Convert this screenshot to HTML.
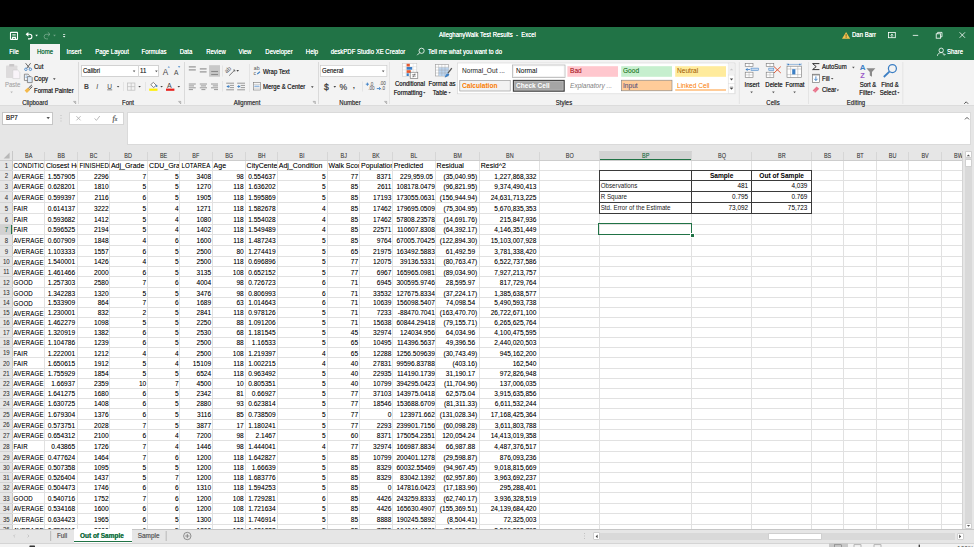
<!DOCTYPE html>
<html><head><meta charset="utf-8"><style>
html,body{margin:0;padding:0;width:974px;height:547px;overflow:hidden;background:#fff;}
body{position:relative;font-family:"Liberation Sans",sans-serif;}
.t{position:absolute;white-space:nowrap;overflow:hidden;box-sizing:border-box;text-shadow:0 0 0.25px rgba(0,0,0,0.3);}
.u{position:absolute;white-space:nowrap;text-shadow:0 0 0.2px;}
</style></head><body>
<div style="position:absolute;left:0;top:150.5px;width:963.0px;height:9.800000000000011px;background:#e6e6e6"></div>
<div style="position:absolute;left:0;top:160.3px;width:12.3px;height:368.90000000000003px;background:#e6e6e6"></div>
<div style="position:absolute;left:12.3px;top:160.3px;width:950.7px;height:368.90000000000003px;background:#fff"></div>
<div style="position:absolute;left:599.3px;top:150.5px;width:92.30000000000007px;height:9.800000000000011px;background:#d2d2d2;border-bottom:1px solid #217346;box-sizing:border-box"></div>
<div style="position:absolute;left:0;top:224.3px;width:12.3px;height:10.099999999999994px;background:#d2d2d2;border-right:1px solid #217346;box-sizing:border-box"></div>
<div style="position:absolute;left:11.80px;top:150.5px;width:1px;height:378.70000000000005px;background:#c8c8c8"></div>
<div style="position:absolute;left:44.10px;top:151.5px;width:1px;height:8.800000000000011px;background:#d6d6d6"></div>
<div style="position:absolute;left:44.10px;top:160.3px;width:1px;height:368.90000000000003px;background:#e1e1e1"></div>
<div style="position:absolute;left:77.10px;top:151.5px;width:1px;height:8.800000000000011px;background:#d6d6d6"></div>
<div style="position:absolute;left:77.10px;top:160.3px;width:1px;height:368.90000000000003px;background:#e1e1e1"></div>
<div style="position:absolute;left:109.10px;top:151.5px;width:1px;height:8.800000000000011px;background:#d6d6d6"></div>
<div style="position:absolute;left:109.10px;top:160.3px;width:1px;height:368.90000000000003px;background:#e1e1e1"></div>
<div style="position:absolute;left:147.30px;top:151.5px;width:1px;height:8.800000000000011px;background:#d6d6d6"></div>
<div style="position:absolute;left:147.30px;top:160.3px;width:1px;height:368.90000000000003px;background:#e1e1e1"></div>
<div style="position:absolute;left:179.30px;top:151.5px;width:1px;height:8.800000000000011px;background:#d6d6d6"></div>
<div style="position:absolute;left:179.30px;top:160.3px;width:1px;height:368.90000000000003px;background:#e1e1e1"></div>
<div style="position:absolute;left:211.80px;top:151.5px;width:1px;height:8.800000000000011px;background:#d6d6d6"></div>
<div style="position:absolute;left:211.80px;top:160.3px;width:1px;height:368.90000000000003px;background:#e1e1e1"></div>
<div style="position:absolute;left:244.80px;top:151.5px;width:1px;height:8.800000000000011px;background:#d6d6d6"></div>
<div style="position:absolute;left:244.80px;top:160.3px;width:1px;height:368.90000000000003px;background:#e1e1e1"></div>
<div style="position:absolute;left:277.00px;top:151.5px;width:1px;height:8.800000000000011px;background:#d6d6d6"></div>
<div style="position:absolute;left:277.00px;top:160.3px;width:1px;height:368.90000000000003px;background:#e1e1e1"></div>
<div style="position:absolute;left:326.80px;top:151.5px;width:1px;height:8.800000000000011px;background:#d6d6d6"></div>
<div style="position:absolute;left:326.80px;top:160.3px;width:1px;height:368.90000000000003px;background:#e1e1e1"></div>
<div style="position:absolute;left:359.20px;top:151.5px;width:1px;height:8.800000000000011px;background:#d6d6d6"></div>
<div style="position:absolute;left:359.20px;top:160.3px;width:1px;height:368.90000000000003px;background:#e1e1e1"></div>
<div style="position:absolute;left:391.90px;top:151.5px;width:1px;height:8.800000000000011px;background:#d6d6d6"></div>
<div style="position:absolute;left:391.90px;top:160.3px;width:1px;height:368.90000000000003px;background:#e1e1e1"></div>
<div style="position:absolute;left:434.80px;top:151.5px;width:1px;height:8.800000000000011px;background:#d6d6d6"></div>
<div style="position:absolute;left:434.80px;top:160.3px;width:1px;height:368.90000000000003px;background:#e1e1e1"></div>
<div style="position:absolute;left:479.00px;top:151.5px;width:1px;height:8.800000000000011px;background:#d6d6d6"></div>
<div style="position:absolute;left:479.00px;top:160.3px;width:1px;height:368.90000000000003px;background:#e1e1e1"></div>
<div style="position:absolute;left:538.90px;top:151.5px;width:1px;height:8.800000000000011px;background:#d6d6d6"></div>
<div style="position:absolute;left:538.90px;top:160.3px;width:1px;height:368.90000000000003px;background:#e1e1e1"></div>
<div style="position:absolute;left:598.80px;top:151.5px;width:1px;height:8.800000000000011px;background:#d6d6d6"></div>
<div style="position:absolute;left:598.80px;top:160.3px;width:1px;height:368.90000000000003px;background:#e1e1e1"></div>
<div style="position:absolute;left:691.10px;top:151.5px;width:1px;height:8.800000000000011px;background:#d6d6d6"></div>
<div style="position:absolute;left:691.10px;top:160.3px;width:1px;height:368.90000000000003px;background:#e1e1e1"></div>
<div style="position:absolute;left:751.20px;top:151.5px;width:1px;height:8.800000000000011px;background:#d6d6d6"></div>
<div style="position:absolute;left:751.20px;top:160.3px;width:1px;height:368.90000000000003px;background:#e1e1e1"></div>
<div style="position:absolute;left:811.10px;top:151.5px;width:1px;height:8.800000000000011px;background:#d6d6d6"></div>
<div style="position:absolute;left:811.10px;top:160.3px;width:1px;height:368.90000000000003px;background:#e1e1e1"></div>
<div style="position:absolute;left:843.10px;top:151.5px;width:1px;height:8.800000000000011px;background:#d6d6d6"></div>
<div style="position:absolute;left:843.10px;top:160.3px;width:1px;height:368.90000000000003px;background:#e1e1e1"></div>
<div style="position:absolute;left:876.10px;top:151.5px;width:1px;height:8.800000000000011px;background:#d6d6d6"></div>
<div style="position:absolute;left:876.10px;top:160.3px;width:1px;height:368.90000000000003px;background:#e1e1e1"></div>
<div style="position:absolute;left:908.20px;top:151.5px;width:1px;height:8.800000000000011px;background:#d6d6d6"></div>
<div style="position:absolute;left:908.20px;top:160.3px;width:1px;height:368.90000000000003px;background:#e1e1e1"></div>
<div style="position:absolute;left:941.10px;top:151.5px;width:1px;height:8.800000000000011px;background:#d6d6d6"></div>
<div style="position:absolute;left:941.10px;top:160.3px;width:1px;height:368.90000000000003px;background:#e1e1e1"></div>
<div style="position:absolute;left:0;top:159.80px;width:963.0px;height:1px;background:#cdcdcd"></div>
<div style="position:absolute;left:12.3px;top:169.90px;width:950.7px;height:1px;background:#e1e1e1"></div>
<div style="position:absolute;left:0;top:169.90px;width:12.3px;height:1px;background:#d4d4d4"></div>
<div style="position:absolute;left:12.3px;top:180.30px;width:950.7px;height:1px;background:#e1e1e1"></div>
<div style="position:absolute;left:0;top:180.30px;width:12.3px;height:1px;background:#d4d4d4"></div>
<div style="position:absolute;left:12.3px;top:190.90px;width:950.7px;height:1px;background:#e1e1e1"></div>
<div style="position:absolute;left:0;top:190.90px;width:12.3px;height:1px;background:#d4d4d4"></div>
<div style="position:absolute;left:12.3px;top:201.90px;width:950.7px;height:1px;background:#e1e1e1"></div>
<div style="position:absolute;left:0;top:201.90px;width:12.3px;height:1px;background:#d4d4d4"></div>
<div style="position:absolute;left:12.3px;top:212.90px;width:950.7px;height:1px;background:#e1e1e1"></div>
<div style="position:absolute;left:0;top:212.90px;width:12.3px;height:1px;background:#d4d4d4"></div>
<div style="position:absolute;left:12.3px;top:223.80px;width:950.7px;height:1px;background:#e1e1e1"></div>
<div style="position:absolute;left:0;top:223.80px;width:12.3px;height:1px;background:#d4d4d4"></div>
<div style="position:absolute;left:12.3px;top:233.90px;width:950.7px;height:1px;background:#e1e1e1"></div>
<div style="position:absolute;left:0;top:233.90px;width:12.3px;height:1px;background:#d4d4d4"></div>
<div style="position:absolute;left:12.3px;top:244.80px;width:950.7px;height:1px;background:#e1e1e1"></div>
<div style="position:absolute;left:0;top:244.80px;width:12.3px;height:1px;background:#d4d4d4"></div>
<div style="position:absolute;left:12.3px;top:255.80px;width:950.7px;height:1px;background:#e1e1e1"></div>
<div style="position:absolute;left:0;top:255.80px;width:12.3px;height:1px;background:#d4d4d4"></div>
<div style="position:absolute;left:12.3px;top:266.10px;width:950.7px;height:1px;background:#e1e1e1"></div>
<div style="position:absolute;left:0;top:266.10px;width:12.3px;height:1px;background:#d4d4d4"></div>
<div style="position:absolute;left:12.3px;top:276.30px;width:950.7px;height:1px;background:#e1e1e1"></div>
<div style="position:absolute;left:0;top:276.30px;width:12.3px;height:1px;background:#d4d4d4"></div>
<div style="position:absolute;left:12.3px;top:287.00px;width:950.7px;height:1px;background:#e1e1e1"></div>
<div style="position:absolute;left:0;top:287.00px;width:12.3px;height:1px;background:#d4d4d4"></div>
<div style="position:absolute;left:12.3px;top:297.20px;width:950.7px;height:1px;background:#e1e1e1"></div>
<div style="position:absolute;left:0;top:297.20px;width:12.3px;height:1px;background:#d4d4d4"></div>
<div style="position:absolute;left:12.3px;top:307.10px;width:950.7px;height:1px;background:#e1e1e1"></div>
<div style="position:absolute;left:0;top:307.10px;width:12.3px;height:1px;background:#d4d4d4"></div>
<div style="position:absolute;left:12.3px;top:317.10px;width:950.7px;height:1px;background:#e1e1e1"></div>
<div style="position:absolute;left:0;top:317.10px;width:12.3px;height:1px;background:#d4d4d4"></div>
<div style="position:absolute;left:12.3px;top:326.90px;width:950.7px;height:1px;background:#e1e1e1"></div>
<div style="position:absolute;left:0;top:326.90px;width:12.3px;height:1px;background:#d4d4d4"></div>
<div style="position:absolute;left:12.3px;top:336.80px;width:950.7px;height:1px;background:#e1e1e1"></div>
<div style="position:absolute;left:0;top:336.80px;width:12.3px;height:1px;background:#d4d4d4"></div>
<div style="position:absolute;left:12.3px;top:347.00px;width:950.7px;height:1px;background:#e1e1e1"></div>
<div style="position:absolute;left:0;top:347.00px;width:12.3px;height:1px;background:#d4d4d4"></div>
<div style="position:absolute;left:12.3px;top:357.40px;width:950.7px;height:1px;background:#e1e1e1"></div>
<div style="position:absolute;left:0;top:357.40px;width:12.3px;height:1px;background:#d4d4d4"></div>
<div style="position:absolute;left:12.3px;top:367.80px;width:950.7px;height:1px;background:#e1e1e1"></div>
<div style="position:absolute;left:0;top:367.80px;width:12.3px;height:1px;background:#d4d4d4"></div>
<div style="position:absolute;left:12.3px;top:377.90px;width:950.7px;height:1px;background:#e1e1e1"></div>
<div style="position:absolute;left:0;top:377.90px;width:12.3px;height:1px;background:#d4d4d4"></div>
<div style="position:absolute;left:12.3px;top:387.90px;width:950.7px;height:1px;background:#e1e1e1"></div>
<div style="position:absolute;left:0;top:387.90px;width:12.3px;height:1px;background:#d4d4d4"></div>
<div style="position:absolute;left:12.3px;top:398.00px;width:950.7px;height:1px;background:#e1e1e1"></div>
<div style="position:absolute;left:0;top:398.00px;width:12.3px;height:1px;background:#d4d4d4"></div>
<div style="position:absolute;left:12.3px;top:407.90px;width:950.7px;height:1px;background:#e1e1e1"></div>
<div style="position:absolute;left:0;top:407.90px;width:12.3px;height:1px;background:#d4d4d4"></div>
<div style="position:absolute;left:12.3px;top:418.70px;width:950.7px;height:1px;background:#e1e1e1"></div>
<div style="position:absolute;left:0;top:418.70px;width:12.3px;height:1px;background:#d4d4d4"></div>
<div style="position:absolute;left:12.3px;top:429.30px;width:950.7px;height:1px;background:#e1e1e1"></div>
<div style="position:absolute;left:0;top:429.30px;width:12.3px;height:1px;background:#d4d4d4"></div>
<div style="position:absolute;left:12.3px;top:440.00px;width:950.7px;height:1px;background:#e1e1e1"></div>
<div style="position:absolute;left:0;top:440.00px;width:12.3px;height:1px;background:#d4d4d4"></div>
<div style="position:absolute;left:12.3px;top:450.70px;width:950.7px;height:1px;background:#e1e1e1"></div>
<div style="position:absolute;left:0;top:450.70px;width:12.3px;height:1px;background:#d4d4d4"></div>
<div style="position:absolute;left:12.3px;top:461.90px;width:950.7px;height:1px;background:#e1e1e1"></div>
<div style="position:absolute;left:0;top:461.90px;width:12.3px;height:1px;background:#d4d4d4"></div>
<div style="position:absolute;left:12.3px;top:472.00px;width:950.7px;height:1px;background:#e1e1e1"></div>
<div style="position:absolute;left:0;top:472.00px;width:12.3px;height:1px;background:#d4d4d4"></div>
<div style="position:absolute;left:12.3px;top:482.00px;width:950.7px;height:1px;background:#e1e1e1"></div>
<div style="position:absolute;left:0;top:482.00px;width:12.3px;height:1px;background:#d4d4d4"></div>
<div style="position:absolute;left:12.3px;top:491.90px;width:950.7px;height:1px;background:#e1e1e1"></div>
<div style="position:absolute;left:0;top:491.90px;width:12.3px;height:1px;background:#d4d4d4"></div>
<div style="position:absolute;left:12.3px;top:502.60px;width:950.7px;height:1px;background:#e1e1e1"></div>
<div style="position:absolute;left:0;top:502.60px;width:12.3px;height:1px;background:#d4d4d4"></div>
<div style="position:absolute;left:12.3px;top:512.70px;width:950.7px;height:1px;background:#e1e1e1"></div>
<div style="position:absolute;left:0;top:512.70px;width:12.3px;height:1px;background:#d4d4d4"></div>
<div style="position:absolute;left:12.3px;top:523.80px;width:950.7px;height:1px;background:#e1e1e1"></div>
<div style="position:absolute;left:0;top:523.80px;width:12.3px;height:1px;background:#d4d4d4"></div>
<div class="t" style="left:9.67px;top:151.58px;width:37.56px;height:8.0px;line-height:8.0px;font-size:6.4px;text-align:center;color:#444;transform:scaleX(0.86);transform-origin:50% 50%;">BA</div>
<div class="t" style="left:41.91px;top:151.58px;width:38.37px;height:8.0px;line-height:8.0px;font-size:6.4px;text-align:center;color:#444;transform:scaleX(0.86);transform-origin:50% 50%;">BB</div>
<div class="t" style="left:75.00px;top:151.58px;width:37.21px;height:8.0px;line-height:8.0px;font-size:6.4px;text-align:center;color:#444;transform:scaleX(0.86);transform-origin:50% 50%;">BC</div>
<div class="t" style="left:106.49px;top:151.58px;width:44.42px;height:8.0px;line-height:8.0px;font-size:6.4px;text-align:center;color:#444;transform:scaleX(0.86);transform-origin:50% 50%;">BD</div>
<div class="t" style="left:145.20px;top:151.58px;width:37.21px;height:8.0px;line-height:8.0px;font-size:6.4px;text-align:center;color:#444;transform:scaleX(0.86);transform-origin:50% 50%;">BE</div>
<div class="t" style="left:177.15px;top:151.58px;width:37.79px;height:8.0px;line-height:8.0px;font-size:6.4px;text-align:center;color:#444;transform:scaleX(0.86);transform-origin:50% 50%;">BF</div>
<div class="t" style="left:209.61px;top:151.58px;width:38.37px;height:8.0px;line-height:8.0px;font-size:6.4px;text-align:center;color:#444;transform:scaleX(0.86);transform-origin:50% 50%;">BG</div>
<div class="t" style="left:242.68px;top:151.58px;width:37.44px;height:8.0px;line-height:8.0px;font-size:6.4px;text-align:center;color:#444;transform:scaleX(0.86);transform-origin:50% 50%;">BH</div>
<div class="t" style="left:273.45px;top:151.58px;width:57.91px;height:8.0px;line-height:8.0px;font-size:6.4px;text-align:center;color:#444;transform:scaleX(0.86);transform-origin:50% 50%;">BI</div>
<div class="t" style="left:324.66px;top:151.58px;width:37.67px;height:8.0px;line-height:8.0px;font-size:6.4px;text-align:center;color:#444;transform:scaleX(0.86);transform-origin:50% 50%;">BJ</div>
<div class="t" style="left:357.04px;top:151.58px;width:38.02px;height:8.0px;line-height:8.0px;font-size:6.4px;text-align:center;color:#444;transform:scaleX(0.86);transform-origin:50% 50%;">BK</div>
<div class="t" style="left:388.91px;top:151.58px;width:49.88px;height:8.0px;line-height:8.0px;font-size:6.4px;text-align:center;color:#444;transform:scaleX(0.86);transform-origin:50% 50%;">BL</div>
<div class="t" style="left:431.70px;top:151.58px;width:51.40px;height:8.0px;line-height:8.0px;font-size:6.4px;text-align:center;color:#444;transform:scaleX(0.86);transform-origin:50% 50%;">BM</div>
<div class="t" style="left:474.62px;top:151.58px;width:69.65px;height:8.0px;line-height:8.0px;font-size:6.4px;text-align:center;color:#444;transform:scaleX(0.86);transform-origin:50% 50%;">BN</div>
<div class="t" style="left:534.52px;top:151.58px;width:69.65px;height:8.0px;line-height:8.0px;font-size:6.4px;text-align:center;color:#444;transform:scaleX(0.86);transform-origin:50% 50%;">BO</div>
<div class="t" style="left:591.79px;top:151.58px;width:107.33px;height:8.0px;line-height:8.0px;font-size:6.4px;text-align:center;color:#217346;transform:scaleX(0.86);transform-origin:50% 50%;">BP</div>
<div class="t" style="left:686.71px;top:151.58px;width:69.88px;height:8.0px;line-height:8.0px;font-size:6.4px;text-align:center;color:#444;transform:scaleX(0.86);transform-origin:50% 50%;">BQ</div>
<div class="t" style="left:746.82px;top:151.58px;width:69.65px;height:8.0px;line-height:8.0px;font-size:6.4px;text-align:center;color:#444;transform:scaleX(0.86);transform-origin:50% 50%;">BR</div>
<div class="t" style="left:809.00px;top:151.58px;width:37.21px;height:8.0px;line-height:8.0px;font-size:6.4px;text-align:center;color:#444;transform:scaleX(0.86);transform-origin:50% 50%;">BS</div>
<div class="t" style="left:840.91px;top:151.58px;width:38.37px;height:8.0px;line-height:8.0px;font-size:6.4px;text-align:center;color:#444;transform:scaleX(0.86);transform-origin:50% 50%;">BT</div>
<div class="t" style="left:873.99px;top:151.58px;width:37.33px;height:8.0px;line-height:8.0px;font-size:6.4px;text-align:center;color:#444;transform:scaleX(0.86);transform-origin:50% 50%;">BU</div>
<div class="t" style="left:906.02px;top:151.58px;width:38.26px;height:8.0px;line-height:8.0px;font-size:6.4px;text-align:center;color:#444;transform:scaleX(0.86);transform-origin:50% 50%;">BV</div>
<div class="t" style="left:938.88px;top:151.58px;width:38.84px;height:8.0px;line-height:8.0px;font-size:6.4px;text-align:center;color:#444;transform:scaleX(0.86);transform-origin:50% 50%;">BW</div>
<div class="t" style="left:-1.03px;top:161.89px;width:14.65px;height:8.0px;line-height:8.0px;font-size:7.0px;text-align:center;color:#444;transform:scaleX(0.86);transform-origin:50% 50%;">1</div>
<div class="t" style="left:-1.03px;top:172.29px;width:14.65px;height:8.0px;line-height:8.0px;font-size:7.0px;text-align:center;color:#444;transform:scaleX(0.86);transform-origin:50% 50%;">2</div>
<div class="t" style="left:-1.03px;top:182.89px;width:14.65px;height:8.0px;line-height:8.0px;font-size:7.0px;text-align:center;color:#444;transform:scaleX(0.86);transform-origin:50% 50%;">3</div>
<div class="t" style="left:-1.03px;top:193.89px;width:14.65px;height:8.0px;line-height:8.0px;font-size:7.0px;text-align:center;color:#444;transform:scaleX(0.86);transform-origin:50% 50%;">4</div>
<div class="t" style="left:-1.03px;top:204.89px;width:14.65px;height:8.0px;line-height:8.0px;font-size:7.0px;text-align:center;color:#444;transform:scaleX(0.86);transform-origin:50% 50%;">5</div>
<div class="t" style="left:-1.03px;top:215.79px;width:14.65px;height:8.0px;line-height:8.0px;font-size:7.0px;text-align:center;color:#444;transform:scaleX(0.86);transform-origin:50% 50%;">6</div>
<div class="t" style="left:-1.03px;top:225.89px;width:14.65px;height:8.0px;line-height:8.0px;font-size:7.0px;text-align:center;color:#217346;transform:scaleX(0.86);transform-origin:50% 50%;">7</div>
<div class="t" style="left:-1.03px;top:236.79px;width:14.65px;height:8.0px;line-height:8.0px;font-size:7.0px;text-align:center;color:#444;transform:scaleX(0.86);transform-origin:50% 50%;">8</div>
<div class="t" style="left:-1.03px;top:247.79px;width:14.65px;height:8.0px;line-height:8.0px;font-size:7.0px;text-align:center;color:#444;transform:scaleX(0.86);transform-origin:50% 50%;">9</div>
<div class="t" style="left:-1.03px;top:258.09px;width:14.65px;height:8.0px;line-height:8.0px;font-size:7.0px;text-align:center;color:#444;transform:scaleX(0.86);transform-origin:50% 50%;">10</div>
<div class="t" style="left:-1.03px;top:268.29px;width:14.65px;height:8.0px;line-height:8.0px;font-size:7.0px;text-align:center;color:#444;transform:scaleX(0.86);transform-origin:50% 50%;">11</div>
<div class="t" style="left:-1.03px;top:278.99px;width:14.65px;height:8.0px;line-height:8.0px;font-size:7.0px;text-align:center;color:#444;transform:scaleX(0.86);transform-origin:50% 50%;">12</div>
<div class="t" style="left:-1.03px;top:289.19px;width:14.65px;height:8.0px;line-height:8.0px;font-size:7.0px;text-align:center;color:#444;transform:scaleX(0.86);transform-origin:50% 50%;">13</div>
<div class="t" style="left:-1.03px;top:299.09px;width:14.65px;height:8.0px;line-height:8.0px;font-size:7.0px;text-align:center;color:#444;transform:scaleX(0.86);transform-origin:50% 50%;">14</div>
<div class="t" style="left:-1.03px;top:309.09px;width:14.65px;height:8.0px;line-height:8.0px;font-size:7.0px;text-align:center;color:#444;transform:scaleX(0.86);transform-origin:50% 50%;">15</div>
<div class="t" style="left:-1.03px;top:318.89px;width:14.65px;height:8.0px;line-height:8.0px;font-size:7.0px;text-align:center;color:#444;transform:scaleX(0.86);transform-origin:50% 50%;">16</div>
<div class="t" style="left:-1.03px;top:328.79px;width:14.65px;height:8.0px;line-height:8.0px;font-size:7.0px;text-align:center;color:#444;transform:scaleX(0.86);transform-origin:50% 50%;">17</div>
<div class="t" style="left:-1.03px;top:338.99px;width:14.65px;height:8.0px;line-height:8.0px;font-size:7.0px;text-align:center;color:#444;transform:scaleX(0.86);transform-origin:50% 50%;">18</div>
<div class="t" style="left:-1.03px;top:349.39px;width:14.65px;height:8.0px;line-height:8.0px;font-size:7.0px;text-align:center;color:#444;transform:scaleX(0.86);transform-origin:50% 50%;">19</div>
<div class="t" style="left:-1.03px;top:359.79px;width:14.65px;height:8.0px;line-height:8.0px;font-size:7.0px;text-align:center;color:#444;transform:scaleX(0.86);transform-origin:50% 50%;">20</div>
<div class="t" style="left:-1.03px;top:369.89px;width:14.65px;height:8.0px;line-height:8.0px;font-size:7.0px;text-align:center;color:#444;transform:scaleX(0.86);transform-origin:50% 50%;">21</div>
<div class="t" style="left:-1.03px;top:379.89px;width:14.65px;height:8.0px;line-height:8.0px;font-size:7.0px;text-align:center;color:#444;transform:scaleX(0.86);transform-origin:50% 50%;">22</div>
<div class="t" style="left:-1.03px;top:389.99px;width:14.65px;height:8.0px;line-height:8.0px;font-size:7.0px;text-align:center;color:#444;transform:scaleX(0.86);transform-origin:50% 50%;">23</div>
<div class="t" style="left:-1.03px;top:399.89px;width:14.65px;height:8.0px;line-height:8.0px;font-size:7.0px;text-align:center;color:#444;transform:scaleX(0.86);transform-origin:50% 50%;">24</div>
<div class="t" style="left:-1.03px;top:410.69px;width:14.65px;height:8.0px;line-height:8.0px;font-size:7.0px;text-align:center;color:#444;transform:scaleX(0.86);transform-origin:50% 50%;">25</div>
<div class="t" style="left:-1.03px;top:421.29px;width:14.65px;height:8.0px;line-height:8.0px;font-size:7.0px;text-align:center;color:#444;transform:scaleX(0.86);transform-origin:50% 50%;">26</div>
<div class="t" style="left:-1.03px;top:431.99px;width:14.65px;height:8.0px;line-height:8.0px;font-size:7.0px;text-align:center;color:#444;transform:scaleX(0.86);transform-origin:50% 50%;">27</div>
<div class="t" style="left:-1.03px;top:442.69px;width:14.65px;height:8.0px;line-height:8.0px;font-size:7.0px;text-align:center;color:#444;transform:scaleX(0.86);transform-origin:50% 50%;">28</div>
<div class="t" style="left:-1.03px;top:453.89px;width:14.65px;height:8.0px;line-height:8.0px;font-size:7.0px;text-align:center;color:#444;transform:scaleX(0.86);transform-origin:50% 50%;">29</div>
<div class="t" style="left:-1.03px;top:463.99px;width:14.65px;height:8.0px;line-height:8.0px;font-size:7.0px;text-align:center;color:#444;transform:scaleX(0.86);transform-origin:50% 50%;">30</div>
<div class="t" style="left:-1.03px;top:473.99px;width:14.65px;height:8.0px;line-height:8.0px;font-size:7.0px;text-align:center;color:#444;transform:scaleX(0.86);transform-origin:50% 50%;">31</div>
<div class="t" style="left:-1.03px;top:483.89px;width:14.65px;height:8.0px;line-height:8.0px;font-size:7.0px;text-align:center;color:#444;transform:scaleX(0.86);transform-origin:50% 50%;">32</div>
<div class="t" style="left:-1.03px;top:494.59px;width:14.65px;height:8.0px;line-height:8.0px;font-size:7.0px;text-align:center;color:#444;transform:scaleX(0.86);transform-origin:50% 50%;">33</div>
<div class="t" style="left:-1.03px;top:504.69px;width:14.65px;height:8.0px;line-height:8.0px;font-size:7.0px;text-align:center;color:#444;transform:scaleX(0.86);transform-origin:50% 50%;">34</div>
<div class="t" style="left:-1.03px;top:515.79px;width:14.65px;height:8.0px;line-height:8.0px;font-size:7.0px;text-align:center;color:#444;transform:scaleX(0.86);transform-origin:50% 50%;">35</div>
<div class="t" style="left:-1.03px;top:526.19px;width:14.65px;height:8.0px;line-height:8.0px;font-size:7.0px;text-align:center;color:#444;transform:scaleX(0.86);transform-origin:50% 50%;">36</div>
<div class="t" style="left:12.30px;top:162.35px;width:35.33px;height:8.0px;line-height:8.0px;font-size:6.8px;text-align:left;color:#000;padding-left:1.56px;transform:scaleX(0.9);transform-origin:0 50%;letter-spacing:0.15px;">CONDITION</div>
<div class="t" style="left:44.60px;top:162.29px;width:32.50px;height:8.0px;line-height:8.0px;font-size:7.0px;text-align:left;color:#000;padding-left:1.30px;">Closest Hospital</div>
<div class="t" style="left:77.60px;top:162.35px;width:35.00px;height:8.0px;line-height:8.0px;font-size:6.8px;text-align:left;color:#000;padding-left:1.56px;transform:scaleX(0.9);transform-origin:0 50%;letter-spacing:0.15px;">FINISHEDLIVEAREA</div>
<div class="t" style="left:109.60px;top:162.29px;width:37.70px;height:8.0px;line-height:8.0px;font-size:7.0px;text-align:left;color:#000;padding-left:1.30px;">Adj_Grade</div>
<div class="t" style="left:147.80px;top:162.29px;width:31.50px;height:8.0px;line-height:8.0px;font-size:7.0px;text-align:left;color:#000;padding-left:1.30px;">CDU_Grade</div>
<div class="t" style="left:179.80px;top:162.35px;width:35.56px;height:8.0px;line-height:8.0px;font-size:6.8px;text-align:left;color:#000;padding-left:1.56px;transform:scaleX(0.9);transform-origin:0 50%;letter-spacing:0.15px;">LOTAREA</div>
<div class="t" style="left:212.30px;top:162.29px;width:32.50px;height:8.0px;line-height:8.0px;font-size:7.0px;text-align:left;color:#000;padding-left:1.30px;">Age</div>
<div class="t" style="left:245.30px;top:162.29px;width:31.70px;height:8.0px;line-height:8.0px;font-size:7.0px;text-align:left;color:#000;padding-left:1.30px;">CityCenter</div>
<div class="t" style="left:277.50px;top:162.29px;width:49.30px;height:8.0px;line-height:8.0px;font-size:7.0px;text-align:left;color:#000;padding-left:1.30px;">Adj_Condition</div>
<div class="t" style="left:327.30px;top:162.29px;width:31.90px;height:8.0px;line-height:8.0px;font-size:7.0px;text-align:left;color:#000;padding-left:1.30px;">Walk Score</div>
<div class="t" style="left:359.70px;top:162.29px;width:32.20px;height:8.0px;line-height:8.0px;font-size:7.0px;text-align:left;color:#000;padding-left:1.30px;">Population</div>
<div class="t" style="left:392.40px;top:162.29px;width:42.40px;height:8.0px;line-height:8.0px;font-size:7.0px;text-align:left;color:#000;padding-left:1.30px;">Predicted</div>
<div class="t" style="left:435.30px;top:162.29px;width:43.70px;height:8.0px;line-height:8.0px;font-size:7.0px;text-align:left;color:#000;padding-left:1.30px;">Residual</div>
<div class="t" style="left:479.50px;top:162.29px;width:59.40px;height:8.0px;line-height:8.0px;font-size:7.0px;text-align:left;color:#000;padding-left:1.30px;">Resid^2</div>
<div class="t" style="left:12.30px;top:172.75px;width:35.89px;height:8.0px;line-height:8.0px;font-size:6.8px;text-align:left;color:#000;padding-left:1.78px;transform:scaleX(0.9);transform-origin:0 50%;letter-spacing:0.15px;">AVERAGE</div>
<div class="t" style="left:42.49px;top:172.69px;width:35.11px;height:8.0px;line-height:8.0px;font-size:7.0px;text-align:right;color:#000;padding-right:2.13px;transform:scaleX(0.94);transform-origin:100% 50%;">1.557905</div>
<div class="t" style="left:75.56px;top:172.69px;width:34.04px;height:8.0px;line-height:8.0px;font-size:7.0px;text-align:right;color:#000;padding-right:1.49px;transform:scaleX(0.94);transform-origin:100% 50%;">2296</div>
<div class="t" style="left:107.16px;top:172.69px;width:40.64px;height:8.0px;line-height:8.0px;font-size:7.0px;text-align:right;color:#000;padding-right:1.49px;transform:scaleX(0.94);transform-origin:100% 50%;">7</div>
<div class="t" style="left:145.76px;top:172.69px;width:34.04px;height:8.0px;line-height:8.0px;font-size:7.0px;text-align:right;color:#000;padding-right:1.49px;transform:scaleX(0.94);transform-origin:100% 50%;">5</div>
<div class="t" style="left:177.73px;top:172.69px;width:34.57px;height:8.0px;line-height:8.0px;font-size:7.0px;text-align:right;color:#000;padding-right:1.49px;transform:scaleX(0.94);transform-origin:100% 50%;">3408</div>
<div class="t" style="left:210.19px;top:172.69px;width:35.11px;height:8.0px;line-height:8.0px;font-size:7.0px;text-align:right;color:#000;padding-right:1.49px;transform:scaleX(0.94);transform-origin:100% 50%;">98</div>
<div class="t" style="left:243.24px;top:172.69px;width:34.26px;height:8.0px;line-height:8.0px;font-size:7.0px;text-align:right;color:#000;padding-right:1.70px;transform:scaleX(0.94);transform-origin:100% 50%;">0.554637</div>
<div class="t" style="left:274.32px;top:172.69px;width:52.98px;height:8.0px;line-height:8.0px;font-size:7.0px;text-align:right;color:#000;padding-right:1.49px;transform:scaleX(0.94);transform-origin:100% 50%;">5</div>
<div class="t" style="left:325.23px;top:172.69px;width:34.47px;height:8.0px;line-height:8.0px;font-size:7.0px;text-align:right;color:#000;padding-right:1.49px;transform:scaleX(0.94);transform-origin:100% 50%;">77</div>
<div class="t" style="left:357.61px;top:172.69px;width:34.79px;height:8.0px;line-height:8.0px;font-size:7.0px;text-align:right;color:#000;padding-right:1.49px;transform:scaleX(0.94);transform-origin:100% 50%;">8371</div>
<div class="t" style="left:389.66px;top:172.69px;width:45.64px;height:8.0px;line-height:8.0px;font-size:7.0px;text-align:right;color:#000;padding-right:2.77px;transform:scaleX(0.94);transform-origin:100% 50%;">229,959.05</div>
<div class="t" style="left:432.48px;top:172.69px;width:47.02px;height:8.0px;line-height:8.0px;font-size:7.0px;text-align:right;color:#000;padding-right:2.02px;transform:scaleX(0.94);transform-origin:100% 50%;">(35,040.95)</div>
<div class="t" style="left:475.68px;top:172.69px;width:63.72px;height:8.0px;line-height:8.0px;font-size:7.0px;text-align:right;color:#000;padding-right:3.51px;transform:scaleX(0.94);transform-origin:100% 50%;">1,227,868,332</div>
<div class="t" style="left:12.30px;top:183.35px;width:35.89px;height:8.0px;line-height:8.0px;font-size:6.8px;text-align:left;color:#000;padding-left:1.78px;transform:scaleX(0.9);transform-origin:0 50%;letter-spacing:0.15px;">AVERAGE</div>
<div class="t" style="left:42.49px;top:183.29px;width:35.11px;height:8.0px;line-height:8.0px;font-size:7.0px;text-align:right;color:#000;padding-right:2.13px;transform:scaleX(0.94);transform-origin:100% 50%;">0.628201</div>
<div class="t" style="left:75.56px;top:183.29px;width:34.04px;height:8.0px;line-height:8.0px;font-size:7.0px;text-align:right;color:#000;padding-right:1.49px;transform:scaleX(0.94);transform-origin:100% 50%;">1810</div>
<div class="t" style="left:107.16px;top:183.29px;width:40.64px;height:8.0px;line-height:8.0px;font-size:7.0px;text-align:right;color:#000;padding-right:1.49px;transform:scaleX(0.94);transform-origin:100% 50%;">5</div>
<div class="t" style="left:145.76px;top:183.29px;width:34.04px;height:8.0px;line-height:8.0px;font-size:7.0px;text-align:right;color:#000;padding-right:1.49px;transform:scaleX(0.94);transform-origin:100% 50%;">5</div>
<div class="t" style="left:177.73px;top:183.29px;width:34.57px;height:8.0px;line-height:8.0px;font-size:7.0px;text-align:right;color:#000;padding-right:1.49px;transform:scaleX(0.94);transform-origin:100% 50%;">1270</div>
<div class="t" style="left:210.19px;top:183.29px;width:35.11px;height:8.0px;line-height:8.0px;font-size:7.0px;text-align:right;color:#000;padding-right:1.49px;transform:scaleX(0.94);transform-origin:100% 50%;">118</div>
<div class="t" style="left:243.24px;top:183.29px;width:34.26px;height:8.0px;line-height:8.0px;font-size:7.0px;text-align:right;color:#000;padding-right:1.70px;transform:scaleX(0.94);transform-origin:100% 50%;">1.636202</div>
<div class="t" style="left:274.32px;top:183.29px;width:52.98px;height:8.0px;line-height:8.0px;font-size:7.0px;text-align:right;color:#000;padding-right:1.49px;transform:scaleX(0.94);transform-origin:100% 50%;">5</div>
<div class="t" style="left:325.23px;top:183.29px;width:34.47px;height:8.0px;line-height:8.0px;font-size:7.0px;text-align:right;color:#000;padding-right:1.49px;transform:scaleX(0.94);transform-origin:100% 50%;">85</div>
<div class="t" style="left:357.61px;top:183.29px;width:34.79px;height:8.0px;line-height:8.0px;font-size:7.0px;text-align:right;color:#000;padding-right:1.49px;transform:scaleX(0.94);transform-origin:100% 50%;">2611</div>
<div class="t" style="left:389.66px;top:183.29px;width:45.64px;height:8.0px;line-height:8.0px;font-size:7.0px;text-align:right;color:#000;padding-right:0.85px;transform:scaleX(0.94);transform-origin:100% 50%;">108178.0479</div>
<div class="t" style="left:432.48px;top:183.29px;width:47.02px;height:8.0px;line-height:8.0px;font-size:7.0px;text-align:right;color:#000;padding-right:2.02px;transform:scaleX(0.94);transform-origin:100% 50%;">(96,821.95)</div>
<div class="t" style="left:475.68px;top:183.29px;width:63.72px;height:8.0px;line-height:8.0px;font-size:7.0px;text-align:right;color:#000;padding-right:3.51px;transform:scaleX(0.94);transform-origin:100% 50%;">9,374,490,413</div>
<div class="t" style="left:12.30px;top:194.35px;width:35.89px;height:8.0px;line-height:8.0px;font-size:6.8px;text-align:left;color:#000;padding-left:1.78px;transform:scaleX(0.9);transform-origin:0 50%;letter-spacing:0.15px;">AVERAGE</div>
<div class="t" style="left:42.49px;top:194.29px;width:35.11px;height:8.0px;line-height:8.0px;font-size:7.0px;text-align:right;color:#000;padding-right:2.13px;transform:scaleX(0.94);transform-origin:100% 50%;">0.599397</div>
<div class="t" style="left:75.56px;top:194.29px;width:34.04px;height:8.0px;line-height:8.0px;font-size:7.0px;text-align:right;color:#000;padding-right:1.49px;transform:scaleX(0.94);transform-origin:100% 50%;">2116</div>
<div class="t" style="left:107.16px;top:194.29px;width:40.64px;height:8.0px;line-height:8.0px;font-size:7.0px;text-align:right;color:#000;padding-right:1.49px;transform:scaleX(0.94);transform-origin:100% 50%;">6</div>
<div class="t" style="left:145.76px;top:194.29px;width:34.04px;height:8.0px;line-height:8.0px;font-size:7.0px;text-align:right;color:#000;padding-right:1.49px;transform:scaleX(0.94);transform-origin:100% 50%;">5</div>
<div class="t" style="left:177.73px;top:194.29px;width:34.57px;height:8.0px;line-height:8.0px;font-size:7.0px;text-align:right;color:#000;padding-right:1.49px;transform:scaleX(0.94);transform-origin:100% 50%;">1905</div>
<div class="t" style="left:210.19px;top:194.29px;width:35.11px;height:8.0px;line-height:8.0px;font-size:7.0px;text-align:right;color:#000;padding-right:1.49px;transform:scaleX(0.94);transform-origin:100% 50%;">118</div>
<div class="t" style="left:243.24px;top:194.29px;width:34.26px;height:8.0px;line-height:8.0px;font-size:7.0px;text-align:right;color:#000;padding-right:1.70px;transform:scaleX(0.94);transform-origin:100% 50%;">1.595869</div>
<div class="t" style="left:274.32px;top:194.29px;width:52.98px;height:8.0px;line-height:8.0px;font-size:7.0px;text-align:right;color:#000;padding-right:1.49px;transform:scaleX(0.94);transform-origin:100% 50%;">5</div>
<div class="t" style="left:325.23px;top:194.29px;width:34.47px;height:8.0px;line-height:8.0px;font-size:7.0px;text-align:right;color:#000;padding-right:1.49px;transform:scaleX(0.94);transform-origin:100% 50%;">85</div>
<div class="t" style="left:357.61px;top:194.29px;width:34.79px;height:8.0px;line-height:8.0px;font-size:7.0px;text-align:right;color:#000;padding-right:1.49px;transform:scaleX(0.94);transform-origin:100% 50%;">17193</div>
<div class="t" style="left:389.66px;top:194.29px;width:45.64px;height:8.0px;line-height:8.0px;font-size:7.0px;text-align:right;color:#000;padding-right:0.85px;transform:scaleX(0.94);transform-origin:100% 50%;">173055.0631</div>
<div class="t" style="left:432.48px;top:194.29px;width:47.02px;height:8.0px;line-height:8.0px;font-size:7.0px;text-align:right;color:#000;padding-right:2.02px;transform:scaleX(0.94);transform-origin:100% 50%;">(156,944.94)</div>
<div class="t" style="left:475.68px;top:194.29px;width:63.72px;height:8.0px;line-height:8.0px;font-size:7.0px;text-align:right;color:#000;padding-right:3.51px;transform:scaleX(0.94);transform-origin:100% 50%;">24,631,713,225</div>
<div class="t" style="left:12.30px;top:205.35px;width:35.89px;height:8.0px;line-height:8.0px;font-size:6.8px;text-align:left;color:#000;padding-left:1.78px;transform:scaleX(0.9);transform-origin:0 50%;letter-spacing:0.15px;">FAIR</div>
<div class="t" style="left:42.49px;top:205.29px;width:35.11px;height:8.0px;line-height:8.0px;font-size:7.0px;text-align:right;color:#000;padding-right:2.13px;transform:scaleX(0.94);transform-origin:100% 50%;">0.614137</div>
<div class="t" style="left:75.56px;top:205.29px;width:34.04px;height:8.0px;line-height:8.0px;font-size:7.0px;text-align:right;color:#000;padding-right:1.49px;transform:scaleX(0.94);transform-origin:100% 50%;">3222</div>
<div class="t" style="left:107.16px;top:205.29px;width:40.64px;height:8.0px;line-height:8.0px;font-size:7.0px;text-align:right;color:#000;padding-right:1.49px;transform:scaleX(0.94);transform-origin:100% 50%;">5</div>
<div class="t" style="left:145.76px;top:205.29px;width:34.04px;height:8.0px;line-height:8.0px;font-size:7.0px;text-align:right;color:#000;padding-right:1.49px;transform:scaleX(0.94);transform-origin:100% 50%;">4</div>
<div class="t" style="left:177.73px;top:205.29px;width:34.57px;height:8.0px;line-height:8.0px;font-size:7.0px;text-align:right;color:#000;padding-right:1.49px;transform:scaleX(0.94);transform-origin:100% 50%;">1271</div>
<div class="t" style="left:210.19px;top:205.29px;width:35.11px;height:8.0px;line-height:8.0px;font-size:7.0px;text-align:right;color:#000;padding-right:1.49px;transform:scaleX(0.94);transform-origin:100% 50%;">118</div>
<div class="t" style="left:243.24px;top:205.29px;width:34.26px;height:8.0px;line-height:8.0px;font-size:7.0px;text-align:right;color:#000;padding-right:1.70px;transform:scaleX(0.94);transform-origin:100% 50%;">1.582678</div>
<div class="t" style="left:274.32px;top:205.29px;width:52.98px;height:8.0px;line-height:8.0px;font-size:7.0px;text-align:right;color:#000;padding-right:1.49px;transform:scaleX(0.94);transform-origin:100% 50%;">4</div>
<div class="t" style="left:325.23px;top:205.29px;width:34.47px;height:8.0px;line-height:8.0px;font-size:7.0px;text-align:right;color:#000;padding-right:1.49px;transform:scaleX(0.94);transform-origin:100% 50%;">85</div>
<div class="t" style="left:357.61px;top:205.29px;width:34.79px;height:8.0px;line-height:8.0px;font-size:7.0px;text-align:right;color:#000;padding-right:1.49px;transform:scaleX(0.94);transform-origin:100% 50%;">17462</div>
<div class="t" style="left:389.66px;top:205.29px;width:45.64px;height:8.0px;line-height:8.0px;font-size:7.0px;text-align:right;color:#000;padding-right:0.85px;transform:scaleX(0.94);transform-origin:100% 50%;">179695.0509</div>
<div class="t" style="left:432.48px;top:205.29px;width:47.02px;height:8.0px;line-height:8.0px;font-size:7.0px;text-align:right;color:#000;padding-right:2.02px;transform:scaleX(0.94);transform-origin:100% 50%;">(75,304.95)</div>
<div class="t" style="left:475.68px;top:205.29px;width:63.72px;height:8.0px;line-height:8.0px;font-size:7.0px;text-align:right;color:#000;padding-right:3.51px;transform:scaleX(0.94);transform-origin:100% 50%;">5,670,835,353</div>
<div class="t" style="left:12.30px;top:216.25px;width:35.89px;height:8.0px;line-height:8.0px;font-size:6.8px;text-align:left;color:#000;padding-left:1.78px;transform:scaleX(0.9);transform-origin:0 50%;letter-spacing:0.15px;">FAIR</div>
<div class="t" style="left:42.49px;top:216.19px;width:35.11px;height:8.0px;line-height:8.0px;font-size:7.0px;text-align:right;color:#000;padding-right:2.13px;transform:scaleX(0.94);transform-origin:100% 50%;">0.593682</div>
<div class="t" style="left:75.56px;top:216.19px;width:34.04px;height:8.0px;line-height:8.0px;font-size:7.0px;text-align:right;color:#000;padding-right:1.49px;transform:scaleX(0.94);transform-origin:100% 50%;">1412</div>
<div class="t" style="left:107.16px;top:216.19px;width:40.64px;height:8.0px;line-height:8.0px;font-size:7.0px;text-align:right;color:#000;padding-right:1.49px;transform:scaleX(0.94);transform-origin:100% 50%;">5</div>
<div class="t" style="left:145.76px;top:216.19px;width:34.04px;height:8.0px;line-height:8.0px;font-size:7.0px;text-align:right;color:#000;padding-right:1.49px;transform:scaleX(0.94);transform-origin:100% 50%;">4</div>
<div class="t" style="left:177.73px;top:216.19px;width:34.57px;height:8.0px;line-height:8.0px;font-size:7.0px;text-align:right;color:#000;padding-right:1.49px;transform:scaleX(0.94);transform-origin:100% 50%;">1080</div>
<div class="t" style="left:210.19px;top:216.19px;width:35.11px;height:8.0px;line-height:8.0px;font-size:7.0px;text-align:right;color:#000;padding-right:1.49px;transform:scaleX(0.94);transform-origin:100% 50%;">118</div>
<div class="t" style="left:243.24px;top:216.19px;width:34.26px;height:8.0px;line-height:8.0px;font-size:7.0px;text-align:right;color:#000;padding-right:1.70px;transform:scaleX(0.94);transform-origin:100% 50%;">1.554028</div>
<div class="t" style="left:274.32px;top:216.19px;width:52.98px;height:8.0px;line-height:8.0px;font-size:7.0px;text-align:right;color:#000;padding-right:1.49px;transform:scaleX(0.94);transform-origin:100% 50%;">4</div>
<div class="t" style="left:325.23px;top:216.19px;width:34.47px;height:8.0px;line-height:8.0px;font-size:7.0px;text-align:right;color:#000;padding-right:1.49px;transform:scaleX(0.94);transform-origin:100% 50%;">85</div>
<div class="t" style="left:357.61px;top:216.19px;width:34.79px;height:8.0px;line-height:8.0px;font-size:7.0px;text-align:right;color:#000;padding-right:1.49px;transform:scaleX(0.94);transform-origin:100% 50%;">17462</div>
<div class="t" style="left:389.66px;top:216.19px;width:45.64px;height:8.0px;line-height:8.0px;font-size:7.0px;text-align:right;color:#000;padding-right:0.85px;transform:scaleX(0.94);transform-origin:100% 50%;">57808.23578</div>
<div class="t" style="left:432.48px;top:216.19px;width:47.02px;height:8.0px;line-height:8.0px;font-size:7.0px;text-align:right;color:#000;padding-right:2.02px;transform:scaleX(0.94);transform-origin:100% 50%;">(14,691.76)</div>
<div class="t" style="left:475.68px;top:216.19px;width:63.72px;height:8.0px;line-height:8.0px;font-size:7.0px;text-align:right;color:#000;padding-right:3.51px;transform:scaleX(0.94);transform-origin:100% 50%;">215,847,936</div>
<div class="t" style="left:12.30px;top:226.35px;width:35.89px;height:8.0px;line-height:8.0px;font-size:6.8px;text-align:left;color:#000;padding-left:1.78px;transform:scaleX(0.9);transform-origin:0 50%;letter-spacing:0.15px;">FAIR</div>
<div class="t" style="left:42.49px;top:226.29px;width:35.11px;height:8.0px;line-height:8.0px;font-size:7.0px;text-align:right;color:#000;padding-right:2.13px;transform:scaleX(0.94);transform-origin:100% 50%;">0.596525</div>
<div class="t" style="left:75.56px;top:226.29px;width:34.04px;height:8.0px;line-height:8.0px;font-size:7.0px;text-align:right;color:#000;padding-right:1.49px;transform:scaleX(0.94);transform-origin:100% 50%;">2194</div>
<div class="t" style="left:107.16px;top:226.29px;width:40.64px;height:8.0px;line-height:8.0px;font-size:7.0px;text-align:right;color:#000;padding-right:1.49px;transform:scaleX(0.94);transform-origin:100% 50%;">5</div>
<div class="t" style="left:145.76px;top:226.29px;width:34.04px;height:8.0px;line-height:8.0px;font-size:7.0px;text-align:right;color:#000;padding-right:1.49px;transform:scaleX(0.94);transform-origin:100% 50%;">4</div>
<div class="t" style="left:177.73px;top:226.29px;width:34.57px;height:8.0px;line-height:8.0px;font-size:7.0px;text-align:right;color:#000;padding-right:1.49px;transform:scaleX(0.94);transform-origin:100% 50%;">1402</div>
<div class="t" style="left:210.19px;top:226.29px;width:35.11px;height:8.0px;line-height:8.0px;font-size:7.0px;text-align:right;color:#000;padding-right:1.49px;transform:scaleX(0.94);transform-origin:100% 50%;">118</div>
<div class="t" style="left:243.24px;top:226.29px;width:34.26px;height:8.0px;line-height:8.0px;font-size:7.0px;text-align:right;color:#000;padding-right:1.70px;transform:scaleX(0.94);transform-origin:100% 50%;">1.549489</div>
<div class="t" style="left:274.32px;top:226.29px;width:52.98px;height:8.0px;line-height:8.0px;font-size:7.0px;text-align:right;color:#000;padding-right:1.49px;transform:scaleX(0.94);transform-origin:100% 50%;">4</div>
<div class="t" style="left:325.23px;top:226.29px;width:34.47px;height:8.0px;line-height:8.0px;font-size:7.0px;text-align:right;color:#000;padding-right:1.49px;transform:scaleX(0.94);transform-origin:100% 50%;">85</div>
<div class="t" style="left:357.61px;top:226.29px;width:34.79px;height:8.0px;line-height:8.0px;font-size:7.0px;text-align:right;color:#000;padding-right:1.49px;transform:scaleX(0.94);transform-origin:100% 50%;">22571</div>
<div class="t" style="left:389.66px;top:226.29px;width:45.64px;height:8.0px;line-height:8.0px;font-size:7.0px;text-align:right;color:#000;padding-right:0.85px;transform:scaleX(0.94);transform-origin:100% 50%;">110607.8308</div>
<div class="t" style="left:432.48px;top:226.29px;width:47.02px;height:8.0px;line-height:8.0px;font-size:7.0px;text-align:right;color:#000;padding-right:2.02px;transform:scaleX(0.94);transform-origin:100% 50%;">(64,392.17)</div>
<div class="t" style="left:475.68px;top:226.29px;width:63.72px;height:8.0px;line-height:8.0px;font-size:7.0px;text-align:right;color:#000;padding-right:3.51px;transform:scaleX(0.94);transform-origin:100% 50%;">4,146,351,449</div>
<div class="t" style="left:12.30px;top:237.25px;width:35.89px;height:8.0px;line-height:8.0px;font-size:6.8px;text-align:left;color:#000;padding-left:1.78px;transform:scaleX(0.9);transform-origin:0 50%;letter-spacing:0.15px;">AVERAGE</div>
<div class="t" style="left:42.49px;top:237.19px;width:35.11px;height:8.0px;line-height:8.0px;font-size:7.0px;text-align:right;color:#000;padding-right:2.13px;transform:scaleX(0.94);transform-origin:100% 50%;">0.607909</div>
<div class="t" style="left:75.56px;top:237.19px;width:34.04px;height:8.0px;line-height:8.0px;font-size:7.0px;text-align:right;color:#000;padding-right:1.49px;transform:scaleX(0.94);transform-origin:100% 50%;">1848</div>
<div class="t" style="left:107.16px;top:237.19px;width:40.64px;height:8.0px;line-height:8.0px;font-size:7.0px;text-align:right;color:#000;padding-right:1.49px;transform:scaleX(0.94);transform-origin:100% 50%;">4</div>
<div class="t" style="left:145.76px;top:237.19px;width:34.04px;height:8.0px;line-height:8.0px;font-size:7.0px;text-align:right;color:#000;padding-right:1.49px;transform:scaleX(0.94);transform-origin:100% 50%;">6</div>
<div class="t" style="left:177.73px;top:237.19px;width:34.57px;height:8.0px;line-height:8.0px;font-size:7.0px;text-align:right;color:#000;padding-right:1.49px;transform:scaleX(0.94);transform-origin:100% 50%;">1600</div>
<div class="t" style="left:210.19px;top:237.19px;width:35.11px;height:8.0px;line-height:8.0px;font-size:7.0px;text-align:right;color:#000;padding-right:1.49px;transform:scaleX(0.94);transform-origin:100% 50%;">118</div>
<div class="t" style="left:243.24px;top:237.19px;width:34.26px;height:8.0px;line-height:8.0px;font-size:7.0px;text-align:right;color:#000;padding-right:1.70px;transform:scaleX(0.94);transform-origin:100% 50%;">1.487243</div>
<div class="t" style="left:274.32px;top:237.19px;width:52.98px;height:8.0px;line-height:8.0px;font-size:7.0px;text-align:right;color:#000;padding-right:1.49px;transform:scaleX(0.94);transform-origin:100% 50%;">5</div>
<div class="t" style="left:325.23px;top:237.19px;width:34.47px;height:8.0px;line-height:8.0px;font-size:7.0px;text-align:right;color:#000;padding-right:1.49px;transform:scaleX(0.94);transform-origin:100% 50%;">85</div>
<div class="t" style="left:357.61px;top:237.19px;width:34.79px;height:8.0px;line-height:8.0px;font-size:7.0px;text-align:right;color:#000;padding-right:1.49px;transform:scaleX(0.94);transform-origin:100% 50%;">9764</div>
<div class="t" style="left:389.66px;top:237.19px;width:45.64px;height:8.0px;line-height:8.0px;font-size:7.0px;text-align:right;color:#000;padding-right:0.85px;transform:scaleX(0.94);transform-origin:100% 50%;">67005.70425</div>
<div class="t" style="left:432.48px;top:237.19px;width:47.02px;height:8.0px;line-height:8.0px;font-size:7.0px;text-align:right;color:#000;padding-right:2.02px;transform:scaleX(0.94);transform-origin:100% 50%;">(122,894.30)</div>
<div class="t" style="left:475.68px;top:237.19px;width:63.72px;height:8.0px;line-height:8.0px;font-size:7.0px;text-align:right;color:#000;padding-right:3.51px;transform:scaleX(0.94);transform-origin:100% 50%;">15,103,007,928</div>
<div class="t" style="left:12.30px;top:248.25px;width:35.89px;height:8.0px;line-height:8.0px;font-size:6.8px;text-align:left;color:#000;padding-left:1.78px;transform:scaleX(0.9);transform-origin:0 50%;letter-spacing:0.15px;">AVERAGE</div>
<div class="t" style="left:42.49px;top:248.19px;width:35.11px;height:8.0px;line-height:8.0px;font-size:7.0px;text-align:right;color:#000;padding-right:2.13px;transform:scaleX(0.94);transform-origin:100% 50%;">1.103333</div>
<div class="t" style="left:75.56px;top:248.19px;width:34.04px;height:8.0px;line-height:8.0px;font-size:7.0px;text-align:right;color:#000;padding-right:1.49px;transform:scaleX(0.94);transform-origin:100% 50%;">1557</div>
<div class="t" style="left:107.16px;top:248.19px;width:40.64px;height:8.0px;line-height:8.0px;font-size:7.0px;text-align:right;color:#000;padding-right:1.49px;transform:scaleX(0.94);transform-origin:100% 50%;">6</div>
<div class="t" style="left:145.76px;top:248.19px;width:34.04px;height:8.0px;line-height:8.0px;font-size:7.0px;text-align:right;color:#000;padding-right:1.49px;transform:scaleX(0.94);transform-origin:100% 50%;">5</div>
<div class="t" style="left:177.73px;top:248.19px;width:34.57px;height:8.0px;line-height:8.0px;font-size:7.0px;text-align:right;color:#000;padding-right:1.49px;transform:scaleX(0.94);transform-origin:100% 50%;">2500</div>
<div class="t" style="left:210.19px;top:248.19px;width:35.11px;height:8.0px;line-height:8.0px;font-size:7.0px;text-align:right;color:#000;padding-right:1.49px;transform:scaleX(0.94);transform-origin:100% 50%;">80</div>
<div class="t" style="left:243.24px;top:248.19px;width:34.26px;height:8.0px;line-height:8.0px;font-size:7.0px;text-align:right;color:#000;padding-right:1.70px;transform:scaleX(0.94);transform-origin:100% 50%;">1.274419</div>
<div class="t" style="left:274.32px;top:248.19px;width:52.98px;height:8.0px;line-height:8.0px;font-size:7.0px;text-align:right;color:#000;padding-right:1.49px;transform:scaleX(0.94);transform-origin:100% 50%;">5</div>
<div class="t" style="left:325.23px;top:248.19px;width:34.47px;height:8.0px;line-height:8.0px;font-size:7.0px;text-align:right;color:#000;padding-right:1.49px;transform:scaleX(0.94);transform-origin:100% 50%;">65</div>
<div class="t" style="left:357.61px;top:248.19px;width:34.79px;height:8.0px;line-height:8.0px;font-size:7.0px;text-align:right;color:#000;padding-right:1.49px;transform:scaleX(0.94);transform-origin:100% 50%;">21975</div>
<div class="t" style="left:389.66px;top:248.19px;width:45.64px;height:8.0px;line-height:8.0px;font-size:7.0px;text-align:right;color:#000;padding-right:0.85px;transform:scaleX(0.94);transform-origin:100% 50%;">163492.5883</div>
<div class="t" style="left:432.48px;top:248.19px;width:47.02px;height:8.0px;line-height:8.0px;font-size:7.0px;text-align:right;color:#000;padding-right:4.15px;transform:scaleX(0.94);transform-origin:100% 50%;">61,492.59</div>
<div class="t" style="left:475.68px;top:248.19px;width:63.72px;height:8.0px;line-height:8.0px;font-size:7.0px;text-align:right;color:#000;padding-right:3.51px;transform:scaleX(0.94);transform-origin:100% 50%;">3,781,338,420</div>
<div class="t" style="left:12.30px;top:258.55px;width:35.89px;height:8.0px;line-height:8.0px;font-size:6.8px;text-align:left;color:#000;padding-left:1.78px;transform:scaleX(0.9);transform-origin:0 50%;letter-spacing:0.15px;">AVERAGE</div>
<div class="t" style="left:42.49px;top:258.49px;width:35.11px;height:8.0px;line-height:8.0px;font-size:7.0px;text-align:right;color:#000;padding-right:2.13px;transform:scaleX(0.94);transform-origin:100% 50%;">1.540001</div>
<div class="t" style="left:75.56px;top:258.49px;width:34.04px;height:8.0px;line-height:8.0px;font-size:7.0px;text-align:right;color:#000;padding-right:1.49px;transform:scaleX(0.94);transform-origin:100% 50%;">1426</div>
<div class="t" style="left:107.16px;top:258.49px;width:40.64px;height:8.0px;line-height:8.0px;font-size:7.0px;text-align:right;color:#000;padding-right:1.49px;transform:scaleX(0.94);transform-origin:100% 50%;">4</div>
<div class="t" style="left:145.76px;top:258.49px;width:34.04px;height:8.0px;line-height:8.0px;font-size:7.0px;text-align:right;color:#000;padding-right:1.49px;transform:scaleX(0.94);transform-origin:100% 50%;">5</div>
<div class="t" style="left:177.73px;top:258.49px;width:34.57px;height:8.0px;line-height:8.0px;font-size:7.0px;text-align:right;color:#000;padding-right:1.49px;transform:scaleX(0.94);transform-origin:100% 50%;">2500</div>
<div class="t" style="left:210.19px;top:258.49px;width:35.11px;height:8.0px;line-height:8.0px;font-size:7.0px;text-align:right;color:#000;padding-right:1.49px;transform:scaleX(0.94);transform-origin:100% 50%;">118</div>
<div class="t" style="left:243.24px;top:258.49px;width:34.26px;height:8.0px;line-height:8.0px;font-size:7.0px;text-align:right;color:#000;padding-right:1.70px;transform:scaleX(0.94);transform-origin:100% 50%;">0.696896</div>
<div class="t" style="left:274.32px;top:258.49px;width:52.98px;height:8.0px;line-height:8.0px;font-size:7.0px;text-align:right;color:#000;padding-right:1.49px;transform:scaleX(0.94);transform-origin:100% 50%;">5</div>
<div class="t" style="left:325.23px;top:258.49px;width:34.47px;height:8.0px;line-height:8.0px;font-size:7.0px;text-align:right;color:#000;padding-right:1.49px;transform:scaleX(0.94);transform-origin:100% 50%;">77</div>
<div class="t" style="left:357.61px;top:258.49px;width:34.79px;height:8.0px;line-height:8.0px;font-size:7.0px;text-align:right;color:#000;padding-right:1.49px;transform:scaleX(0.94);transform-origin:100% 50%;">12075</div>
<div class="t" style="left:389.66px;top:258.49px;width:45.64px;height:8.0px;line-height:8.0px;font-size:7.0px;text-align:right;color:#000;padding-right:0.85px;transform:scaleX(0.94);transform-origin:100% 50%;">39136.5331</div>
<div class="t" style="left:432.48px;top:258.49px;width:47.02px;height:8.0px;line-height:8.0px;font-size:7.0px;text-align:right;color:#000;padding-right:2.02px;transform:scaleX(0.94);transform-origin:100% 50%;">(80,763.47)</div>
<div class="t" style="left:475.68px;top:258.49px;width:63.72px;height:8.0px;line-height:8.0px;font-size:7.0px;text-align:right;color:#000;padding-right:3.51px;transform:scaleX(0.94);transform-origin:100% 50%;">6,522,737,586</div>
<div class="t" style="left:12.30px;top:268.75px;width:35.89px;height:8.0px;line-height:8.0px;font-size:6.8px;text-align:left;color:#000;padding-left:1.78px;transform:scaleX(0.9);transform-origin:0 50%;letter-spacing:0.15px;">AVERAGE</div>
<div class="t" style="left:42.49px;top:268.69px;width:35.11px;height:8.0px;line-height:8.0px;font-size:7.0px;text-align:right;color:#000;padding-right:2.13px;transform:scaleX(0.94);transform-origin:100% 50%;">1.461466</div>
<div class="t" style="left:75.56px;top:268.69px;width:34.04px;height:8.0px;line-height:8.0px;font-size:7.0px;text-align:right;color:#000;padding-right:1.49px;transform:scaleX(0.94);transform-origin:100% 50%;">2000</div>
<div class="t" style="left:107.16px;top:268.69px;width:40.64px;height:8.0px;line-height:8.0px;font-size:7.0px;text-align:right;color:#000;padding-right:1.49px;transform:scaleX(0.94);transform-origin:100% 50%;">6</div>
<div class="t" style="left:145.76px;top:268.69px;width:34.04px;height:8.0px;line-height:8.0px;font-size:7.0px;text-align:right;color:#000;padding-right:1.49px;transform:scaleX(0.94);transform-origin:100% 50%;">5</div>
<div class="t" style="left:177.73px;top:268.69px;width:34.57px;height:8.0px;line-height:8.0px;font-size:7.0px;text-align:right;color:#000;padding-right:1.49px;transform:scaleX(0.94);transform-origin:100% 50%;">3135</div>
<div class="t" style="left:210.19px;top:268.69px;width:35.11px;height:8.0px;line-height:8.0px;font-size:7.0px;text-align:right;color:#000;padding-right:1.49px;transform:scaleX(0.94);transform-origin:100% 50%;">108</div>
<div class="t" style="left:243.24px;top:268.69px;width:34.26px;height:8.0px;line-height:8.0px;font-size:7.0px;text-align:right;color:#000;padding-right:1.70px;transform:scaleX(0.94);transform-origin:100% 50%;">0.652152</div>
<div class="t" style="left:274.32px;top:268.69px;width:52.98px;height:8.0px;line-height:8.0px;font-size:7.0px;text-align:right;color:#000;padding-right:1.49px;transform:scaleX(0.94);transform-origin:100% 50%;">5</div>
<div class="t" style="left:325.23px;top:268.69px;width:34.47px;height:8.0px;line-height:8.0px;font-size:7.0px;text-align:right;color:#000;padding-right:1.49px;transform:scaleX(0.94);transform-origin:100% 50%;">77</div>
<div class="t" style="left:357.61px;top:268.69px;width:34.79px;height:8.0px;line-height:8.0px;font-size:7.0px;text-align:right;color:#000;padding-right:1.49px;transform:scaleX(0.94);transform-origin:100% 50%;">6967</div>
<div class="t" style="left:389.66px;top:268.69px;width:45.64px;height:8.0px;line-height:8.0px;font-size:7.0px;text-align:right;color:#000;padding-right:0.85px;transform:scaleX(0.94);transform-origin:100% 50%;">165965.0981</div>
<div class="t" style="left:432.48px;top:268.69px;width:47.02px;height:8.0px;line-height:8.0px;font-size:7.0px;text-align:right;color:#000;padding-right:2.02px;transform:scaleX(0.94);transform-origin:100% 50%;">(89,034.90)</div>
<div class="t" style="left:475.68px;top:268.69px;width:63.72px;height:8.0px;line-height:8.0px;font-size:7.0px;text-align:right;color:#000;padding-right:3.51px;transform:scaleX(0.94);transform-origin:100% 50%;">7,927,213,757</div>
<div class="t" style="left:12.30px;top:279.45px;width:35.89px;height:8.0px;line-height:8.0px;font-size:6.8px;text-align:left;color:#000;padding-left:1.78px;transform:scaleX(0.9);transform-origin:0 50%;letter-spacing:0.15px;">GOOD</div>
<div class="t" style="left:42.49px;top:279.39px;width:35.11px;height:8.0px;line-height:8.0px;font-size:7.0px;text-align:right;color:#000;padding-right:2.13px;transform:scaleX(0.94);transform-origin:100% 50%;">1.257303</div>
<div class="t" style="left:75.56px;top:279.39px;width:34.04px;height:8.0px;line-height:8.0px;font-size:7.0px;text-align:right;color:#000;padding-right:1.49px;transform:scaleX(0.94);transform-origin:100% 50%;">2580</div>
<div class="t" style="left:107.16px;top:279.39px;width:40.64px;height:8.0px;line-height:8.0px;font-size:7.0px;text-align:right;color:#000;padding-right:1.49px;transform:scaleX(0.94);transform-origin:100% 50%;">7</div>
<div class="t" style="left:145.76px;top:279.39px;width:34.04px;height:8.0px;line-height:8.0px;font-size:7.0px;text-align:right;color:#000;padding-right:1.49px;transform:scaleX(0.94);transform-origin:100% 50%;">6</div>
<div class="t" style="left:177.73px;top:279.39px;width:34.57px;height:8.0px;line-height:8.0px;font-size:7.0px;text-align:right;color:#000;padding-right:1.49px;transform:scaleX(0.94);transform-origin:100% 50%;">4004</div>
<div class="t" style="left:210.19px;top:279.39px;width:35.11px;height:8.0px;line-height:8.0px;font-size:7.0px;text-align:right;color:#000;padding-right:1.49px;transform:scaleX(0.94);transform-origin:100% 50%;">98</div>
<div class="t" style="left:243.24px;top:279.39px;width:34.26px;height:8.0px;line-height:8.0px;font-size:7.0px;text-align:right;color:#000;padding-right:1.70px;transform:scaleX(0.94);transform-origin:100% 50%;">0.726723</div>
<div class="t" style="left:274.32px;top:279.39px;width:52.98px;height:8.0px;line-height:8.0px;font-size:7.0px;text-align:right;color:#000;padding-right:1.49px;transform:scaleX(0.94);transform-origin:100% 50%;">6</div>
<div class="t" style="left:325.23px;top:279.39px;width:34.47px;height:8.0px;line-height:8.0px;font-size:7.0px;text-align:right;color:#000;padding-right:1.49px;transform:scaleX(0.94);transform-origin:100% 50%;">71</div>
<div class="t" style="left:357.61px;top:279.39px;width:34.79px;height:8.0px;line-height:8.0px;font-size:7.0px;text-align:right;color:#000;padding-right:1.49px;transform:scaleX(0.94);transform-origin:100% 50%;">6945</div>
<div class="t" style="left:389.66px;top:279.39px;width:45.64px;height:8.0px;line-height:8.0px;font-size:7.0px;text-align:right;color:#000;padding-right:0.85px;transform:scaleX(0.94);transform-origin:100% 50%;">300595.9746</div>
<div class="t" style="left:432.48px;top:279.39px;width:47.02px;height:8.0px;line-height:8.0px;font-size:7.0px;text-align:right;color:#000;padding-right:4.15px;transform:scaleX(0.94);transform-origin:100% 50%;">28,595.97</div>
<div class="t" style="left:475.68px;top:279.39px;width:63.72px;height:8.0px;line-height:8.0px;font-size:7.0px;text-align:right;color:#000;padding-right:3.51px;transform:scaleX(0.94);transform-origin:100% 50%;">817,729,764</div>
<div class="t" style="left:12.30px;top:289.65px;width:35.89px;height:8.0px;line-height:8.0px;font-size:6.8px;text-align:left;color:#000;padding-left:1.78px;transform:scaleX(0.9);transform-origin:0 50%;letter-spacing:0.15px;">GOOD</div>
<div class="t" style="left:42.49px;top:289.59px;width:35.11px;height:8.0px;line-height:8.0px;font-size:7.0px;text-align:right;color:#000;padding-right:2.13px;transform:scaleX(0.94);transform-origin:100% 50%;">1.342283</div>
<div class="t" style="left:75.56px;top:289.59px;width:34.04px;height:8.0px;line-height:8.0px;font-size:7.0px;text-align:right;color:#000;padding-right:1.49px;transform:scaleX(0.94);transform-origin:100% 50%;">1320</div>
<div class="t" style="left:107.16px;top:289.59px;width:40.64px;height:8.0px;line-height:8.0px;font-size:7.0px;text-align:right;color:#000;padding-right:1.49px;transform:scaleX(0.94);transform-origin:100% 50%;">5</div>
<div class="t" style="left:145.76px;top:289.59px;width:34.04px;height:8.0px;line-height:8.0px;font-size:7.0px;text-align:right;color:#000;padding-right:1.49px;transform:scaleX(0.94);transform-origin:100% 50%;">5</div>
<div class="t" style="left:177.73px;top:289.59px;width:34.57px;height:8.0px;line-height:8.0px;font-size:7.0px;text-align:right;color:#000;padding-right:1.49px;transform:scaleX(0.94);transform-origin:100% 50%;">3476</div>
<div class="t" style="left:210.19px;top:289.59px;width:35.11px;height:8.0px;line-height:8.0px;font-size:7.0px;text-align:right;color:#000;padding-right:1.49px;transform:scaleX(0.94);transform-origin:100% 50%;">98</div>
<div class="t" style="left:243.24px;top:289.59px;width:34.26px;height:8.0px;line-height:8.0px;font-size:7.0px;text-align:right;color:#000;padding-right:1.70px;transform:scaleX(0.94);transform-origin:100% 50%;">0.806993</div>
<div class="t" style="left:274.32px;top:289.59px;width:52.98px;height:8.0px;line-height:8.0px;font-size:7.0px;text-align:right;color:#000;padding-right:1.49px;transform:scaleX(0.94);transform-origin:100% 50%;">6</div>
<div class="t" style="left:325.23px;top:289.59px;width:34.47px;height:8.0px;line-height:8.0px;font-size:7.0px;text-align:right;color:#000;padding-right:1.49px;transform:scaleX(0.94);transform-origin:100% 50%;">71</div>
<div class="t" style="left:357.61px;top:289.59px;width:34.79px;height:8.0px;line-height:8.0px;font-size:7.0px;text-align:right;color:#000;padding-right:1.49px;transform:scaleX(0.94);transform-origin:100% 50%;">33532</div>
<div class="t" style="left:389.66px;top:289.59px;width:45.64px;height:8.0px;line-height:8.0px;font-size:7.0px;text-align:right;color:#000;padding-right:0.85px;transform:scaleX(0.94);transform-origin:100% 50%;">127675.8334</div>
<div class="t" style="left:432.48px;top:289.59px;width:47.02px;height:8.0px;line-height:8.0px;font-size:7.0px;text-align:right;color:#000;padding-right:2.02px;transform:scaleX(0.94);transform-origin:100% 50%;">(37,224.17)</div>
<div class="t" style="left:475.68px;top:289.59px;width:63.72px;height:8.0px;line-height:8.0px;font-size:7.0px;text-align:right;color:#000;padding-right:3.51px;transform:scaleX(0.94);transform-origin:100% 50%;">1,385,638,577</div>
<div class="t" style="left:12.30px;top:299.55px;width:35.89px;height:8.0px;line-height:8.0px;font-size:6.8px;text-align:left;color:#000;padding-left:1.78px;transform:scaleX(0.9);transform-origin:0 50%;letter-spacing:0.15px;">GOOD</div>
<div class="t" style="left:42.49px;top:299.49px;width:35.11px;height:8.0px;line-height:8.0px;font-size:7.0px;text-align:right;color:#000;padding-right:2.13px;transform:scaleX(0.94);transform-origin:100% 50%;">1.533909</div>
<div class="t" style="left:75.56px;top:299.49px;width:34.04px;height:8.0px;line-height:8.0px;font-size:7.0px;text-align:right;color:#000;padding-right:1.49px;transform:scaleX(0.94);transform-origin:100% 50%;">864</div>
<div class="t" style="left:107.16px;top:299.49px;width:40.64px;height:8.0px;line-height:8.0px;font-size:7.0px;text-align:right;color:#000;padding-right:1.49px;transform:scaleX(0.94);transform-origin:100% 50%;">7</div>
<div class="t" style="left:145.76px;top:299.49px;width:34.04px;height:8.0px;line-height:8.0px;font-size:7.0px;text-align:right;color:#000;padding-right:1.49px;transform:scaleX(0.94);transform-origin:100% 50%;">6</div>
<div class="t" style="left:177.73px;top:299.49px;width:34.57px;height:8.0px;line-height:8.0px;font-size:7.0px;text-align:right;color:#000;padding-right:1.49px;transform:scaleX(0.94);transform-origin:100% 50%;">1689</div>
<div class="t" style="left:210.19px;top:299.49px;width:35.11px;height:8.0px;line-height:8.0px;font-size:7.0px;text-align:right;color:#000;padding-right:1.49px;transform:scaleX(0.94);transform-origin:100% 50%;">63</div>
<div class="t" style="left:243.24px;top:299.49px;width:34.26px;height:8.0px;line-height:8.0px;font-size:7.0px;text-align:right;color:#000;padding-right:1.70px;transform:scaleX(0.94);transform-origin:100% 50%;">1.014643</div>
<div class="t" style="left:274.32px;top:299.49px;width:52.98px;height:8.0px;line-height:8.0px;font-size:7.0px;text-align:right;color:#000;padding-right:1.49px;transform:scaleX(0.94);transform-origin:100% 50%;">6</div>
<div class="t" style="left:325.23px;top:299.49px;width:34.47px;height:8.0px;line-height:8.0px;font-size:7.0px;text-align:right;color:#000;padding-right:1.49px;transform:scaleX(0.94);transform-origin:100% 50%;">71</div>
<div class="t" style="left:357.61px;top:299.49px;width:34.79px;height:8.0px;line-height:8.0px;font-size:7.0px;text-align:right;color:#000;padding-right:1.49px;transform:scaleX(0.94);transform-origin:100% 50%;">10639</div>
<div class="t" style="left:389.66px;top:299.49px;width:45.64px;height:8.0px;line-height:8.0px;font-size:7.0px;text-align:right;color:#000;padding-right:0.85px;transform:scaleX(0.94);transform-origin:100% 50%;">156098.5407</div>
<div class="t" style="left:432.48px;top:299.49px;width:47.02px;height:8.0px;line-height:8.0px;font-size:7.0px;text-align:right;color:#000;padding-right:4.15px;transform:scaleX(0.94);transform-origin:100% 50%;">74,098.54</div>
<div class="t" style="left:475.68px;top:299.49px;width:63.72px;height:8.0px;line-height:8.0px;font-size:7.0px;text-align:right;color:#000;padding-right:3.51px;transform:scaleX(0.94);transform-origin:100% 50%;">5,490,593,738</div>
<div class="t" style="left:12.30px;top:309.55px;width:35.89px;height:8.0px;line-height:8.0px;font-size:6.8px;text-align:left;color:#000;padding-left:1.78px;transform:scaleX(0.9);transform-origin:0 50%;letter-spacing:0.15px;">AVERAGE</div>
<div class="t" style="left:42.49px;top:309.49px;width:35.11px;height:8.0px;line-height:8.0px;font-size:7.0px;text-align:right;color:#000;padding-right:2.13px;transform:scaleX(0.94);transform-origin:100% 50%;">1.230001</div>
<div class="t" style="left:75.56px;top:309.49px;width:34.04px;height:8.0px;line-height:8.0px;font-size:7.0px;text-align:right;color:#000;padding-right:1.49px;transform:scaleX(0.94);transform-origin:100% 50%;">832</div>
<div class="t" style="left:107.16px;top:309.49px;width:40.64px;height:8.0px;line-height:8.0px;font-size:7.0px;text-align:right;color:#000;padding-right:1.49px;transform:scaleX(0.94);transform-origin:100% 50%;">2</div>
<div class="t" style="left:145.76px;top:309.49px;width:34.04px;height:8.0px;line-height:8.0px;font-size:7.0px;text-align:right;color:#000;padding-right:1.49px;transform:scaleX(0.94);transform-origin:100% 50%;">5</div>
<div class="t" style="left:177.73px;top:309.49px;width:34.57px;height:8.0px;line-height:8.0px;font-size:7.0px;text-align:right;color:#000;padding-right:1.49px;transform:scaleX(0.94);transform-origin:100% 50%;">2841</div>
<div class="t" style="left:210.19px;top:309.49px;width:35.11px;height:8.0px;line-height:8.0px;font-size:7.0px;text-align:right;color:#000;padding-right:1.49px;transform:scaleX(0.94);transform-origin:100% 50%;">118</div>
<div class="t" style="left:243.24px;top:309.49px;width:34.26px;height:8.0px;line-height:8.0px;font-size:7.0px;text-align:right;color:#000;padding-right:1.70px;transform:scaleX(0.94);transform-origin:100% 50%;">0.978126</div>
<div class="t" style="left:274.32px;top:309.49px;width:52.98px;height:8.0px;line-height:8.0px;font-size:7.0px;text-align:right;color:#000;padding-right:1.49px;transform:scaleX(0.94);transform-origin:100% 50%;">5</div>
<div class="t" style="left:325.23px;top:309.49px;width:34.47px;height:8.0px;line-height:8.0px;font-size:7.0px;text-align:right;color:#000;padding-right:1.49px;transform:scaleX(0.94);transform-origin:100% 50%;">71</div>
<div class="t" style="left:357.61px;top:309.49px;width:34.79px;height:8.0px;line-height:8.0px;font-size:7.0px;text-align:right;color:#000;padding-right:1.49px;transform:scaleX(0.94);transform-origin:100% 50%;">7233</div>
<div class="t" style="left:389.66px;top:309.49px;width:45.64px;height:8.0px;line-height:8.0px;font-size:7.0px;text-align:right;color:#000;padding-right:0.85px;transform:scaleX(0.94);transform-origin:100% 50%;">-88470.7041</div>
<div class="t" style="left:432.48px;top:309.49px;width:47.02px;height:8.0px;line-height:8.0px;font-size:7.0px;text-align:right;color:#000;padding-right:2.02px;transform:scaleX(0.94);transform-origin:100% 50%;">(163,470.70)</div>
<div class="t" style="left:475.68px;top:309.49px;width:63.72px;height:8.0px;line-height:8.0px;font-size:7.0px;text-align:right;color:#000;padding-right:3.51px;transform:scaleX(0.94);transform-origin:100% 50%;">26,722,671,100</div>
<div class="t" style="left:12.30px;top:319.35px;width:35.89px;height:8.0px;line-height:8.0px;font-size:6.8px;text-align:left;color:#000;padding-left:1.78px;transform:scaleX(0.9);transform-origin:0 50%;letter-spacing:0.15px;">AVERAGE</div>
<div class="t" style="left:42.49px;top:319.29px;width:35.11px;height:8.0px;line-height:8.0px;font-size:7.0px;text-align:right;color:#000;padding-right:2.13px;transform:scaleX(0.94);transform-origin:100% 50%;">1.462279</div>
<div class="t" style="left:75.56px;top:319.29px;width:34.04px;height:8.0px;line-height:8.0px;font-size:7.0px;text-align:right;color:#000;padding-right:1.49px;transform:scaleX(0.94);transform-origin:100% 50%;">1098</div>
<div class="t" style="left:107.16px;top:319.29px;width:40.64px;height:8.0px;line-height:8.0px;font-size:7.0px;text-align:right;color:#000;padding-right:1.49px;transform:scaleX(0.94);transform-origin:100% 50%;">5</div>
<div class="t" style="left:145.76px;top:319.29px;width:34.04px;height:8.0px;line-height:8.0px;font-size:7.0px;text-align:right;color:#000;padding-right:1.49px;transform:scaleX(0.94);transform-origin:100% 50%;">5</div>
<div class="t" style="left:177.73px;top:319.29px;width:34.57px;height:8.0px;line-height:8.0px;font-size:7.0px;text-align:right;color:#000;padding-right:1.49px;transform:scaleX(0.94);transform-origin:100% 50%;">2250</div>
<div class="t" style="left:210.19px;top:319.29px;width:35.11px;height:8.0px;line-height:8.0px;font-size:7.0px;text-align:right;color:#000;padding-right:1.49px;transform:scaleX(0.94);transform-origin:100% 50%;">88</div>
<div class="t" style="left:243.24px;top:319.29px;width:34.26px;height:8.0px;line-height:8.0px;font-size:7.0px;text-align:right;color:#000;padding-right:1.70px;transform:scaleX(0.94);transform-origin:100% 50%;">1.091206</div>
<div class="t" style="left:274.32px;top:319.29px;width:52.98px;height:8.0px;line-height:8.0px;font-size:7.0px;text-align:right;color:#000;padding-right:1.49px;transform:scaleX(0.94);transform-origin:100% 50%;">5</div>
<div class="t" style="left:325.23px;top:319.29px;width:34.47px;height:8.0px;line-height:8.0px;font-size:7.0px;text-align:right;color:#000;padding-right:1.49px;transform:scaleX(0.94);transform-origin:100% 50%;">71</div>
<div class="t" style="left:357.61px;top:319.29px;width:34.79px;height:8.0px;line-height:8.0px;font-size:7.0px;text-align:right;color:#000;padding-right:1.49px;transform:scaleX(0.94);transform-origin:100% 50%;">15638</div>
<div class="t" style="left:389.66px;top:319.29px;width:45.64px;height:8.0px;line-height:8.0px;font-size:7.0px;text-align:right;color:#000;padding-right:0.85px;transform:scaleX(0.94);transform-origin:100% 50%;">60844.29418</div>
<div class="t" style="left:432.48px;top:319.29px;width:47.02px;height:8.0px;line-height:8.0px;font-size:7.0px;text-align:right;color:#000;padding-right:2.02px;transform:scaleX(0.94);transform-origin:100% 50%;">(79,155.71)</div>
<div class="t" style="left:475.68px;top:319.29px;width:63.72px;height:8.0px;line-height:8.0px;font-size:7.0px;text-align:right;color:#000;padding-right:3.51px;transform:scaleX(0.94);transform-origin:100% 50%;">6,265,625,764</div>
<div class="t" style="left:12.30px;top:329.25px;width:35.89px;height:8.0px;line-height:8.0px;font-size:6.8px;text-align:left;color:#000;padding-left:1.78px;transform:scaleX(0.9);transform-origin:0 50%;letter-spacing:0.15px;">AVERAGE</div>
<div class="t" style="left:42.49px;top:329.19px;width:35.11px;height:8.0px;line-height:8.0px;font-size:7.0px;text-align:right;color:#000;padding-right:2.13px;transform:scaleX(0.94);transform-origin:100% 50%;">1.320919</div>
<div class="t" style="left:75.56px;top:329.19px;width:34.04px;height:8.0px;line-height:8.0px;font-size:7.0px;text-align:right;color:#000;padding-right:1.49px;transform:scaleX(0.94);transform-origin:100% 50%;">1382</div>
<div class="t" style="left:107.16px;top:329.19px;width:40.64px;height:8.0px;line-height:8.0px;font-size:7.0px;text-align:right;color:#000;padding-right:1.49px;transform:scaleX(0.94);transform-origin:100% 50%;">6</div>
<div class="t" style="left:145.76px;top:329.19px;width:34.04px;height:8.0px;line-height:8.0px;font-size:7.0px;text-align:right;color:#000;padding-right:1.49px;transform:scaleX(0.94);transform-origin:100% 50%;">5</div>
<div class="t" style="left:177.73px;top:329.19px;width:34.57px;height:8.0px;line-height:8.0px;font-size:7.0px;text-align:right;color:#000;padding-right:1.49px;transform:scaleX(0.94);transform-origin:100% 50%;">2530</div>
<div class="t" style="left:210.19px;top:329.19px;width:35.11px;height:8.0px;line-height:8.0px;font-size:7.0px;text-align:right;color:#000;padding-right:1.49px;transform:scaleX(0.94);transform-origin:100% 50%;">68</div>
<div class="t" style="left:243.24px;top:329.19px;width:34.26px;height:8.0px;line-height:8.0px;font-size:7.0px;text-align:right;color:#000;padding-right:1.70px;transform:scaleX(0.94);transform-origin:100% 50%;">1.181545</div>
<div class="t" style="left:274.32px;top:329.19px;width:52.98px;height:8.0px;line-height:8.0px;font-size:7.0px;text-align:right;color:#000;padding-right:1.49px;transform:scaleX(0.94);transform-origin:100% 50%;">5</div>
<div class="t" style="left:325.23px;top:329.19px;width:34.47px;height:8.0px;line-height:8.0px;font-size:7.0px;text-align:right;color:#000;padding-right:1.49px;transform:scaleX(0.94);transform-origin:100% 50%;">45</div>
<div class="t" style="left:357.61px;top:329.19px;width:34.79px;height:8.0px;line-height:8.0px;font-size:7.0px;text-align:right;color:#000;padding-right:1.49px;transform:scaleX(0.94);transform-origin:100% 50%;">32974</div>
<div class="t" style="left:389.66px;top:329.19px;width:45.64px;height:8.0px;line-height:8.0px;font-size:7.0px;text-align:right;color:#000;padding-right:0.85px;transform:scaleX(0.94);transform-origin:100% 50%;">124034.956</div>
<div class="t" style="left:432.48px;top:329.19px;width:47.02px;height:8.0px;line-height:8.0px;font-size:7.0px;text-align:right;color:#000;padding-right:4.15px;transform:scaleX(0.94);transform-origin:100% 50%;">64,034.96</div>
<div class="t" style="left:475.68px;top:329.19px;width:63.72px;height:8.0px;line-height:8.0px;font-size:7.0px;text-align:right;color:#000;padding-right:3.51px;transform:scaleX(0.94);transform-origin:100% 50%;">4,100,475,595</div>
<div class="t" style="left:12.30px;top:339.45px;width:35.89px;height:8.0px;line-height:8.0px;font-size:6.8px;text-align:left;color:#000;padding-left:1.78px;transform:scaleX(0.9);transform-origin:0 50%;letter-spacing:0.15px;">AVERAGE</div>
<div class="t" style="left:42.49px;top:339.39px;width:35.11px;height:8.0px;line-height:8.0px;font-size:7.0px;text-align:right;color:#000;padding-right:2.13px;transform:scaleX(0.94);transform-origin:100% 50%;">1.104786</div>
<div class="t" style="left:75.56px;top:339.39px;width:34.04px;height:8.0px;line-height:8.0px;font-size:7.0px;text-align:right;color:#000;padding-right:1.49px;transform:scaleX(0.94);transform-origin:100% 50%;">1239</div>
<div class="t" style="left:107.16px;top:339.39px;width:40.64px;height:8.0px;line-height:8.0px;font-size:7.0px;text-align:right;color:#000;padding-right:1.49px;transform:scaleX(0.94);transform-origin:100% 50%;">6</div>
<div class="t" style="left:145.76px;top:339.39px;width:34.04px;height:8.0px;line-height:8.0px;font-size:7.0px;text-align:right;color:#000;padding-right:1.49px;transform:scaleX(0.94);transform-origin:100% 50%;">5</div>
<div class="t" style="left:177.73px;top:339.39px;width:34.57px;height:8.0px;line-height:8.0px;font-size:7.0px;text-align:right;color:#000;padding-right:1.49px;transform:scaleX(0.94);transform-origin:100% 50%;">2500</div>
<div class="t" style="left:210.19px;top:339.39px;width:35.11px;height:8.0px;line-height:8.0px;font-size:7.0px;text-align:right;color:#000;padding-right:1.49px;transform:scaleX(0.94);transform-origin:100% 50%;">88</div>
<div class="t" style="left:243.24px;top:339.39px;width:34.26px;height:8.0px;line-height:8.0px;font-size:7.0px;text-align:right;color:#000;padding-right:1.70px;transform:scaleX(0.94);transform-origin:100% 50%;">1.16533</div>
<div class="t" style="left:274.32px;top:339.39px;width:52.98px;height:8.0px;line-height:8.0px;font-size:7.0px;text-align:right;color:#000;padding-right:1.49px;transform:scaleX(0.94);transform-origin:100% 50%;">5</div>
<div class="t" style="left:325.23px;top:339.39px;width:34.47px;height:8.0px;line-height:8.0px;font-size:7.0px;text-align:right;color:#000;padding-right:1.49px;transform:scaleX(0.94);transform-origin:100% 50%;">65</div>
<div class="t" style="left:357.61px;top:339.39px;width:34.79px;height:8.0px;line-height:8.0px;font-size:7.0px;text-align:right;color:#000;padding-right:1.49px;transform:scaleX(0.94);transform-origin:100% 50%;">10495</div>
<div class="t" style="left:389.66px;top:339.39px;width:45.64px;height:8.0px;line-height:8.0px;font-size:7.0px;text-align:right;color:#000;padding-right:0.85px;transform:scaleX(0.94);transform-origin:100% 50%;">114396.5637</div>
<div class="t" style="left:432.48px;top:339.39px;width:47.02px;height:8.0px;line-height:8.0px;font-size:7.0px;text-align:right;color:#000;padding-right:4.15px;transform:scaleX(0.94);transform-origin:100% 50%;">49,396.56</div>
<div class="t" style="left:475.68px;top:339.39px;width:63.72px;height:8.0px;line-height:8.0px;font-size:7.0px;text-align:right;color:#000;padding-right:3.51px;transform:scaleX(0.94);transform-origin:100% 50%;">2,440,020,503</div>
<div class="t" style="left:12.30px;top:349.85px;width:35.89px;height:8.0px;line-height:8.0px;font-size:6.8px;text-align:left;color:#000;padding-left:1.78px;transform:scaleX(0.9);transform-origin:0 50%;letter-spacing:0.15px;">FAIR</div>
<div class="t" style="left:42.49px;top:349.79px;width:35.11px;height:8.0px;line-height:8.0px;font-size:7.0px;text-align:right;color:#000;padding-right:2.13px;transform:scaleX(0.94);transform-origin:100% 50%;">1.222001</div>
<div class="t" style="left:75.56px;top:349.79px;width:34.04px;height:8.0px;line-height:8.0px;font-size:7.0px;text-align:right;color:#000;padding-right:1.49px;transform:scaleX(0.94);transform-origin:100% 50%;">1212</div>
<div class="t" style="left:107.16px;top:349.79px;width:40.64px;height:8.0px;line-height:8.0px;font-size:7.0px;text-align:right;color:#000;padding-right:1.49px;transform:scaleX(0.94);transform-origin:100% 50%;">4</div>
<div class="t" style="left:145.76px;top:349.79px;width:34.04px;height:8.0px;line-height:8.0px;font-size:7.0px;text-align:right;color:#000;padding-right:1.49px;transform:scaleX(0.94);transform-origin:100% 50%;">4</div>
<div class="t" style="left:177.73px;top:349.79px;width:34.57px;height:8.0px;line-height:8.0px;font-size:7.0px;text-align:right;color:#000;padding-right:1.49px;transform:scaleX(0.94);transform-origin:100% 50%;">2500</div>
<div class="t" style="left:210.19px;top:349.79px;width:35.11px;height:8.0px;line-height:8.0px;font-size:7.0px;text-align:right;color:#000;padding-right:1.49px;transform:scaleX(0.94);transform-origin:100% 50%;">108</div>
<div class="t" style="left:243.24px;top:349.79px;width:34.26px;height:8.0px;line-height:8.0px;font-size:7.0px;text-align:right;color:#000;padding-right:1.70px;transform:scaleX(0.94);transform-origin:100% 50%;">1.219397</div>
<div class="t" style="left:274.32px;top:349.79px;width:52.98px;height:8.0px;line-height:8.0px;font-size:7.0px;text-align:right;color:#000;padding-right:1.49px;transform:scaleX(0.94);transform-origin:100% 50%;">4</div>
<div class="t" style="left:325.23px;top:349.79px;width:34.47px;height:8.0px;line-height:8.0px;font-size:7.0px;text-align:right;color:#000;padding-right:1.49px;transform:scaleX(0.94);transform-origin:100% 50%;">65</div>
<div class="t" style="left:357.61px;top:349.79px;width:34.79px;height:8.0px;line-height:8.0px;font-size:7.0px;text-align:right;color:#000;padding-right:1.49px;transform:scaleX(0.94);transform-origin:100% 50%;">12288</div>
<div class="t" style="left:389.66px;top:349.79px;width:45.64px;height:8.0px;line-height:8.0px;font-size:7.0px;text-align:right;color:#000;padding-right:0.85px;transform:scaleX(0.94);transform-origin:100% 50%;">1256.509639</div>
<div class="t" style="left:432.48px;top:349.79px;width:47.02px;height:8.0px;line-height:8.0px;font-size:7.0px;text-align:right;color:#000;padding-right:2.02px;transform:scaleX(0.94);transform-origin:100% 50%;">(30,743.49)</div>
<div class="t" style="left:475.68px;top:349.79px;width:63.72px;height:8.0px;line-height:8.0px;font-size:7.0px;text-align:right;color:#000;padding-right:3.51px;transform:scaleX(0.94);transform-origin:100% 50%;">945,162,200</div>
<div class="t" style="left:12.30px;top:360.25px;width:35.89px;height:8.0px;line-height:8.0px;font-size:6.8px;text-align:left;color:#000;padding-left:1.78px;transform:scaleX(0.9);transform-origin:0 50%;letter-spacing:0.15px;">FAIR</div>
<div class="t" style="left:42.49px;top:360.19px;width:35.11px;height:8.0px;line-height:8.0px;font-size:7.0px;text-align:right;color:#000;padding-right:2.13px;transform:scaleX(0.94);transform-origin:100% 50%;">1.650615</div>
<div class="t" style="left:75.56px;top:360.19px;width:34.04px;height:8.0px;line-height:8.0px;font-size:7.0px;text-align:right;color:#000;padding-right:1.49px;transform:scaleX(0.94);transform-origin:100% 50%;">1912</div>
<div class="t" style="left:107.16px;top:360.19px;width:40.64px;height:8.0px;line-height:8.0px;font-size:7.0px;text-align:right;color:#000;padding-right:1.49px;transform:scaleX(0.94);transform-origin:100% 50%;">5</div>
<div class="t" style="left:145.76px;top:360.19px;width:34.04px;height:8.0px;line-height:8.0px;font-size:7.0px;text-align:right;color:#000;padding-right:1.49px;transform:scaleX(0.94);transform-origin:100% 50%;">4</div>
<div class="t" style="left:177.73px;top:360.19px;width:34.57px;height:8.0px;line-height:8.0px;font-size:7.0px;text-align:right;color:#000;padding-right:1.49px;transform:scaleX(0.94);transform-origin:100% 50%;">15109</div>
<div class="t" style="left:210.19px;top:360.19px;width:35.11px;height:8.0px;line-height:8.0px;font-size:7.0px;text-align:right;color:#000;padding-right:1.49px;transform:scaleX(0.94);transform-origin:100% 50%;">118</div>
<div class="t" style="left:243.24px;top:360.19px;width:34.26px;height:8.0px;line-height:8.0px;font-size:7.0px;text-align:right;color:#000;padding-right:1.70px;transform:scaleX(0.94);transform-origin:100% 50%;">1.002215</div>
<div class="t" style="left:274.32px;top:360.19px;width:52.98px;height:8.0px;line-height:8.0px;font-size:7.0px;text-align:right;color:#000;padding-right:1.49px;transform:scaleX(0.94);transform-origin:100% 50%;">4</div>
<div class="t" style="left:325.23px;top:360.19px;width:34.47px;height:8.0px;line-height:8.0px;font-size:7.0px;text-align:right;color:#000;padding-right:1.49px;transform:scaleX(0.94);transform-origin:100% 50%;">40</div>
<div class="t" style="left:357.61px;top:360.19px;width:34.79px;height:8.0px;line-height:8.0px;font-size:7.0px;text-align:right;color:#000;padding-right:1.49px;transform:scaleX(0.94);transform-origin:100% 50%;">27831</div>
<div class="t" style="left:389.66px;top:360.19px;width:45.64px;height:8.0px;line-height:8.0px;font-size:7.0px;text-align:right;color:#000;padding-right:0.85px;transform:scaleX(0.94);transform-origin:100% 50%;">99596.83788</div>
<div class="t" style="left:432.48px;top:360.19px;width:47.02px;height:8.0px;line-height:8.0px;font-size:7.0px;text-align:right;color:#000;padding-right:2.02px;transform:scaleX(0.94);transform-origin:100% 50%;">(403.16)</div>
<div class="t" style="left:475.68px;top:360.19px;width:63.72px;height:8.0px;line-height:8.0px;font-size:7.0px;text-align:right;color:#000;padding-right:3.51px;transform:scaleX(0.94);transform-origin:100% 50%;">162,540</div>
<div class="t" style="left:12.30px;top:370.35px;width:35.89px;height:8.0px;line-height:8.0px;font-size:6.8px;text-align:left;color:#000;padding-left:1.78px;transform:scaleX(0.9);transform-origin:0 50%;letter-spacing:0.15px;">AVERAGE</div>
<div class="t" style="left:42.49px;top:370.29px;width:35.11px;height:8.0px;line-height:8.0px;font-size:7.0px;text-align:right;color:#000;padding-right:2.13px;transform:scaleX(0.94);transform-origin:100% 50%;">1.755929</div>
<div class="t" style="left:75.56px;top:370.29px;width:34.04px;height:8.0px;line-height:8.0px;font-size:7.0px;text-align:right;color:#000;padding-right:1.49px;transform:scaleX(0.94);transform-origin:100% 50%;">1854</div>
<div class="t" style="left:107.16px;top:370.29px;width:40.64px;height:8.0px;line-height:8.0px;font-size:7.0px;text-align:right;color:#000;padding-right:1.49px;transform:scaleX(0.94);transform-origin:100% 50%;">5</div>
<div class="t" style="left:145.76px;top:370.29px;width:34.04px;height:8.0px;line-height:8.0px;font-size:7.0px;text-align:right;color:#000;padding-right:1.49px;transform:scaleX(0.94);transform-origin:100% 50%;">5</div>
<div class="t" style="left:177.73px;top:370.29px;width:34.57px;height:8.0px;line-height:8.0px;font-size:7.0px;text-align:right;color:#000;padding-right:1.49px;transform:scaleX(0.94);transform-origin:100% 50%;">6524</div>
<div class="t" style="left:210.19px;top:370.29px;width:35.11px;height:8.0px;line-height:8.0px;font-size:7.0px;text-align:right;color:#000;padding-right:1.49px;transform:scaleX(0.94);transform-origin:100% 50%;">118</div>
<div class="t" style="left:243.24px;top:370.29px;width:34.26px;height:8.0px;line-height:8.0px;font-size:7.0px;text-align:right;color:#000;padding-right:1.70px;transform:scaleX(0.94);transform-origin:100% 50%;">0.963492</div>
<div class="t" style="left:274.32px;top:370.29px;width:52.98px;height:8.0px;line-height:8.0px;font-size:7.0px;text-align:right;color:#000;padding-right:1.49px;transform:scaleX(0.94);transform-origin:100% 50%;">5</div>
<div class="t" style="left:325.23px;top:370.29px;width:34.47px;height:8.0px;line-height:8.0px;font-size:7.0px;text-align:right;color:#000;padding-right:1.49px;transform:scaleX(0.94);transform-origin:100% 50%;">40</div>
<div class="t" style="left:357.61px;top:370.29px;width:34.79px;height:8.0px;line-height:8.0px;font-size:7.0px;text-align:right;color:#000;padding-right:1.49px;transform:scaleX(0.94);transform-origin:100% 50%;">22935</div>
<div class="t" style="left:389.66px;top:370.29px;width:45.64px;height:8.0px;line-height:8.0px;font-size:7.0px;text-align:right;color:#000;padding-right:0.85px;transform:scaleX(0.94);transform-origin:100% 50%;">114190.1739</div>
<div class="t" style="left:432.48px;top:370.29px;width:47.02px;height:8.0px;line-height:8.0px;font-size:7.0px;text-align:right;color:#000;padding-right:4.15px;transform:scaleX(0.94);transform-origin:100% 50%;">31,190.17</div>
<div class="t" style="left:475.68px;top:370.29px;width:63.72px;height:8.0px;line-height:8.0px;font-size:7.0px;text-align:right;color:#000;padding-right:3.51px;transform:scaleX(0.94);transform-origin:100% 50%;">972,826,948</div>
<div class="t" style="left:12.30px;top:380.35px;width:35.89px;height:8.0px;line-height:8.0px;font-size:6.8px;text-align:left;color:#000;padding-left:1.78px;transform:scaleX(0.9);transform-origin:0 50%;letter-spacing:0.15px;">AVERAGE</div>
<div class="t" style="left:42.49px;top:380.29px;width:35.11px;height:8.0px;line-height:8.0px;font-size:7.0px;text-align:right;color:#000;padding-right:2.13px;transform:scaleX(0.94);transform-origin:100% 50%;">1.66937</div>
<div class="t" style="left:75.56px;top:380.29px;width:34.04px;height:8.0px;line-height:8.0px;font-size:7.0px;text-align:right;color:#000;padding-right:1.49px;transform:scaleX(0.94);transform-origin:100% 50%;">2359</div>
<div class="t" style="left:107.16px;top:380.29px;width:40.64px;height:8.0px;line-height:8.0px;font-size:7.0px;text-align:right;color:#000;padding-right:1.49px;transform:scaleX(0.94);transform-origin:100% 50%;">10</div>
<div class="t" style="left:145.76px;top:380.29px;width:34.04px;height:8.0px;line-height:8.0px;font-size:7.0px;text-align:right;color:#000;padding-right:1.49px;transform:scaleX(0.94);transform-origin:100% 50%;">7</div>
<div class="t" style="left:177.73px;top:380.29px;width:34.57px;height:8.0px;line-height:8.0px;font-size:7.0px;text-align:right;color:#000;padding-right:1.49px;transform:scaleX(0.94);transform-origin:100% 50%;">4500</div>
<div class="t" style="left:210.19px;top:380.29px;width:35.11px;height:8.0px;line-height:8.0px;font-size:7.0px;text-align:right;color:#000;padding-right:1.49px;transform:scaleX(0.94);transform-origin:100% 50%;">10</div>
<div class="t" style="left:243.24px;top:380.29px;width:34.26px;height:8.0px;line-height:8.0px;font-size:7.0px;text-align:right;color:#000;padding-right:1.70px;transform:scaleX(0.94);transform-origin:100% 50%;">0.805351</div>
<div class="t" style="left:274.32px;top:380.29px;width:52.98px;height:8.0px;line-height:8.0px;font-size:7.0px;text-align:right;color:#000;padding-right:1.49px;transform:scaleX(0.94);transform-origin:100% 50%;">5</div>
<div class="t" style="left:325.23px;top:380.29px;width:34.47px;height:8.0px;line-height:8.0px;font-size:7.0px;text-align:right;color:#000;padding-right:1.49px;transform:scaleX(0.94);transform-origin:100% 50%;">40</div>
<div class="t" style="left:357.61px;top:380.29px;width:34.79px;height:8.0px;line-height:8.0px;font-size:7.0px;text-align:right;color:#000;padding-right:1.49px;transform:scaleX(0.94);transform-origin:100% 50%;">10799</div>
<div class="t" style="left:389.66px;top:380.29px;width:45.64px;height:8.0px;line-height:8.0px;font-size:7.0px;text-align:right;color:#000;padding-right:0.85px;transform:scaleX(0.94);transform-origin:100% 50%;">394295.0423</div>
<div class="t" style="left:432.48px;top:380.29px;width:47.02px;height:8.0px;line-height:8.0px;font-size:7.0px;text-align:right;color:#000;padding-right:2.02px;transform:scaleX(0.94);transform-origin:100% 50%;">(11,704.96)</div>
<div class="t" style="left:475.68px;top:380.29px;width:63.72px;height:8.0px;line-height:8.0px;font-size:7.0px;text-align:right;color:#000;padding-right:3.51px;transform:scaleX(0.94);transform-origin:100% 50%;">137,006,035</div>
<div class="t" style="left:12.30px;top:390.45px;width:35.89px;height:8.0px;line-height:8.0px;font-size:6.8px;text-align:left;color:#000;padding-left:1.78px;transform:scaleX(0.9);transform-origin:0 50%;letter-spacing:0.15px;">AVERAGE</div>
<div class="t" style="left:42.49px;top:390.39px;width:35.11px;height:8.0px;line-height:8.0px;font-size:7.0px;text-align:right;color:#000;padding-right:2.13px;transform:scaleX(0.94);transform-origin:100% 50%;">1.641275</div>
<div class="t" style="left:75.56px;top:390.39px;width:34.04px;height:8.0px;line-height:8.0px;font-size:7.0px;text-align:right;color:#000;padding-right:1.49px;transform:scaleX(0.94);transform-origin:100% 50%;">1680</div>
<div class="t" style="left:107.16px;top:390.39px;width:40.64px;height:8.0px;line-height:8.0px;font-size:7.0px;text-align:right;color:#000;padding-right:1.49px;transform:scaleX(0.94);transform-origin:100% 50%;">6</div>
<div class="t" style="left:145.76px;top:390.39px;width:34.04px;height:8.0px;line-height:8.0px;font-size:7.0px;text-align:right;color:#000;padding-right:1.49px;transform:scaleX(0.94);transform-origin:100% 50%;">5</div>
<div class="t" style="left:177.73px;top:390.39px;width:34.57px;height:8.0px;line-height:8.0px;font-size:7.0px;text-align:right;color:#000;padding-right:1.49px;transform:scaleX(0.94);transform-origin:100% 50%;">2342</div>
<div class="t" style="left:210.19px;top:390.39px;width:35.11px;height:8.0px;line-height:8.0px;font-size:7.0px;text-align:right;color:#000;padding-right:1.49px;transform:scaleX(0.94);transform-origin:100% 50%;">81</div>
<div class="t" style="left:243.24px;top:390.39px;width:34.26px;height:8.0px;line-height:8.0px;font-size:7.0px;text-align:right;color:#000;padding-right:1.70px;transform:scaleX(0.94);transform-origin:100% 50%;">0.66927</div>
<div class="t" style="left:274.32px;top:390.39px;width:52.98px;height:8.0px;line-height:8.0px;font-size:7.0px;text-align:right;color:#000;padding-right:1.49px;transform:scaleX(0.94);transform-origin:100% 50%;">5</div>
<div class="t" style="left:325.23px;top:390.39px;width:34.47px;height:8.0px;line-height:8.0px;font-size:7.0px;text-align:right;color:#000;padding-right:1.49px;transform:scaleX(0.94);transform-origin:100% 50%;">77</div>
<div class="t" style="left:357.61px;top:390.39px;width:34.79px;height:8.0px;line-height:8.0px;font-size:7.0px;text-align:right;color:#000;padding-right:1.49px;transform:scaleX(0.94);transform-origin:100% 50%;">37103</div>
<div class="t" style="left:389.66px;top:390.39px;width:45.64px;height:8.0px;line-height:8.0px;font-size:7.0px;text-align:right;color:#000;padding-right:0.85px;transform:scaleX(0.94);transform-origin:100% 50%;">143975.0418</div>
<div class="t" style="left:432.48px;top:390.39px;width:47.02px;height:8.0px;line-height:8.0px;font-size:7.0px;text-align:right;color:#000;padding-right:4.15px;transform:scaleX(0.94);transform-origin:100% 50%;">62,575.04</div>
<div class="t" style="left:475.68px;top:390.39px;width:63.72px;height:8.0px;line-height:8.0px;font-size:7.0px;text-align:right;color:#000;padding-right:3.51px;transform:scaleX(0.94);transform-origin:100% 50%;">3,915,635,856</div>
<div class="t" style="left:12.30px;top:400.35px;width:35.89px;height:8.0px;line-height:8.0px;font-size:6.8px;text-align:left;color:#000;padding-left:1.78px;transform:scaleX(0.9);transform-origin:0 50%;letter-spacing:0.15px;">AVERAGE</div>
<div class="t" style="left:42.49px;top:400.29px;width:35.11px;height:8.0px;line-height:8.0px;font-size:7.0px;text-align:right;color:#000;padding-right:2.13px;transform:scaleX(0.94);transform-origin:100% 50%;">1.630725</div>
<div class="t" style="left:75.56px;top:400.29px;width:34.04px;height:8.0px;line-height:8.0px;font-size:7.0px;text-align:right;color:#000;padding-right:1.49px;transform:scaleX(0.94);transform-origin:100% 50%;">1408</div>
<div class="t" style="left:107.16px;top:400.29px;width:40.64px;height:8.0px;line-height:8.0px;font-size:7.0px;text-align:right;color:#000;padding-right:1.49px;transform:scaleX(0.94);transform-origin:100% 50%;">6</div>
<div class="t" style="left:145.76px;top:400.29px;width:34.04px;height:8.0px;line-height:8.0px;font-size:7.0px;text-align:right;color:#000;padding-right:1.49px;transform:scaleX(0.94);transform-origin:100% 50%;">5</div>
<div class="t" style="left:177.73px;top:400.29px;width:34.57px;height:8.0px;line-height:8.0px;font-size:7.0px;text-align:right;color:#000;padding-right:1.49px;transform:scaleX(0.94);transform-origin:100% 50%;">2880</div>
<div class="t" style="left:210.19px;top:400.29px;width:35.11px;height:8.0px;line-height:8.0px;font-size:7.0px;text-align:right;color:#000;padding-right:1.49px;transform:scaleX(0.94);transform-origin:100% 50%;">93</div>
<div class="t" style="left:243.24px;top:400.29px;width:34.26px;height:8.0px;line-height:8.0px;font-size:7.0px;text-align:right;color:#000;padding-right:1.70px;transform:scaleX(0.94);transform-origin:100% 50%;">0.623814</div>
<div class="t" style="left:274.32px;top:400.29px;width:52.98px;height:8.0px;line-height:8.0px;font-size:7.0px;text-align:right;color:#000;padding-right:1.49px;transform:scaleX(0.94);transform-origin:100% 50%;">5</div>
<div class="t" style="left:325.23px;top:400.29px;width:34.47px;height:8.0px;line-height:8.0px;font-size:7.0px;text-align:right;color:#000;padding-right:1.49px;transform:scaleX(0.94);transform-origin:100% 50%;">77</div>
<div class="t" style="left:357.61px;top:400.29px;width:34.79px;height:8.0px;line-height:8.0px;font-size:7.0px;text-align:right;color:#000;padding-right:1.49px;transform:scaleX(0.94);transform-origin:100% 50%;">18546</div>
<div class="t" style="left:389.66px;top:400.29px;width:45.64px;height:8.0px;line-height:8.0px;font-size:7.0px;text-align:right;color:#000;padding-right:0.85px;transform:scaleX(0.94);transform-origin:100% 50%;">153688.6709</div>
<div class="t" style="left:432.48px;top:400.29px;width:47.02px;height:8.0px;line-height:8.0px;font-size:7.0px;text-align:right;color:#000;padding-right:2.02px;transform:scaleX(0.94);transform-origin:100% 50%;">(81,311.33)</div>
<div class="t" style="left:475.68px;top:400.29px;width:63.72px;height:8.0px;line-height:8.0px;font-size:7.0px;text-align:right;color:#000;padding-right:3.51px;transform:scaleX(0.94);transform-origin:100% 50%;">6,611,532,244</div>
<div class="t" style="left:12.30px;top:411.15px;width:35.89px;height:8.0px;line-height:8.0px;font-size:6.8px;text-align:left;color:#000;padding-left:1.78px;transform:scaleX(0.9);transform-origin:0 50%;letter-spacing:0.15px;">AVERAGE</div>
<div class="t" style="left:42.49px;top:411.09px;width:35.11px;height:8.0px;line-height:8.0px;font-size:7.0px;text-align:right;color:#000;padding-right:2.13px;transform:scaleX(0.94);transform-origin:100% 50%;">1.679304</div>
<div class="t" style="left:75.56px;top:411.09px;width:34.04px;height:8.0px;line-height:8.0px;font-size:7.0px;text-align:right;color:#000;padding-right:1.49px;transform:scaleX(0.94);transform-origin:100% 50%;">1376</div>
<div class="t" style="left:107.16px;top:411.09px;width:40.64px;height:8.0px;line-height:8.0px;font-size:7.0px;text-align:right;color:#000;padding-right:1.49px;transform:scaleX(0.94);transform-origin:100% 50%;">6</div>
<div class="t" style="left:145.76px;top:411.09px;width:34.04px;height:8.0px;line-height:8.0px;font-size:7.0px;text-align:right;color:#000;padding-right:1.49px;transform:scaleX(0.94);transform-origin:100% 50%;">5</div>
<div class="t" style="left:177.73px;top:411.09px;width:34.57px;height:8.0px;line-height:8.0px;font-size:7.0px;text-align:right;color:#000;padding-right:1.49px;transform:scaleX(0.94);transform-origin:100% 50%;">3116</div>
<div class="t" style="left:210.19px;top:411.09px;width:35.11px;height:8.0px;line-height:8.0px;font-size:7.0px;text-align:right;color:#000;padding-right:1.49px;transform:scaleX(0.94);transform-origin:100% 50%;">85</div>
<div class="t" style="left:243.24px;top:411.09px;width:34.26px;height:8.0px;line-height:8.0px;font-size:7.0px;text-align:right;color:#000;padding-right:1.70px;transform:scaleX(0.94);transform-origin:100% 50%;">0.738509</div>
<div class="t" style="left:274.32px;top:411.09px;width:52.98px;height:8.0px;line-height:8.0px;font-size:7.0px;text-align:right;color:#000;padding-right:1.49px;transform:scaleX(0.94);transform-origin:100% 50%;">5</div>
<div class="t" style="left:325.23px;top:411.09px;width:34.47px;height:8.0px;line-height:8.0px;font-size:7.0px;text-align:right;color:#000;padding-right:1.49px;transform:scaleX(0.94);transform-origin:100% 50%;">77</div>
<div class="t" style="left:357.61px;top:411.09px;width:34.79px;height:8.0px;line-height:8.0px;font-size:7.0px;text-align:right;color:#000;padding-right:1.49px;transform:scaleX(0.94);transform-origin:100% 50%;">0</div>
<div class="t" style="left:389.66px;top:411.09px;width:45.64px;height:8.0px;line-height:8.0px;font-size:7.0px;text-align:right;color:#000;padding-right:0.85px;transform:scaleX(0.94);transform-origin:100% 50%;">123971.662</div>
<div class="t" style="left:432.48px;top:411.09px;width:47.02px;height:8.0px;line-height:8.0px;font-size:7.0px;text-align:right;color:#000;padding-right:2.02px;transform:scaleX(0.94);transform-origin:100% 50%;">(131,028.34)</div>
<div class="t" style="left:475.68px;top:411.09px;width:63.72px;height:8.0px;line-height:8.0px;font-size:7.0px;text-align:right;color:#000;padding-right:3.51px;transform:scaleX(0.94);transform-origin:100% 50%;">17,168,425,364</div>
<div class="t" style="left:12.30px;top:421.75px;width:35.89px;height:8.0px;line-height:8.0px;font-size:6.8px;text-align:left;color:#000;padding-left:1.78px;transform:scaleX(0.9);transform-origin:0 50%;letter-spacing:0.15px;">AVERAGE</div>
<div class="t" style="left:42.49px;top:421.69px;width:35.11px;height:8.0px;line-height:8.0px;font-size:7.0px;text-align:right;color:#000;padding-right:2.13px;transform:scaleX(0.94);transform-origin:100% 50%;">0.573751</div>
<div class="t" style="left:75.56px;top:421.69px;width:34.04px;height:8.0px;line-height:8.0px;font-size:7.0px;text-align:right;color:#000;padding-right:1.49px;transform:scaleX(0.94);transform-origin:100% 50%;">2028</div>
<div class="t" style="left:107.16px;top:421.69px;width:40.64px;height:8.0px;line-height:8.0px;font-size:7.0px;text-align:right;color:#000;padding-right:1.49px;transform:scaleX(0.94);transform-origin:100% 50%;">7</div>
<div class="t" style="left:145.76px;top:421.69px;width:34.04px;height:8.0px;line-height:8.0px;font-size:7.0px;text-align:right;color:#000;padding-right:1.49px;transform:scaleX(0.94);transform-origin:100% 50%;">5</div>
<div class="t" style="left:177.73px;top:421.69px;width:34.57px;height:8.0px;line-height:8.0px;font-size:7.0px;text-align:right;color:#000;padding-right:1.49px;transform:scaleX(0.94);transform-origin:100% 50%;">3877</div>
<div class="t" style="left:210.19px;top:421.69px;width:35.11px;height:8.0px;line-height:8.0px;font-size:7.0px;text-align:right;color:#000;padding-right:1.49px;transform:scaleX(0.94);transform-origin:100% 50%;">17</div>
<div class="t" style="left:243.24px;top:421.69px;width:34.26px;height:8.0px;line-height:8.0px;font-size:7.0px;text-align:right;color:#000;padding-right:1.70px;transform:scaleX(0.94);transform-origin:100% 50%;">1.180241</div>
<div class="t" style="left:274.32px;top:421.69px;width:52.98px;height:8.0px;line-height:8.0px;font-size:7.0px;text-align:right;color:#000;padding-right:1.49px;transform:scaleX(0.94);transform-origin:100% 50%;">5</div>
<div class="t" style="left:325.23px;top:421.69px;width:34.47px;height:8.0px;line-height:8.0px;font-size:7.0px;text-align:right;color:#000;padding-right:1.49px;transform:scaleX(0.94);transform-origin:100% 50%;">77</div>
<div class="t" style="left:357.61px;top:421.69px;width:34.79px;height:8.0px;line-height:8.0px;font-size:7.0px;text-align:right;color:#000;padding-right:1.49px;transform:scaleX(0.94);transform-origin:100% 50%;">2293</div>
<div class="t" style="left:389.66px;top:421.69px;width:45.64px;height:8.0px;line-height:8.0px;font-size:7.0px;text-align:right;color:#000;padding-right:0.85px;transform:scaleX(0.94);transform-origin:100% 50%;">239901.7156</div>
<div class="t" style="left:432.48px;top:421.69px;width:47.02px;height:8.0px;line-height:8.0px;font-size:7.0px;text-align:right;color:#000;padding-right:2.02px;transform:scaleX(0.94);transform-origin:100% 50%;">(60,098.28)</div>
<div class="t" style="left:475.68px;top:421.69px;width:63.72px;height:8.0px;line-height:8.0px;font-size:7.0px;text-align:right;color:#000;padding-right:3.51px;transform:scaleX(0.94);transform-origin:100% 50%;">3,611,803,788</div>
<div class="t" style="left:12.30px;top:432.45px;width:35.89px;height:8.0px;line-height:8.0px;font-size:6.8px;text-align:left;color:#000;padding-left:1.78px;transform:scaleX(0.9);transform-origin:0 50%;letter-spacing:0.15px;">AVERAGE</div>
<div class="t" style="left:42.49px;top:432.39px;width:35.11px;height:8.0px;line-height:8.0px;font-size:7.0px;text-align:right;color:#000;padding-right:2.13px;transform:scaleX(0.94);transform-origin:100% 50%;">0.654312</div>
<div class="t" style="left:75.56px;top:432.39px;width:34.04px;height:8.0px;line-height:8.0px;font-size:7.0px;text-align:right;color:#000;padding-right:1.49px;transform:scaleX(0.94);transform-origin:100% 50%;">2100</div>
<div class="t" style="left:107.16px;top:432.39px;width:40.64px;height:8.0px;line-height:8.0px;font-size:7.0px;text-align:right;color:#000;padding-right:1.49px;transform:scaleX(0.94);transform-origin:100% 50%;">6</div>
<div class="t" style="left:145.76px;top:432.39px;width:34.04px;height:8.0px;line-height:8.0px;font-size:7.0px;text-align:right;color:#000;padding-right:1.49px;transform:scaleX(0.94);transform-origin:100% 50%;">4</div>
<div class="t" style="left:177.73px;top:432.39px;width:34.57px;height:8.0px;line-height:8.0px;font-size:7.0px;text-align:right;color:#000;padding-right:1.49px;transform:scaleX(0.94);transform-origin:100% 50%;">7200</div>
<div class="t" style="left:210.19px;top:432.39px;width:35.11px;height:8.0px;line-height:8.0px;font-size:7.0px;text-align:right;color:#000;padding-right:1.49px;transform:scaleX(0.94);transform-origin:100% 50%;">98</div>
<div class="t" style="left:243.24px;top:432.39px;width:34.26px;height:8.0px;line-height:8.0px;font-size:7.0px;text-align:right;color:#000;padding-right:1.70px;transform:scaleX(0.94);transform-origin:100% 50%;">2.1467</div>
<div class="t" style="left:274.32px;top:432.39px;width:52.98px;height:8.0px;line-height:8.0px;font-size:7.0px;text-align:right;color:#000;padding-right:1.49px;transform:scaleX(0.94);transform-origin:100% 50%;">5</div>
<div class="t" style="left:325.23px;top:432.39px;width:34.47px;height:8.0px;line-height:8.0px;font-size:7.0px;text-align:right;color:#000;padding-right:1.49px;transform:scaleX(0.94);transform-origin:100% 50%;">60</div>
<div class="t" style="left:357.61px;top:432.39px;width:34.79px;height:8.0px;line-height:8.0px;font-size:7.0px;text-align:right;color:#000;padding-right:1.49px;transform:scaleX(0.94);transform-origin:100% 50%;">8371</div>
<div class="t" style="left:389.66px;top:432.39px;width:45.64px;height:8.0px;line-height:8.0px;font-size:7.0px;text-align:right;color:#000;padding-right:0.85px;transform:scaleX(0.94);transform-origin:100% 50%;">175054.2351</div>
<div class="t" style="left:432.48px;top:432.39px;width:47.02px;height:8.0px;line-height:8.0px;font-size:7.0px;text-align:right;color:#000;padding-right:4.15px;transform:scaleX(0.94);transform-origin:100% 50%;">120,054.24</div>
<div class="t" style="left:475.68px;top:432.39px;width:63.72px;height:8.0px;line-height:8.0px;font-size:7.0px;text-align:right;color:#000;padding-right:3.51px;transform:scaleX(0.94);transform-origin:100% 50%;">14,413,019,358</div>
<div class="t" style="left:12.30px;top:443.15px;width:35.89px;height:8.0px;line-height:8.0px;font-size:6.8px;text-align:left;color:#000;padding-left:1.78px;transform:scaleX(0.9);transform-origin:0 50%;letter-spacing:0.15px;">FAIR</div>
<div class="t" style="left:42.49px;top:443.09px;width:35.11px;height:8.0px;line-height:8.0px;font-size:7.0px;text-align:right;color:#000;padding-right:2.13px;transform:scaleX(0.94);transform-origin:100% 50%;">0.43865</div>
<div class="t" style="left:75.56px;top:443.09px;width:34.04px;height:8.0px;line-height:8.0px;font-size:7.0px;text-align:right;color:#000;padding-right:1.49px;transform:scaleX(0.94);transform-origin:100% 50%;">1726</div>
<div class="t" style="left:107.16px;top:443.09px;width:40.64px;height:8.0px;line-height:8.0px;font-size:7.0px;text-align:right;color:#000;padding-right:1.49px;transform:scaleX(0.94);transform-origin:100% 50%;">7</div>
<div class="t" style="left:145.76px;top:443.09px;width:34.04px;height:8.0px;line-height:8.0px;font-size:7.0px;text-align:right;color:#000;padding-right:1.49px;transform:scaleX(0.94);transform-origin:100% 50%;">4</div>
<div class="t" style="left:177.73px;top:443.09px;width:34.57px;height:8.0px;line-height:8.0px;font-size:7.0px;text-align:right;color:#000;padding-right:1.49px;transform:scaleX(0.94);transform-origin:100% 50%;">1446</div>
<div class="t" style="left:210.19px;top:443.09px;width:35.11px;height:8.0px;line-height:8.0px;font-size:7.0px;text-align:right;color:#000;padding-right:1.49px;transform:scaleX(0.94);transform-origin:100% 50%;">98</div>
<div class="t" style="left:243.24px;top:443.09px;width:34.26px;height:8.0px;line-height:8.0px;font-size:7.0px;text-align:right;color:#000;padding-right:1.70px;transform:scaleX(0.94);transform-origin:100% 50%;">1.444041</div>
<div class="t" style="left:274.32px;top:443.09px;width:52.98px;height:8.0px;line-height:8.0px;font-size:7.0px;text-align:right;color:#000;padding-right:1.49px;transform:scaleX(0.94);transform-origin:100% 50%;">4</div>
<div class="t" style="left:325.23px;top:443.09px;width:34.47px;height:8.0px;line-height:8.0px;font-size:7.0px;text-align:right;color:#000;padding-right:1.49px;transform:scaleX(0.94);transform-origin:100% 50%;">77</div>
<div class="t" style="left:357.61px;top:443.09px;width:34.79px;height:8.0px;line-height:8.0px;font-size:7.0px;text-align:right;color:#000;padding-right:1.49px;transform:scaleX(0.94);transform-origin:100% 50%;">32974</div>
<div class="t" style="left:389.66px;top:443.09px;width:45.64px;height:8.0px;line-height:8.0px;font-size:7.0px;text-align:right;color:#000;padding-right:0.85px;transform:scaleX(0.94);transform-origin:100% 50%;">166987.8834</div>
<div class="t" style="left:432.48px;top:443.09px;width:47.02px;height:8.0px;line-height:8.0px;font-size:7.0px;text-align:right;color:#000;padding-right:4.15px;transform:scaleX(0.94);transform-origin:100% 50%;">66,987.88</div>
<div class="t" style="left:475.68px;top:443.09px;width:63.72px;height:8.0px;line-height:8.0px;font-size:7.0px;text-align:right;color:#000;padding-right:3.51px;transform:scaleX(0.94);transform-origin:100% 50%;">4,487,376,517</div>
<div class="t" style="left:12.30px;top:454.35px;width:35.89px;height:8.0px;line-height:8.0px;font-size:6.8px;text-align:left;color:#000;padding-left:1.78px;transform:scaleX(0.9);transform-origin:0 50%;letter-spacing:0.15px;">AVERAGE</div>
<div class="t" style="left:42.49px;top:454.29px;width:35.11px;height:8.0px;line-height:8.0px;font-size:7.0px;text-align:right;color:#000;padding-right:2.13px;transform:scaleX(0.94);transform-origin:100% 50%;">0.477624</div>
<div class="t" style="left:75.56px;top:454.29px;width:34.04px;height:8.0px;line-height:8.0px;font-size:7.0px;text-align:right;color:#000;padding-right:1.49px;transform:scaleX(0.94);transform-origin:100% 50%;">1464</div>
<div class="t" style="left:107.16px;top:454.29px;width:40.64px;height:8.0px;line-height:8.0px;font-size:7.0px;text-align:right;color:#000;padding-right:1.49px;transform:scaleX(0.94);transform-origin:100% 50%;">7</div>
<div class="t" style="left:145.76px;top:454.29px;width:34.04px;height:8.0px;line-height:8.0px;font-size:7.0px;text-align:right;color:#000;padding-right:1.49px;transform:scaleX(0.94);transform-origin:100% 50%;">6</div>
<div class="t" style="left:177.73px;top:454.29px;width:34.57px;height:8.0px;line-height:8.0px;font-size:7.0px;text-align:right;color:#000;padding-right:1.49px;transform:scaleX(0.94);transform-origin:100% 50%;">1200</div>
<div class="t" style="left:210.19px;top:454.29px;width:35.11px;height:8.0px;line-height:8.0px;font-size:7.0px;text-align:right;color:#000;padding-right:1.49px;transform:scaleX(0.94);transform-origin:100% 50%;">118</div>
<div class="t" style="left:243.24px;top:454.29px;width:34.26px;height:8.0px;line-height:8.0px;font-size:7.0px;text-align:right;color:#000;padding-right:1.70px;transform:scaleX(0.94);transform-origin:100% 50%;">1.642827</div>
<div class="t" style="left:274.32px;top:454.29px;width:52.98px;height:8.0px;line-height:8.0px;font-size:7.0px;text-align:right;color:#000;padding-right:1.49px;transform:scaleX(0.94);transform-origin:100% 50%;">5</div>
<div class="t" style="left:325.23px;top:454.29px;width:34.47px;height:8.0px;line-height:8.0px;font-size:7.0px;text-align:right;color:#000;padding-right:1.49px;transform:scaleX(0.94);transform-origin:100% 50%;">85</div>
<div class="t" style="left:357.61px;top:454.29px;width:34.79px;height:8.0px;line-height:8.0px;font-size:7.0px;text-align:right;color:#000;padding-right:1.49px;transform:scaleX(0.94);transform-origin:100% 50%;">10799</div>
<div class="t" style="left:389.66px;top:454.29px;width:45.64px;height:8.0px;line-height:8.0px;font-size:7.0px;text-align:right;color:#000;padding-right:0.85px;transform:scaleX(0.94);transform-origin:100% 50%;">200401.1278</div>
<div class="t" style="left:432.48px;top:454.29px;width:47.02px;height:8.0px;line-height:8.0px;font-size:7.0px;text-align:right;color:#000;padding-right:2.02px;transform:scaleX(0.94);transform-origin:100% 50%;">(29,598.87)</div>
<div class="t" style="left:475.68px;top:454.29px;width:63.72px;height:8.0px;line-height:8.0px;font-size:7.0px;text-align:right;color:#000;padding-right:3.51px;transform:scaleX(0.94);transform-origin:100% 50%;">876,093,236</div>
<div class="t" style="left:12.30px;top:464.45px;width:35.89px;height:8.0px;line-height:8.0px;font-size:6.8px;text-align:left;color:#000;padding-left:1.78px;transform:scaleX(0.9);transform-origin:0 50%;letter-spacing:0.15px;">AVERAGE</div>
<div class="t" style="left:42.49px;top:464.39px;width:35.11px;height:8.0px;line-height:8.0px;font-size:7.0px;text-align:right;color:#000;padding-right:2.13px;transform:scaleX(0.94);transform-origin:100% 50%;">0.507358</div>
<div class="t" style="left:75.56px;top:464.39px;width:34.04px;height:8.0px;line-height:8.0px;font-size:7.0px;text-align:right;color:#000;padding-right:1.49px;transform:scaleX(0.94);transform-origin:100% 50%;">1095</div>
<div class="t" style="left:107.16px;top:464.39px;width:40.64px;height:8.0px;line-height:8.0px;font-size:7.0px;text-align:right;color:#000;padding-right:1.49px;transform:scaleX(0.94);transform-origin:100% 50%;">5</div>
<div class="t" style="left:145.76px;top:464.39px;width:34.04px;height:8.0px;line-height:8.0px;font-size:7.0px;text-align:right;color:#000;padding-right:1.49px;transform:scaleX(0.94);transform-origin:100% 50%;">5</div>
<div class="t" style="left:177.73px;top:464.39px;width:34.57px;height:8.0px;line-height:8.0px;font-size:7.0px;text-align:right;color:#000;padding-right:1.49px;transform:scaleX(0.94);transform-origin:100% 50%;">1200</div>
<div class="t" style="left:210.19px;top:464.39px;width:35.11px;height:8.0px;line-height:8.0px;font-size:7.0px;text-align:right;color:#000;padding-right:1.49px;transform:scaleX(0.94);transform-origin:100% 50%;">118</div>
<div class="t" style="left:243.24px;top:464.39px;width:34.26px;height:8.0px;line-height:8.0px;font-size:7.0px;text-align:right;color:#000;padding-right:1.70px;transform:scaleX(0.94);transform-origin:100% 50%;">1.66639</div>
<div class="t" style="left:274.32px;top:464.39px;width:52.98px;height:8.0px;line-height:8.0px;font-size:7.0px;text-align:right;color:#000;padding-right:1.49px;transform:scaleX(0.94);transform-origin:100% 50%;">5</div>
<div class="t" style="left:325.23px;top:464.39px;width:34.47px;height:8.0px;line-height:8.0px;font-size:7.0px;text-align:right;color:#000;padding-right:1.49px;transform:scaleX(0.94);transform-origin:100% 50%;">85</div>
<div class="t" style="left:357.61px;top:464.39px;width:34.79px;height:8.0px;line-height:8.0px;font-size:7.0px;text-align:right;color:#000;padding-right:1.49px;transform:scaleX(0.94);transform-origin:100% 50%;">8329</div>
<div class="t" style="left:389.66px;top:464.39px;width:45.64px;height:8.0px;line-height:8.0px;font-size:7.0px;text-align:right;color:#000;padding-right:0.85px;transform:scaleX(0.94);transform-origin:100% 50%;">60032.55469</div>
<div class="t" style="left:432.48px;top:464.39px;width:47.02px;height:8.0px;line-height:8.0px;font-size:7.0px;text-align:right;color:#000;padding-right:2.02px;transform:scaleX(0.94);transform-origin:100% 50%;">(94,967.45)</div>
<div class="t" style="left:475.68px;top:464.39px;width:63.72px;height:8.0px;line-height:8.0px;font-size:7.0px;text-align:right;color:#000;padding-right:3.51px;transform:scaleX(0.94);transform-origin:100% 50%;">9,018,815,669</div>
<div class="t" style="left:12.30px;top:474.45px;width:35.89px;height:8.0px;line-height:8.0px;font-size:6.8px;text-align:left;color:#000;padding-left:1.78px;transform:scaleX(0.9);transform-origin:0 50%;letter-spacing:0.15px;">AVERAGE</div>
<div class="t" style="left:42.49px;top:474.39px;width:35.11px;height:8.0px;line-height:8.0px;font-size:7.0px;text-align:right;color:#000;padding-right:2.13px;transform:scaleX(0.94);transform-origin:100% 50%;">0.526404</div>
<div class="t" style="left:75.56px;top:474.39px;width:34.04px;height:8.0px;line-height:8.0px;font-size:7.0px;text-align:right;color:#000;padding-right:1.49px;transform:scaleX(0.94);transform-origin:100% 50%;">1437</div>
<div class="t" style="left:107.16px;top:474.39px;width:40.64px;height:8.0px;line-height:8.0px;font-size:7.0px;text-align:right;color:#000;padding-right:1.49px;transform:scaleX(0.94);transform-origin:100% 50%;">5</div>
<div class="t" style="left:145.76px;top:474.39px;width:34.04px;height:8.0px;line-height:8.0px;font-size:7.0px;text-align:right;color:#000;padding-right:1.49px;transform:scaleX(0.94);transform-origin:100% 50%;">7</div>
<div class="t" style="left:177.73px;top:474.39px;width:34.57px;height:8.0px;line-height:8.0px;font-size:7.0px;text-align:right;color:#000;padding-right:1.49px;transform:scaleX(0.94);transform-origin:100% 50%;">1200</div>
<div class="t" style="left:210.19px;top:474.39px;width:35.11px;height:8.0px;line-height:8.0px;font-size:7.0px;text-align:right;color:#000;padding-right:1.49px;transform:scaleX(0.94);transform-origin:100% 50%;">118</div>
<div class="t" style="left:243.24px;top:474.39px;width:34.26px;height:8.0px;line-height:8.0px;font-size:7.0px;text-align:right;color:#000;padding-right:1.70px;transform:scaleX(0.94);transform-origin:100% 50%;">1.683776</div>
<div class="t" style="left:274.32px;top:474.39px;width:52.98px;height:8.0px;line-height:8.0px;font-size:7.0px;text-align:right;color:#000;padding-right:1.49px;transform:scaleX(0.94);transform-origin:100% 50%;">5</div>
<div class="t" style="left:325.23px;top:474.39px;width:34.47px;height:8.0px;line-height:8.0px;font-size:7.0px;text-align:right;color:#000;padding-right:1.49px;transform:scaleX(0.94);transform-origin:100% 50%;">85</div>
<div class="t" style="left:357.61px;top:474.39px;width:34.79px;height:8.0px;line-height:8.0px;font-size:7.0px;text-align:right;color:#000;padding-right:1.49px;transform:scaleX(0.94);transform-origin:100% 50%;">8329</div>
<div class="t" style="left:389.66px;top:474.39px;width:45.64px;height:8.0px;line-height:8.0px;font-size:7.0px;text-align:right;color:#000;padding-right:0.85px;transform:scaleX(0.94);transform-origin:100% 50%;">83042.1392</div>
<div class="t" style="left:432.48px;top:474.39px;width:47.02px;height:8.0px;line-height:8.0px;font-size:7.0px;text-align:right;color:#000;padding-right:2.02px;transform:scaleX(0.94);transform-origin:100% 50%;">(62,957.86)</div>
<div class="t" style="left:475.68px;top:474.39px;width:63.72px;height:8.0px;line-height:8.0px;font-size:7.0px;text-align:right;color:#000;padding-right:3.51px;transform:scaleX(0.94);transform-origin:100% 50%;">3,963,692,237</div>
<div class="t" style="left:12.30px;top:484.35px;width:35.89px;height:8.0px;line-height:8.0px;font-size:6.8px;text-align:left;color:#000;padding-left:1.78px;transform:scaleX(0.9);transform-origin:0 50%;letter-spacing:0.15px;">AVERAGE</div>
<div class="t" style="left:42.49px;top:484.29px;width:35.11px;height:8.0px;line-height:8.0px;font-size:7.0px;text-align:right;color:#000;padding-right:2.13px;transform:scaleX(0.94);transform-origin:100% 50%;">0.504473</div>
<div class="t" style="left:75.56px;top:484.29px;width:34.04px;height:8.0px;line-height:8.0px;font-size:7.0px;text-align:right;color:#000;padding-right:1.49px;transform:scaleX(0.94);transform-origin:100% 50%;">1746</div>
<div class="t" style="left:107.16px;top:484.29px;width:40.64px;height:8.0px;line-height:8.0px;font-size:7.0px;text-align:right;color:#000;padding-right:1.49px;transform:scaleX(0.94);transform-origin:100% 50%;">6</div>
<div class="t" style="left:145.76px;top:484.29px;width:34.04px;height:8.0px;line-height:8.0px;font-size:7.0px;text-align:right;color:#000;padding-right:1.49px;transform:scaleX(0.94);transform-origin:100% 50%;">6</div>
<div class="t" style="left:177.73px;top:484.29px;width:34.57px;height:8.0px;line-height:8.0px;font-size:7.0px;text-align:right;color:#000;padding-right:1.49px;transform:scaleX(0.94);transform-origin:100% 50%;">1310</div>
<div class="t" style="left:210.19px;top:484.29px;width:35.11px;height:8.0px;line-height:8.0px;font-size:7.0px;text-align:right;color:#000;padding-right:1.49px;transform:scaleX(0.94);transform-origin:100% 50%;">118</div>
<div class="t" style="left:243.24px;top:484.29px;width:34.26px;height:8.0px;line-height:8.0px;font-size:7.0px;text-align:right;color:#000;padding-right:1.70px;transform:scaleX(0.94);transform-origin:100% 50%;">1.594253</div>
<div class="t" style="left:274.32px;top:484.29px;width:52.98px;height:8.0px;line-height:8.0px;font-size:7.0px;text-align:right;color:#000;padding-right:1.49px;transform:scaleX(0.94);transform-origin:100% 50%;">5</div>
<div class="t" style="left:325.23px;top:484.29px;width:34.47px;height:8.0px;line-height:8.0px;font-size:7.0px;text-align:right;color:#000;padding-right:1.49px;transform:scaleX(0.94);transform-origin:100% 50%;">85</div>
<div class="t" style="left:357.61px;top:484.29px;width:34.79px;height:8.0px;line-height:8.0px;font-size:7.0px;text-align:right;color:#000;padding-right:1.49px;transform:scaleX(0.94);transform-origin:100% 50%;">0</div>
<div class="t" style="left:389.66px;top:484.29px;width:45.64px;height:8.0px;line-height:8.0px;font-size:7.0px;text-align:right;color:#000;padding-right:0.85px;transform:scaleX(0.94);transform-origin:100% 50%;">147816.0423</div>
<div class="t" style="left:432.48px;top:484.29px;width:47.02px;height:8.0px;line-height:8.0px;font-size:7.0px;text-align:right;color:#000;padding-right:2.02px;transform:scaleX(0.94);transform-origin:100% 50%;">(17,183.96)</div>
<div class="t" style="left:475.68px;top:484.29px;width:63.72px;height:8.0px;line-height:8.0px;font-size:7.0px;text-align:right;color:#000;padding-right:3.51px;transform:scaleX(0.94);transform-origin:100% 50%;">295,288,401</div>
<div class="t" style="left:12.30px;top:495.05px;width:35.89px;height:8.0px;line-height:8.0px;font-size:6.8px;text-align:left;color:#000;padding-left:1.78px;transform:scaleX(0.9);transform-origin:0 50%;letter-spacing:0.15px;">GOOD</div>
<div class="t" style="left:42.49px;top:494.99px;width:35.11px;height:8.0px;line-height:8.0px;font-size:7.0px;text-align:right;color:#000;padding-right:2.13px;transform:scaleX(0.94);transform-origin:100% 50%;">0.540716</div>
<div class="t" style="left:75.56px;top:494.99px;width:34.04px;height:8.0px;line-height:8.0px;font-size:7.0px;text-align:right;color:#000;padding-right:1.49px;transform:scaleX(0.94);transform-origin:100% 50%;">1752</div>
<div class="t" style="left:107.16px;top:494.99px;width:40.64px;height:8.0px;line-height:8.0px;font-size:7.0px;text-align:right;color:#000;padding-right:1.49px;transform:scaleX(0.94);transform-origin:100% 50%;">7</div>
<div class="t" style="left:145.76px;top:494.99px;width:34.04px;height:8.0px;line-height:8.0px;font-size:7.0px;text-align:right;color:#000;padding-right:1.49px;transform:scaleX(0.94);transform-origin:100% 50%;">6</div>
<div class="t" style="left:177.73px;top:494.99px;width:34.57px;height:8.0px;line-height:8.0px;font-size:7.0px;text-align:right;color:#000;padding-right:1.49px;transform:scaleX(0.94);transform-origin:100% 50%;">1200</div>
<div class="t" style="left:210.19px;top:494.99px;width:35.11px;height:8.0px;line-height:8.0px;font-size:7.0px;text-align:right;color:#000;padding-right:1.49px;transform:scaleX(0.94);transform-origin:100% 50%;">108</div>
<div class="t" style="left:243.24px;top:494.99px;width:34.26px;height:8.0px;line-height:8.0px;font-size:7.0px;text-align:right;color:#000;padding-right:1.70px;transform:scaleX(0.94);transform-origin:100% 50%;">1.729281</div>
<div class="t" style="left:274.32px;top:494.99px;width:52.98px;height:8.0px;line-height:8.0px;font-size:7.0px;text-align:right;color:#000;padding-right:1.49px;transform:scaleX(0.94);transform-origin:100% 50%;">6</div>
<div class="t" style="left:325.23px;top:494.99px;width:34.47px;height:8.0px;line-height:8.0px;font-size:7.0px;text-align:right;color:#000;padding-right:1.49px;transform:scaleX(0.94);transform-origin:100% 50%;">85</div>
<div class="t" style="left:357.61px;top:494.99px;width:34.79px;height:8.0px;line-height:8.0px;font-size:7.0px;text-align:right;color:#000;padding-right:1.49px;transform:scaleX(0.94);transform-origin:100% 50%;">4426</div>
<div class="t" style="left:389.66px;top:494.99px;width:45.64px;height:8.0px;line-height:8.0px;font-size:7.0px;text-align:right;color:#000;padding-right:0.85px;transform:scaleX(0.94);transform-origin:100% 50%;">243259.8333</div>
<div class="t" style="left:432.48px;top:494.99px;width:47.02px;height:8.0px;line-height:8.0px;font-size:7.0px;text-align:right;color:#000;padding-right:2.02px;transform:scaleX(0.94);transform-origin:100% 50%;">(62,740.17)</div>
<div class="t" style="left:475.68px;top:494.99px;width:63.72px;height:8.0px;line-height:8.0px;font-size:7.0px;text-align:right;color:#000;padding-right:3.51px;transform:scaleX(0.94);transform-origin:100% 50%;">3,936,328,519</div>
<div class="t" style="left:12.30px;top:505.15px;width:35.89px;height:8.0px;line-height:8.0px;font-size:6.8px;text-align:left;color:#000;padding-left:1.78px;transform:scaleX(0.9);transform-origin:0 50%;letter-spacing:0.15px;">AVERAGE</div>
<div class="t" style="left:42.49px;top:505.09px;width:35.11px;height:8.0px;line-height:8.0px;font-size:7.0px;text-align:right;color:#000;padding-right:2.13px;transform:scaleX(0.94);transform-origin:100% 50%;">0.534168</div>
<div class="t" style="left:75.56px;top:505.09px;width:34.04px;height:8.0px;line-height:8.0px;font-size:7.0px;text-align:right;color:#000;padding-right:1.49px;transform:scaleX(0.94);transform-origin:100% 50%;">1600</div>
<div class="t" style="left:107.16px;top:505.09px;width:40.64px;height:8.0px;line-height:8.0px;font-size:7.0px;text-align:right;color:#000;padding-right:1.49px;transform:scaleX(0.94);transform-origin:100% 50%;">6</div>
<div class="t" style="left:145.76px;top:505.09px;width:34.04px;height:8.0px;line-height:8.0px;font-size:7.0px;text-align:right;color:#000;padding-right:1.49px;transform:scaleX(0.94);transform-origin:100% 50%;">6</div>
<div class="t" style="left:177.73px;top:505.09px;width:34.57px;height:8.0px;line-height:8.0px;font-size:7.0px;text-align:right;color:#000;padding-right:1.49px;transform:scaleX(0.94);transform-origin:100% 50%;">1200</div>
<div class="t" style="left:210.19px;top:505.09px;width:35.11px;height:8.0px;line-height:8.0px;font-size:7.0px;text-align:right;color:#000;padding-right:1.49px;transform:scaleX(0.94);transform-origin:100% 50%;">108</div>
<div class="t" style="left:243.24px;top:505.09px;width:34.26px;height:8.0px;line-height:8.0px;font-size:7.0px;text-align:right;color:#000;padding-right:1.70px;transform:scaleX(0.94);transform-origin:100% 50%;">1.721634</div>
<div class="t" style="left:274.32px;top:505.09px;width:52.98px;height:8.0px;line-height:8.0px;font-size:7.0px;text-align:right;color:#000;padding-right:1.49px;transform:scaleX(0.94);transform-origin:100% 50%;">5</div>
<div class="t" style="left:325.23px;top:505.09px;width:34.47px;height:8.0px;line-height:8.0px;font-size:7.0px;text-align:right;color:#000;padding-right:1.49px;transform:scaleX(0.94);transform-origin:100% 50%;">85</div>
<div class="t" style="left:357.61px;top:505.09px;width:34.79px;height:8.0px;line-height:8.0px;font-size:7.0px;text-align:right;color:#000;padding-right:1.49px;transform:scaleX(0.94);transform-origin:100% 50%;">4426</div>
<div class="t" style="left:389.66px;top:505.09px;width:45.64px;height:8.0px;line-height:8.0px;font-size:7.0px;text-align:right;color:#000;padding-right:0.85px;transform:scaleX(0.94);transform-origin:100% 50%;">165630.4907</div>
<div class="t" style="left:432.48px;top:505.09px;width:47.02px;height:8.0px;line-height:8.0px;font-size:7.0px;text-align:right;color:#000;padding-right:2.02px;transform:scaleX(0.94);transform-origin:100% 50%;">(155,369.51)</div>
<div class="t" style="left:475.68px;top:505.09px;width:63.72px;height:8.0px;line-height:8.0px;font-size:7.0px;text-align:right;color:#000;padding-right:3.51px;transform:scaleX(0.94);transform-origin:100% 50%;">24,139,684,420</div>
<div class="t" style="left:12.30px;top:516.25px;width:35.89px;height:8.0px;line-height:8.0px;font-size:6.8px;text-align:left;color:#000;padding-left:1.78px;transform:scaleX(0.9);transform-origin:0 50%;letter-spacing:0.15px;">AVERAGE</div>
<div class="t" style="left:42.49px;top:516.19px;width:35.11px;height:8.0px;line-height:8.0px;font-size:7.0px;text-align:right;color:#000;padding-right:2.13px;transform:scaleX(0.94);transform-origin:100% 50%;">0.634423</div>
<div class="t" style="left:75.56px;top:516.19px;width:34.04px;height:8.0px;line-height:8.0px;font-size:7.0px;text-align:right;color:#000;padding-right:1.49px;transform:scaleX(0.94);transform-origin:100% 50%;">1965</div>
<div class="t" style="left:107.16px;top:516.19px;width:40.64px;height:8.0px;line-height:8.0px;font-size:7.0px;text-align:right;color:#000;padding-right:1.49px;transform:scaleX(0.94);transform-origin:100% 50%;">6</div>
<div class="t" style="left:145.76px;top:516.19px;width:34.04px;height:8.0px;line-height:8.0px;font-size:7.0px;text-align:right;color:#000;padding-right:1.49px;transform:scaleX(0.94);transform-origin:100% 50%;">5</div>
<div class="t" style="left:177.73px;top:516.19px;width:34.57px;height:8.0px;line-height:8.0px;font-size:7.0px;text-align:right;color:#000;padding-right:1.49px;transform:scaleX(0.94);transform-origin:100% 50%;">1300</div>
<div class="t" style="left:210.19px;top:516.19px;width:35.11px;height:8.0px;line-height:8.0px;font-size:7.0px;text-align:right;color:#000;padding-right:1.49px;transform:scaleX(0.94);transform-origin:100% 50%;">118</div>
<div class="t" style="left:243.24px;top:516.19px;width:34.26px;height:8.0px;line-height:8.0px;font-size:7.0px;text-align:right;color:#000;padding-right:1.70px;transform:scaleX(0.94);transform-origin:100% 50%;">1.746914</div>
<div class="t" style="left:274.32px;top:516.19px;width:52.98px;height:8.0px;line-height:8.0px;font-size:7.0px;text-align:right;color:#000;padding-right:1.49px;transform:scaleX(0.94);transform-origin:100% 50%;">5</div>
<div class="t" style="left:325.23px;top:516.19px;width:34.47px;height:8.0px;line-height:8.0px;font-size:7.0px;text-align:right;color:#000;padding-right:1.49px;transform:scaleX(0.94);transform-origin:100% 50%;">85</div>
<div class="t" style="left:357.61px;top:516.19px;width:34.79px;height:8.0px;line-height:8.0px;font-size:7.0px;text-align:right;color:#000;padding-right:1.49px;transform:scaleX(0.94);transform-origin:100% 50%;">8888</div>
<div class="t" style="left:389.66px;top:516.19px;width:45.64px;height:8.0px;line-height:8.0px;font-size:7.0px;text-align:right;color:#000;padding-right:0.85px;transform:scaleX(0.94);transform-origin:100% 50%;">190245.5892</div>
<div class="t" style="left:432.48px;top:516.19px;width:47.02px;height:8.0px;line-height:8.0px;font-size:7.0px;text-align:right;color:#000;padding-right:2.02px;transform:scaleX(0.94);transform-origin:100% 50%;">(8,504.41)</div>
<div class="t" style="left:475.68px;top:516.19px;width:63.72px;height:8.0px;line-height:8.0px;font-size:7.0px;text-align:right;color:#000;padding-right:3.51px;transform:scaleX(0.94);transform-origin:100% 50%;">72,325,003</div>
<div class="t" style="left:12.30px;top:526.65px;width:35.89px;height:8.0px;line-height:8.0px;font-size:6.8px;text-align:left;color:#000;padding-left:1.78px;transform:scaleX(0.9);transform-origin:0 50%;letter-spacing:0.15px;">AVERAGE</div>
<div class="t" style="left:42.49px;top:526.59px;width:35.11px;height:8.0px;line-height:8.0px;font-size:7.0px;text-align:right;color:#000;padding-right:2.13px;transform:scaleX(0.94);transform-origin:100% 50%;">0.753610</div>
<div class="t" style="left:75.56px;top:526.59px;width:34.04px;height:8.0px;line-height:8.0px;font-size:7.0px;text-align:right;color:#000;padding-right:1.49px;transform:scaleX(0.94);transform-origin:100% 50%;">2000</div>
<div class="t" style="left:107.16px;top:526.59px;width:40.64px;height:8.0px;line-height:8.0px;font-size:7.0px;text-align:right;color:#000;padding-right:1.49px;transform:scaleX(0.94);transform-origin:100% 50%;">6</div>
<div class="t" style="left:145.76px;top:526.59px;width:34.04px;height:8.0px;line-height:8.0px;font-size:7.0px;text-align:right;color:#000;padding-right:1.49px;transform:scaleX(0.94);transform-origin:100% 50%;">5</div>
<div class="t" style="left:177.73px;top:526.59px;width:34.57px;height:8.0px;line-height:8.0px;font-size:7.0px;text-align:right;color:#000;padding-right:1.49px;transform:scaleX(0.94);transform-origin:100% 50%;">1300</div>
<div class="t" style="left:210.19px;top:526.59px;width:35.11px;height:8.0px;line-height:8.0px;font-size:7.0px;text-align:right;color:#000;padding-right:1.49px;transform:scaleX(0.94);transform-origin:100% 50%;">120</div>
<div class="t" style="left:243.24px;top:526.59px;width:34.26px;height:8.0px;line-height:8.0px;font-size:7.0px;text-align:right;color:#000;padding-right:1.70px;transform:scaleX(0.94);transform-origin:100% 50%;">1.081828</div>
<div class="t" style="left:274.32px;top:526.59px;width:52.98px;height:8.0px;line-height:8.0px;font-size:7.0px;text-align:right;color:#000;padding-right:1.49px;transform:scaleX(0.94);transform-origin:100% 50%;">5</div>
<div class="t" style="left:325.23px;top:526.59px;width:34.47px;height:8.0px;line-height:8.0px;font-size:7.0px;text-align:right;color:#000;padding-right:1.49px;transform:scaleX(0.94);transform-origin:100% 50%;">85</div>
<div class="t" style="left:357.61px;top:526.59px;width:34.79px;height:8.0px;line-height:8.0px;font-size:7.0px;text-align:right;color:#000;padding-right:1.49px;transform:scaleX(0.94);transform-origin:100% 50%;">7755</div>
<div class="t" style="left:389.66px;top:526.59px;width:45.64px;height:8.0px;line-height:8.0px;font-size:7.0px;text-align:right;color:#000;padding-right:0.85px;transform:scaleX(0.94);transform-origin:100% 50%;">164041.1276</div>
<div class="t" style="left:432.48px;top:526.59px;width:47.02px;height:8.0px;line-height:8.0px;font-size:7.0px;text-align:right;color:#000;padding-right:2.02px;transform:scaleX(0.94);transform-origin:100% 50%;">(50,958.87)</div>
<div class="t" style="left:475.68px;top:526.59px;width:63.72px;height:8.0px;line-height:8.0px;font-size:7.0px;text-align:right;color:#000;padding-right:3.51px;transform:scaleX(0.94);transform-origin:100% 50%;">2,596,803,793</div>
<div style="position:absolute;left:599.00px;top:170px;width:213.00px;height:1px;background:#3a3a3a"></div>
<div style="position:absolute;left:599.00px;top:180px;width:213.00px;height:1px;background:#3a3a3a"></div>
<div style="position:absolute;left:599.00px;top:191px;width:213.00px;height:1px;background:#3a3a3a"></div>
<div style="position:absolute;left:599.00px;top:202px;width:213.00px;height:1px;background:#3a3a3a"></div>
<div style="position:absolute;left:599.00px;top:213px;width:213.00px;height:1px;background:#3a3a3a"></div>
<div style="position:absolute;left:599px;top:170.00px;width:1px;height:44.00px;background:#3a3a3a"></div>
<div style="position:absolute;left:691px;top:170.00px;width:1px;height:44.00px;background:#3a3a3a"></div>
<div style="position:absolute;left:751px;top:170.00px;width:1px;height:44.00px;background:#3a3a3a"></div>
<div style="position:absolute;left:811px;top:170.00px;width:1px;height:44.00px;background:#3a3a3a"></div>
<div class="t" style="left:691.60px;top:171.82px;width:60.10px;height:8.0px;line-height:8.0px;font-size:6.6px;text-align:center;color:#000;font-weight:bold;text-shadow:none;">Sample</div>
<div class="t" style="left:751.70px;top:171.82px;width:59.90px;height:8.0px;line-height:8.0px;font-size:6.6px;text-align:center;color:#000;font-weight:bold;text-shadow:none;">Out of Sample</div>
<div class="t" style="left:599.30px;top:181.99px;width:99.25px;height:8.0px;line-height:8.0px;font-size:6.7px;text-align:left;color:#222;padding-left:1.83px;transform:scaleX(0.93);transform-origin:0 50%;text-shadow:none;">Observations</div>
<div class="t" style="left:691.60px;top:181.78px;width:60.10px;height:8.0px;line-height:8.0px;font-size:6.4px;text-align:right;color:#000;padding-right:3.60px;text-shadow:none;">481</div>
<div class="t" style="left:751.70px;top:181.98px;width:59.90px;height:8.0px;line-height:8.0px;font-size:6.4px;text-align:right;color:#000;padding-right:4.20px;text-shadow:none;">4,039</div>
<div class="t" style="left:599.30px;top:192.99px;width:99.25px;height:8.0px;line-height:8.0px;font-size:6.7px;text-align:left;color:#222;padding-left:1.83px;transform:scaleX(0.93);transform-origin:0 50%;text-shadow:none;">R Square</div>
<div class="t" style="left:691.60px;top:192.78px;width:60.10px;height:8.0px;line-height:8.0px;font-size:6.4px;text-align:right;color:#000;padding-right:3.60px;text-shadow:none;">0.795</div>
<div class="t" style="left:751.70px;top:192.98px;width:59.90px;height:8.0px;line-height:8.0px;font-size:6.4px;text-align:right;color:#000;padding-right:4.20px;text-shadow:none;">0.769</div>
<div class="t" style="left:599.30px;top:203.99px;width:99.25px;height:8.0px;line-height:8.0px;font-size:6.7px;text-align:left;color:#222;padding-left:1.83px;transform:scaleX(0.93);transform-origin:0 50%;text-shadow:none;">Std. Error of the Estimate</div>
<div class="t" style="left:691.60px;top:203.78px;width:60.10px;height:8.0px;line-height:8.0px;font-size:6.4px;text-align:right;color:#000;padding-right:3.60px;text-shadow:none;">73,092</div>
<div class="t" style="left:751.70px;top:203.98px;width:59.90px;height:8.0px;line-height:8.0px;font-size:6.4px;text-align:right;color:#000;padding-right:4.20px;text-shadow:none;">75,723</div>
<div style="position:absolute;left:598.3px;top:223.3px;width:93.80000000000007px;height:11.599999999999994px;border:1.5px solid #217346;box-sizing:border-box"></div>
<div style="position:absolute;left:690.1px;top:232.9px;width:3px;height:3px;background:#217346;border:0.5px solid #fff"></div>
<div style="position:absolute;left:0px;top:0px;width:974.00px;height:27.00px;background:#000;"></div>
<div style="position:absolute;left:0px;top:27px;width:974.00px;height:33.00px;background:#217346;"></div>
<div style="position:absolute;left:30.2px;top:44.4px;width:29.60px;height:15.60px;background:#f3f3f3;"></div>
<div style="position:absolute;left:0px;top:60px;width:974.00px;height:46.00px;background:#f3f3f3;"></div>
<div style="position:absolute;left:0px;top:105.4px;width:974.00px;height:0.80px;background:#dcdcdc;"></div>
<div style="position:absolute;left:0px;top:106px;width:974.00px;height:45.00px;background:#e6e6e6;"></div>
<div style="position:absolute;left:78.4px;top:62px;width:0.60px;height:42.00px;background:#dadada;"></div>
<div style="position:absolute;left:184.3px;top:62px;width:0.60px;height:42.00px;background:#dadada;"></div>
<div style="position:absolute;left:318.2px;top:62px;width:0.60px;height:42.00px;background:#dadada;"></div>
<div style="position:absolute;left:81.4px;top:65.4px;width:77.80px;height:11.40px;background:#fff;border:0.7px solid #d2d2d2;box-sizing:border-box"></div>
<div style="position:absolute;left:137.6px;top:65.4px;width:0.60px;height:11.40px;background:#d6d6d6;"></div>
<div style="position:absolute;left:2px;top:111.8px;width:51.40px;height:12.80px;background:#fff;border:0.6px solid #c6c6c6;box-sizing:border-box"></div>
<div style="position:absolute;left:69px;top:111.8px;width:55.00px;height:12.80px;background:#fff;border:0.6px solid #d6d6d6;box-sizing:border-box"></div>
<div style="position:absolute;left:126.5px;top:112.3px;width:844.60px;height:32.60px;background:#fff;border:0.7px solid #dadada;box-sizing:border-box"></div>
<div style="position:absolute;left:0px;top:529.2px;width:974.00px;height:13.80px;background:#e6e6e6;"></div>
<div style="position:absolute;left:0px;top:528.8px;width:974.00px;height:0.60px;background:#c6c6c6;"></div>
<div style="position:absolute;left:73.9px;top:529.2px;width:57.80px;height:13.80px;background:#fff;"></div>
<div style="position:absolute;left:73.9px;top:540.6px;width:57.80px;height:1.40px;background:#217346;"></div>
<div style="position:absolute;left:0px;top:543px;width:974.00px;height:4.00px;background:#f3f3f3;"></div>
<div style="position:absolute;left:963px;top:151px;width:11.00px;height:378.20px;background:#e6e6e6;"></div>
<div style="position:absolute;left:964.5px;top:158px;width:7.60px;height:365.00px;background:#d9d9d9;"></div>
<div style="position:absolute;left:964.6px;top:151.4px;width:7.50px;height:6.90px;background:#fff;border:0.6px solid #cfcfcf;box-sizing:border-box;border-radius:0.8px"></div>
<div style="position:absolute;left:964.6px;top:159.2px;width:7.50px;height:8.10px;background:#fff;border:0.6px solid #cfcfcf;box-sizing:border-box;border-radius:0.8px"></div>
<div style="position:absolute;left:964.8px;top:522.8px;width:7.30px;height:6.00px;background:#fff;border:0.6px solid #cfcfcf;box-sizing:border-box;border-radius:0.8px"></div>
<div style="position:absolute;left:962.2px;top:151px;width:0.80px;height:378.20px;background:#d4d4d4;"></div>
<div style="position:absolute;left:0px;top:542.9px;width:974.00px;height:0.60px;background:#d4d4d4;"></div>
<div style="position:absolute;left:600px;top:532.8px;width:354.50px;height:7.00px;background:#d9d9d9;"></div>
<div style="position:absolute;left:768.2px;top:532.5px;width:54.10px;height:7.30px;background:#fff;border:0.6px solid #cfcfcf;box-sizing:border-box;border-radius:0.8px"></div>
<div style="position:absolute;left:592.6px;top:532.3px;width:7.70px;height:8.20px;background:#fff;border:0.6px solid #cfcfcf;box-sizing:border-box;border-radius:1px"></div>
<div style="position:absolute;left:956.6px;top:532.6px;width:7.10px;height:7.40px;background:#fff;border:0.6px solid #cfcfcf;box-sizing:border-box;border-radius:1px"></div>
<svg style="position:absolute;left:0;top:0" width="974" height="547" viewBox="0 0 974 547"><g fill="none" stroke="#fff" stroke-width="1.1">
<rect x="10.5" y="32.4" width="7" height="7" rx="0.5"/>
<path d="M12.3 34.9H15.7"/>
<path d="M12.6 39.4V37.4H15.4V39.4"/>
<path d="M26.6 34.3H29.6A2.3 2.3 0 0 1 29.6 38.9H28"/>
</g>
<path d="M28.4 31.9L25.6 34.3L28.4 36.7Z" fill="#fff"/>
<path d="M35.30 34.68L37.90 34.68L36.60 36.38Z" fill="#fff"/>
<g fill="none" stroke="rgba(255,255,255,0.35)" stroke-width="0.9">
<path d="M49.5 34.3H46.4A2.3 2.3 0 0 0 46.4 38.9H48"/>
<path d="M47.8 32.2L50 34.3L47.8 36.4"/>
</g>
<path d="M53.20 34.68L55.80 34.68L54.50 36.38Z" fill="rgba(255,255,255,0.35)"/>
<rect x="63" y="34.2" width="2.2" height="0.7" fill="#fff"/>
<path d="M62.80 35.88L65.40 35.88L64.10 37.58Z" fill="#fff"/>
<g fill="none" stroke="#fff" stroke-width="0.8"><circle cx="421.6" cy="50.8" r="2.6"/><path d="M419.7 52.7L417.2 55.2"/></g>
<path d="M846.1 32.1L850.2 38.7H842Z" fill="#f2c14e"/>
<rect x="845.7" y="34.1" width="0.8" height="2.6" fill="#5a4a1a"/><rect x="845.7" y="37.2" width="0.8" height="0.8" fill="#5a4a1a"/>
<g fill="none" stroke="#fff" stroke-width="0.8">
<rect x="888.5" y="32.5" width="6.8" height="5.2"/>
<path d="M890.5 35.5L891.9 34.2L893.3 35.5M891.9 34.4V37.5"/>
<path d="M912.8 35.4H918.2"/>
<rect x="936.2" y="33.8" width="4.4" height="4.4"/><path d="M937.6 33.8V32.4H942V36.8H940.6"/>
<path d="M959.6 32.3L965 37.8M965 32.3L959.6 37.8"/>
<circle cx="941.2" cy="50.3" r="2.2"/><path d="M937.4 55.8C937.8 53.6 939.2 52.6 941.2 52.6C942.2 52.6 943 52.9 943.6 53.4"/>
</g>
<path d="M942.8 54.6H945.2M944.2 53.6L945.2 54.6L944.2 55.6" fill="none" stroke="#fff" stroke-width="0.6"/>
<rect x="6" y="65.4" width="11.4" height="12.6" rx="0.8" fill="#dddbdc"/>
<rect x="9.2" y="64" width="5" height="2.6" rx="0.6" fill="#c9c7c8"/>
<path d="M12.8 70H17.6L19.8 72.2V78.6H12.8Z" fill="#f9f4f9" stroke="#cfcfcf" stroke-width="0.6"/>
<path d="M10.30 91.48L12.90 91.48L11.60 93.17Z" fill="#b8b8b8"/>
<g fill="none" stroke-width="0.8">
<path d="M26.8 68.2L30.6 63.2M29.6 68.2L25.6 63.2" stroke="#444"/>
<circle cx="25.9" cy="69.3" r="1.25" stroke="#3c7fc4"/><circle cx="30.4" cy="69.3" r="1.25" stroke="#3c7fc4"/>
</g>
<path d="M24.4 74.2H28.2L29.2 75.2V80.4H24.4Z" fill="#fff" stroke="#666" stroke-width="0.7"/>
<path d="M27.4 76.6H31.2L32.2 77.6V82.6H27.4Z" fill="#dce9f7" stroke="#666" stroke-width="0.7"/>
<path d="M25.5 76H27.5M25.5 77.6H26.8" stroke="#3c7fc4" stroke-width="0.6"/>
<path d="M53.00 78.19L55.60 78.19L54.30 79.88Z" fill="#444"/>
<path d="M24.6 90.6L28 87.4L30.3 89.8L26.9 93Z" fill="#f3b94c"/>
<path d="M28.5 88L31.9 84.9M29.6 89.1L32.4 86.5" stroke="#333" stroke-width="0.9"/>
<path d="M73.3 101.4H75.69999999999999V103.8M73.8 101.9L75.6 103.7" fill="none" stroke="#777" stroke-width="0.5"/>
<path d="M178.29999999999998 101.4H180.7V103.8M178.79999999999998 101.9L180.6 103.7" fill="none" stroke="#777" stroke-width="0.5"/>
<path d="M312.9 101.4H315.3V103.8M313.4 101.9L315.2 103.7" fill="none" stroke="#777" stroke-width="0.5"/>
<path d="M384.3 101.4H386.70000000000005V103.8M384.8 101.9L386.6 103.7" fill="none" stroke="#777" stroke-width="0.5"/>
<path d="M132.80 70.48L135.40 70.48L134.10 72.17Z" fill="#555"/>
<path d="M155.10 70.48L157.70 70.48L156.40 72.17Z" fill="#555"/>
<text x="162.8" y="74.6" font-size="8.2" fill="#444" font-family="Liberation Sans">A</text>
<path d="M167.6 67.6L168.8 66.2L170 67.6Z" fill="#3c7fc4"/>
<text x="173.9" y="74.6" font-size="6.6" fill="#444" font-family="Liberation Sans">A</text>
<path d="M177.9 66.3L179.1 67.7L180.3 66.3Z" fill="#3c7fc4"/>
<text x="84.1" y="89.1" font-size="6.8" font-weight="bold" fill="#444" font-family="Liberation Sans">B</text>
<text x="96.2" y="89.1" font-size="6.8" font-style="italic" fill="#444" font-family="Liberation Sans">I</text>
<text x="107.2" y="88.6" font-size="6.6" fill="#444" font-family="Liberation Sans">U</text>
<rect x="107.2" y="89.6" width="5" height="0.6" fill="#444"/>
<path d="M116.80 85.88L119.40 85.88L118.10 87.57Z" fill="#444"/>
<rect x="123.3" y="82" width="0.6" height="9" fill="#dadada"/>
<g fill="none" stroke="#bdbdbd" stroke-width="0.7"><rect x="127.5" y="83" width="7.4" height="7.2"/><path d="M131.2 83V90.2M127.5 86.6H134.9"/></g>
<path d="M138.30 85.88L140.90 85.88L139.60 87.57Z" fill="#444"/>
<rect x="145.3" y="82" width="0.6" height="9" fill="#dadada"/>
<path d="M150.8 84.6L153.4 82.4L156.2 85.2L153.6 87.6Z" fill="#fff" stroke="#555" stroke-width="0.7"/>
<circle cx="156.6" cy="86" r="0.9" fill="#3c7fc4"/>
<rect x="149.2" y="88.6" width="8.3" height="2.2" fill="#ffef00"/>
<path d="M160.30 85.88L162.90 85.88L161.60 87.57Z" fill="#444"/>
<text x="166.9" y="87.9" font-size="7" fill="#444" font-family="Liberation Sans">A</text>
<rect x="166" y="88.6" width="8.4" height="2.2" fill="#e8201c"/>
<path d="M177.50 85.88L180.10 85.88L178.80 87.57Z" fill="#444"/>
<rect x="209.1" y="65.2" width="10.9" height="11.5" fill="#c8c8c8"/>
<g stroke="#7b7b7b" stroke-width="0.75">
<path d="M188.8 66.9H195.8" stroke-width="1.1" stroke="#8a8a8a"/>
<path d="M188.8 69.9H195.8" stroke-width="1.1" stroke="#8a8a8a"/>
<path d="M199.8 68.9H206.6" stroke-width="1.1" stroke="#8a8a8a"/>
<path d="M199.8 71.9H206.6" stroke-width="1.1" stroke="#8a8a8a"/>
<path d="M211.2 71.5H218.0" stroke-width="1.1" stroke="#8a8a8a"/>
<path d="M211.2 74.5H218.0" stroke-width="1.1" stroke="#8a8a8a"/>
<path d="M188.8 84.0H195.8"/>
<path d="M188.8 85.9H194.0"/>
<path d="M188.8 87.8H195.8"/>
<path d="M188.8 89.6H193.0"/>
<path d="M199.8 84.0H207"/>
<path d="M200.8 85.9H206"/>
<path d="M199.8 87.8H207"/>
<path d="M201.4 89.6H205.4"/>
<path d="M211 84.0H218"/>
<path d="M212.8 85.9H218"/>
<path d="M211 87.8H218"/>
<path d="M214 89.6H218"/>
<path d="M226.2 83.2H234.0M229.7 85.4H234.0M229.7 87.6H234.0M226.2 89.8H234.0"/>
<path d="M237.2 83.2H245.0M240.7 85.4H245.0M240.7 87.6H245.0M237.2 89.8H245.0"/>
</g>
<rect x="222.1" y="65.5" width="0.6" height="11" fill="#dadada"/><rect x="222.1" y="81" width="0.6" height="10.5" fill="#dadada"/>
<rect x="249.1" y="64" width="0.6" height="28" fill="#dadada"/>
<path d="M226.4 86.5L228.8 85L228.8 88Z" fill="#3c7fc4"/><rect x="228.4" y="86" width="1.2" height="1" fill="#3c7fc4"/>
<path d="M240.6 86.5L238.2 85L238.2 88Z" fill="#3c7fc4"/><rect x="237.4" y="86" width="1.2" height="1" fill="#3c7fc4"/>
<text x="0" y="0" font-size="6" fill="#555" font-family="Liberation Sans" transform="translate(226.8 73.6) rotate(-45)">ab</text>
<path d="M229.2 75.6L234.8 70" stroke="#555" stroke-width="0.8"/><path d="M233.2 70L234.8 70L234.8 71.6" fill="none" stroke="#555" stroke-width="0.7"/>
<path d="M236.40 70.08L239.00 70.08L237.70 71.77Z" fill="#444"/>
<text x="253.8" y="70.4" font-size="5.2" fill="#555" font-family="Liberation Sans">ab</text>
<text x="253.4" y="74.8" font-size="5" fill="#555" font-family="Liberation Sans">c</text>
<path d="M257.2 74L260 71.8" stroke="#3c7fc4" stroke-width="1.1"/>
<rect x="253.3" y="82.4" width="7.2" height="7.6" fill="#fff" stroke="#777" stroke-width="0.6"/>
<path d="M253.3 84.3H260.5M253.3 88.1H260.5" stroke="#999" stroke-width="0.5"/>
<path d="M254.3 86.2H259.5" stroke="#3c7fc4" stroke-width="0.8"/>
<path d="M311.00 86.28L313.60 86.28L312.30 87.97Z" fill="#444"/>
<rect x="320.4" y="65.5" width="66.5" height="10.9" fill="#fff" stroke="#c6c6c6" stroke-width="0.6"/>
<path d="M381.90 70.48L384.50 70.48L383.20 72.17Z" fill="#555"/>
<text x="323.9" y="90.2" font-size="8.6" fill="#3a3a3a" stroke="#3a3a3a" stroke-width="0.25" font-family="Liberation Sans">$</text>
<path d="M333.50 86.08L336.10 86.08L334.80 87.77Z" fill="#444"/>
<text x="339.4" y="90.2" font-size="8.6" fill="#3a3a3a" stroke="#3a3a3a" stroke-width="0.15" font-family="Liberation Sans">%</text>
<text x="352.8" y="88.4" font-size="8" font-weight="bold" fill="#3a3a3a" font-family="Liberation Sans">,</text>
<rect x="362" y="81.5" width="0.6" height="10" fill="#dadada"/>
<text x="369.4" y="85.8" font-size="4.6" fill="#444" font-family="Liberation Sans">.0</text>
<text x="368.2" y="90.4" font-size="4.6" fill="#444" font-family="Liberation Sans">.00</text>
<path d="M365.8 84.2H369M367.4 82.6V85.8" stroke="#3c7fc4" stroke-width="0.9"/>
<text x="379.4" y="85.4" font-size="4.6" fill="#444" font-family="Liberation Sans">.00</text>
<text x="381.2" y="90.4" font-size="4.6" fill="#444" font-family="Liberation Sans">.0</text>
<path d="M376.8 88.6H380.6M379.2 87.2L380.6 88.6L379.2 90" fill="none" stroke="#3c7fc4" stroke-width="0.9"/>
<rect x="389.2" y="62" width="0.6" height="42" fill="#dadada"/>
<g stroke="#c4c4c4" stroke-width="0.5" fill="#fff"><rect x="402.4" y="63.6" width="14.4" height="12.6"/></g>
<g stroke="#d0d0d0" stroke-width="0.4">
<path d="M402.4 66.7H416.8"/>
<path d="M402.4 69.9H416.8"/>
<path d="M402.4 73.0H416.8"/>
<path d="M406.0 63.6V76.2"/>
<path d="M409.6 63.6V76.2"/>
<path d="M413.2 63.6V76.2"/>
</g>
<rect x="406.6" y="63.8" width="3.2" height="2.7" fill="#e4572e"/>
<rect x="406.6" y="67" width="5.6" height="2.7" fill="#3c7fc4"/>
<rect x="406.6" y="70.2" width="4.2" height="2.7" fill="#e4572e"/>
<rect x="406.6" y="73.3" width="2.2" height="2.7" fill="#3c7fc4"/>
<rect x="410.2" y="72.2" width="7.6" height="6.4" fill="#fff" stroke="#666" stroke-width="0.6"/>
<path d="M412.2 74.6H415.8M412.2 76.2H415.8M415 73.4L413 77.4" stroke="#444" stroke-width="0.5"/>
<path d="M423.00 91.88L425.60 91.88L424.30 93.57Z" fill="#555"/>
<rect x="435.6" y="64.4" width="13" height="11.6" fill="#fff" stroke="#999" stroke-width="0.6"/>
<rect x="438.6" y="67.4" width="10" height="8.6" fill="#bcd4ee"/>
<g stroke="#9a9a9a" stroke-width="0.35">
<path d="M435.6 67.2H448.6"/>
<path d="M435.6 70.1H448.6"/>
<path d="M435.6 73.0H448.6"/>
<path d="M438.6 64.4V76"/>
<path d="M441.8 64.4V76"/>
<path d="M445.0 64.4V76"/>
</g>
<path d="M444.8 76.8C445.8 74.4 446.8 73.6 448 73.4L449.4 74.6C448.6 76 447 77.2 444.8 77.4Z" fill="#3c7fc4"/>
<path d="M448 73.2L451.8 68.2" stroke="#555" stroke-width="1.3"/>
<path d="M448.30 91.88L450.90 91.88L449.60 93.57Z" fill="#555"/>
<rect x="457.6" y="63" width="277.4" height="30.8" fill="#fff" stroke="#d4d4d4" stroke-width="0.6"/>
<rect x="728.2" y="63.2" width="6.6" height="30.4" fill="#fff" stroke="#d4d4d4" stroke-width="0.5"/>
<rect x="728.5" y="63.4" width="6" height="11" fill="#f0f0f0"/>
<path d="M729.8 70.2L731.5 68.6L733.2 70.2Z" fill="#c8c8c8"/>
<path d="M728.2 75H734.8M728.2 83.6H734.8" stroke="#d4d4d4" stroke-width="0.5"/>
<path d="M729.8 78.6H733.2L731.5 80.4Z" fill="#444"/>
<path d="M729.9 86.8H733.1M729.9 87.8H733.1L731.5 89.6Z" fill="#444" stroke="#444" stroke-width="0.3"/>
<rect x="512.6" y="65" width="52.4" height="12.4" fill="#fff" stroke="#b4b4b4" stroke-width="0.8"/>
<rect x="513.5" y="65.9" width="50.6" height="10.6" fill="none" stroke="#e4e4e4" stroke-width="0.5"/>
<rect x="567.4" y="66.2" width="50.6" height="10.6" fill="#ffc7ce"/>
<rect x="621.2" y="66.2" width="50.8" height="10.6" fill="#c6efce"/>
<rect x="675.2" y="66.2" width="50.8" height="10.6" fill="#ffeb9c"/>
<rect x="459.8" y="80.4" width="50.4" height="10.6" fill="#f2f2f2" stroke="#8c8c8c" stroke-width="0.6"/>
<rect x="513.4" y="80.4" width="50.8" height="10.8" fill="#a5a5a5" stroke="#3f3f3f" stroke-width="1.1"/>
<rect x="514.6" y="81.6" width="48.4" height="8.4" fill="none" stroke="#d0d0d0" stroke-width="0.3"/>
<rect x="621.4" y="80.2" width="50.6" height="10.6" fill="#ffcc99" stroke="#7f7f7f" stroke-width="0.6"/>
<rect x="675.2" y="89.6" width="50.8" height="0.8" fill="#ff8001"/>
<g fill="#fff" stroke="#777" stroke-width="0.6">
<rect x="745.2" y="63.6" width="7.8" height="3"/><rect x="745.2" y="72.2" width="7.8" height="5.4"/>
<rect x="766.2" y="63.6" width="7.6" height="3"/><rect x="766.2" y="72.2" width="7.6" height="5.4"/>
<rect x="787" y="66.2" width="14.4" height="11.4"/>
</g>
<g stroke="#999" stroke-width="0.4">
<path d="M749.1 63.6V66.6M749.1 72.2V77.6M745.2 74.9H753"/>
<path d="M770 63.6V66.6M770 72.2V77.6M766.2 74.9H773.8"/>
<path d="M790.6 66.2V77.6M797.8 66.2V77.6M787 69H801.4M787 74.6H801.4"/>
</g>
<rect x="751" y="68.1" width="7.6" height="2.6" fill="#c5daf0" stroke="#3c7fc4" stroke-width="0.5"/>
<path d="M745.4 69.4L747.6 67.9V70.9Z" fill="#3c7fc4"/><rect x="747.4" y="69" width="2.6" height="0.8" fill="#3c7fc4"/>
<rect x="768.8" y="68.1" width="5" height="2.6" fill="#c5daf0" stroke="#3c7fc4" stroke-width="0.5"/>
<path d="M774 66.6L780.8 73M780.8 66.6L774 73" stroke="#e05a3a" stroke-width="1"/>
<rect x="792.2" y="69.2" width="3.2" height="5.2" fill="#3c7fc4"/>
<path d="M787.4 64.4H800.8" stroke="#3c7fc4" stroke-width="0.5"/><path d="M787.4 64.4L789 63.4V65.4Z M800.8 64.4L799.2 63.4V65.4Z" fill="#3c7fc4"/>
<path d="M787.2 63.2V65.6M801.2 63.2V65.6" stroke="#3c7fc4" stroke-width="0.4"/>
<path d="M750.30 91.48L752.90 91.48L751.60 93.17Z" fill="#555"/>
<path d="M772.10 91.48L774.70 91.48L773.40 93.17Z" fill="#555"/>
<path d="M793.30 91.48L795.90 91.48L794.60 93.17Z" fill="#555"/>
<rect x="808.2" y="62" width="0.6" height="42" fill="#dadada"/>
<rect x="738.9" y="62" width="0.6" height="42" fill="#dadada"/>
<path d="M819.4 63.6H812.6L816.2 66.6L812.6 69.6H819.4" fill="none" stroke="#333" stroke-width="1"/>
<path d="M852.10 66.69L854.70 66.69L853.40 68.38Z" fill="#555"/>
<rect x="812.4" y="74.2" width="7" height="8.2" fill="#fff" stroke="#666" stroke-width="0.6"/>
<rect x="812.4" y="74.2" width="7" height="1.2" fill="#888"/>
<path d="M815.9 76.4V80.2M814.3 78.8L815.9 80.6L817.5 78.8" fill="none" stroke="#3c7fc4" stroke-width="0.9"/>
<path d="M830.90 77.88L833.50 77.88L832.20 79.57Z" fill="#555"/>
<path d="M812.6 90.6L816.6 86.6L819.2 88.8L815.2 92.8Z" fill="#e8728a"/>
<path d="M813.8 91.8L815 90.6" stroke="#fff" stroke-width="0.5"/>
<path d="M836.50 89.48L839.10 89.48L837.80 91.17Z" fill="#555"/>
<text x="859.8" y="70.4" font-size="8" font-weight="bold" fill="#3c7fc4" font-family="Liberation Sans">A</text>
<text x="860.2" y="78" font-size="7.4" font-weight="bold" fill="#9b59c8" font-family="Liberation Sans">Z</text>
<path d="M866.4 68.2H875.4L872 72V76.8L869.8 75.6V72Z" fill="#8a8a8a"/>
<path d="M872.90 91.88L875.50 91.88L874.20 93.57Z" fill="#555"/>
<g fill="none" stroke="#3c7fc4"><circle cx="892.4" cy="68.6" r="4" stroke-width="1.25"/><path d="M889.4 71.6L883.8 77" stroke-width="1.8"/></g>
<path d="M897.10 91.88L899.70 91.88L898.40 93.57Z" fill="#555"/>
<rect x="902.6" y="62" width="0.6" height="42" fill="#dadada"/>
<path d="M964.2 103.8L966.2 101.8L968.2 103.8" fill="none" stroke="#444" stroke-width="0.9"/>
<path d="M46.51 117.07L49.89 117.07L48.20 119.27Z" fill="#555"/>
<g fill="#a8a8a8"><rect x="60.6" y="115" width="0.8" height="0.8"/><rect x="60.6" y="117.8" width="0.8" height="0.8"/><rect x="60.6" y="120.6" width="0.8" height="0.8"/></g>
<path d="M76.4 116.2L80.6 120.4M80.6 116.2L76.4 120.4" stroke="#a8a8a8" stroke-width="0.8"/>
<path d="M94.6 118.4L96.4 120.4L99.8 116" fill="none" stroke="#a8a8a8" stroke-width="0.8"/>
<text x="112.4" y="120.8" font-size="8" font-style="italic" fill="#555" stroke="#555" stroke-width="0.2" font-family="Liberation Serif">f<tspan font-size="5.6" dy="0.2">x</tspan></text>
<path d="M965 119.4L967 117.4L969 119.4" fill="none" stroke="#444" stroke-width="0.9"/>
<path d="M9.6 152.6V158.6H3.6Z" fill="#b8b8b8"/>
<path d="M966.6 156.2L968.35 154.4L970.1 156.2Z" fill="#555"/>
<path d="M966.9 525.1L968.5 526.7L970.1 525.1Z" fill="#555"/>
<path d="M597.6 534.6V538.2L595.6 536.4Z" fill="#444"/>
<path d="M959.2 534.6V538.2L961.2 536.4Z" fill="#444"/>
<path d="M15 534.6L13.6 536L15 537.4" fill="none" stroke="#b0b0b0" stroke-width="0.6"/>
<path d="M27.6 534.6L29 536L27.6 537.4" fill="none" stroke="#b0b0b0" stroke-width="0.6"/>
<rect x="50.5" y="531" width="0.6" height="10" fill="#9a9a9a"/>
<rect x="165.8" y="531" width="0.6" height="10" fill="#9a9a9a"/>
<circle cx="187.3" cy="536" r="3.7" fill="none" stroke="#6a6a6a" stroke-width="0.7"/><path d="M185.2 536H189.4M187.3 533.9V538.1" stroke="#6a6a6a" stroke-width="0.7"/>
<g fill="#b0b0b0"><rect x="584.2" y="533" width="0.8" height="0.8"/><rect x="584.2" y="535.6" width="0.8" height="0.8"/><rect x="584.2" y="538.2" width="0.8" height="0.8"/></g>
<rect x="29.4" y="545.6" width="5.6" height="1.6" rx="0.6" fill="#333"/>
<rect x="829" y="543.2" width="19" height="4" fill="#c8c8c8"/>
<rect x="834.5" y="544.8" width="7" height="2.5" fill="none" stroke="#666" stroke-width="0.5"/>
<rect x="854" y="544.8" width="7" height="2.5" fill="none" stroke="#777" stroke-width="0.5"/>
<rect x="874" y="544.8" width="7" height="2.5" fill="none" stroke="#777" stroke-width="0.5"/>
<rect x="918.6" y="544.6" width="1.4" height="2.4" fill="#444"/></svg>
<div class="u" style="left:461.6px;top:66.4px;line-height:10px;font-size:7.0px;color:#222;transform:scaleX(0.94);transform-origin:0 50%;text-shadow:none;">Normal_Out ...</div>
<div class="u" style="left:515.6px;top:66.4px;line-height:10px;font-size:7.0px;color:#000;transform:scaleX(0.94);transform-origin:0 50%;text-shadow:none;">Normal</div>
<div class="u" style="left:569.8px;top:66.4px;line-height:10px;font-size:7.0px;color:#9c0006;transform:scaleX(0.94);transform-origin:0 50%;text-shadow:none;">Bad</div>
<div class="u" style="left:623.4px;top:66.4px;line-height:10px;font-size:7.0px;color:#006100;transform:scaleX(0.94);transform-origin:0 50%;text-shadow:none;">Good</div>
<div class="u" style="left:677.4px;top:66.4px;line-height:10px;font-size:7.0px;color:#9c5700;transform:scaleX(0.94);transform-origin:0 50%;text-shadow:none;">Neutral</div>
<div class="u" style="left:461.6px;top:80.6px;line-height:10px;font-size:7.0px;color:#fa7d00;transform:scaleX(0.94);transform-origin:0 50%;text-shadow:none;font-weight:bold">Calculation</div>
<div class="u" style="left:515.6px;top:80.6px;line-height:10px;font-size:7.0px;color:#fff;transform:scaleX(0.94);transform-origin:0 50%;text-shadow:none;font-weight:bold">Check Cell</div>
<div class="u" style="left:569.8px;top:80.6px;line-height:10px;font-size:7.0px;color:#7f7f7f;transform:scaleX(0.94);transform-origin:0 50%;text-shadow:none;font-style:italic">Explanatory ...</div>
<div class="u" style="left:623.4px;top:80.6px;line-height:10px;font-size:7.0px;color:#3f3f76;transform:scaleX(0.94);transform-origin:0 50%;text-shadow:none;">Input</div>
<div class="u" style="left:677.4px;top:80.6px;line-height:10px;font-size:7.0px;color:#fa7d00;transform:scaleX(0.94);transform-origin:0 50%;text-shadow:none;">Linked Cell</div>
<div class="u" style="left:3.0px;top:544.8px;line-height:10px;font-size:7.0px;color:#555;transform:scaleX(0.94);transform-origin:0 50%;text-shadow:none;">Ready</div>
<div class="u" style="left:957.0px;top:544.0px;line-height:10px;font-size:7.0px;color:#444;transform:scaleX(0.94);transform-origin:0 50%;text-shadow:none;">100%</div>
<div class="u" style="left:-45.8px;width:120px;text-align:center;top:47.1px;line-height:10px;font-size:6.82px;color:#fff;transform:scaleX(0.88);transform-origin:50% 50%;">File</div>
<div class="u" style="left:-15.200000000000003px;width:120px;text-align:center;top:47.1px;line-height:10px;font-size:6.82px;color:#217346;transform:scaleX(0.88);transform-origin:50% 50%;">Home</div>
<div class="u" style="left:13.900000000000006px;width:120px;text-align:center;top:47.1px;line-height:10px;font-size:6.82px;color:#fff;transform:scaleX(0.88);transform-origin:50% 50%;">Insert</div>
<div class="u" style="left:51.5px;width:120px;text-align:center;top:47.1px;line-height:10px;font-size:6.82px;color:#fff;transform:scaleX(0.88);transform-origin:50% 50%;">Page Layout</div>
<div class="u" style="left:94.4px;width:120px;text-align:center;top:47.1px;line-height:10px;font-size:6.82px;color:#fff;transform:scaleX(0.88);transform-origin:50% 50%;">Formulas</div>
<div class="u" style="left:126.4px;width:120px;text-align:center;top:47.1px;line-height:10px;font-size:6.82px;color:#fff;transform:scaleX(0.88);transform-origin:50% 50%;">Data</div>
<div class="u" style="left:155.5px;width:120px;text-align:center;top:47.1px;line-height:10px;font-size:6.82px;color:#fff;transform:scaleX(0.88);transform-origin:50% 50%;">Review</div>
<div class="u" style="left:185px;width:120px;text-align:center;top:47.1px;line-height:10px;font-size:6.82px;color:#fff;transform:scaleX(0.88);transform-origin:50% 50%;">View</div>
<div class="u" style="left:218.5px;width:120px;text-align:center;top:47.1px;line-height:10px;font-size:6.82px;color:#fff;transform:scaleX(0.88);transform-origin:50% 50%;">Developer</div>
<div class="u" style="left:252px;width:120px;text-align:center;top:47.1px;line-height:10px;font-size:6.82px;color:#fff;transform:scaleX(0.88);transform-origin:50% 50%;">Help</div>
<div class="u" style="left:307.6px;width:120px;text-align:center;top:47.1px;line-height:10px;font-size:6.82px;color:#fff;transform:scaleX(0.88);transform-origin:50% 50%;">deskPDF Studio XE Creator</div>
<div class="u" style="left:428.2px;top:47.1px;line-height:10px;font-size:6.82px;color:#fff;transform:scaleX(0.88);transform-origin:0 50%;">Tell me what you want to do</div>
<div class="u" style="left:438.9px;top:30.200000000000003px;line-height:10px;font-size:6.82px;color:#fff;transform:scaleX(0.88);transform-origin:0 50%;white-space:pre;">AlleghanyWalk Test Results  -  Excel</div>
<div class="u" style="left:852.4px;top:30.299999999999997px;line-height:10px;font-size:6.82px;color:#fff;transform:scaleX(0.88);transform-origin:0 50%;">Dan Barr</div>
<div class="u" style="left:946.6px;top:47.3px;line-height:10px;font-size:6.82px;color:#fff;transform:scaleX(0.88);transform-origin:0 50%;">Share</div>
<div class="u" style="left:-24.799999999999997px;width:120px;text-align:center;top:97.7px;line-height:10px;font-size:6.82px;color:#444;transform:scaleX(0.88);transform-origin:50% 50%;">Clipboard</div>
<div class="u" style="left:67.5px;width:120px;text-align:center;top:97.7px;line-height:10px;font-size:6.82px;color:#444;transform:scaleX(0.88);transform-origin:50% 50%;">Font</div>
<div class="u" style="left:187px;width:120px;text-align:center;top:97.7px;line-height:10px;font-size:6.82px;color:#444;transform:scaleX(0.88);transform-origin:50% 50%;">Alignment</div>
<div class="u" style="left:290.2px;width:120px;text-align:center;top:97.7px;line-height:10px;font-size:6.82px;color:#444;transform:scaleX(0.88);transform-origin:50% 50%;">Number</div>
<div class="u" style="left:504px;width:120px;text-align:center;top:97.7px;line-height:10px;font-size:6.82px;color:#444;transform:scaleX(0.88);transform-origin:50% 50%;">Styles</div>
<div class="u" style="left:713.2px;width:120px;text-align:center;top:97.7px;line-height:10px;font-size:6.82px;color:#444;transform:scaleX(0.88);transform-origin:50% 50%;">Cells</div>
<div class="u" style="left:795.5px;width:120px;text-align:center;top:97.7px;line-height:10px;font-size:6.82px;color:#444;transform:scaleX(0.88);transform-origin:50% 50%;">Editing</div>
<div class="u" style="left:5.0px;top:79.6px;line-height:10px;font-size:6.82px;color:#b4b4b4;transform:scaleX(0.88);transform-origin:0 50%;">Paste</div>
<div class="u" style="left:33.8px;top:62.2px;line-height:10px;font-size:6.82px;color:#363636;transform:scaleX(0.88);transform-origin:0 50%;">Cut</div>
<div class="u" style="left:33.8px;top:73.9px;line-height:10px;font-size:6.82px;color:#363636;transform:scaleX(0.88);transform-origin:0 50%;">Copy</div>
<div class="u" style="left:33.8px;top:85.5px;line-height:10px;font-size:6.82px;color:#363636;transform:scaleX(0.88);transform-origin:0 50%;">Format Painter</div>
<div class="u" style="left:83.3px;top:66.3px;line-height:10px;font-size:6.82px;color:#444;transform:scaleX(0.88);transform-origin:0 50%;">Calibri</div>
<div class="u" style="left:139.8px;top:66.3px;line-height:10px;font-size:6.82px;color:#444;transform:scaleX(0.88);transform-origin:0 50%;">11</div>
<div class="u" style="left:262.8px;top:66.5px;line-height:10px;font-size:6.82px;color:#363636;transform:scaleX(0.88);transform-origin:0 50%;">Wrap Text</div>
<div class="u" style="left:262.8px;top:82.0px;line-height:10px;font-size:6.82px;color:#363636;transform:scaleX(0.88);transform-origin:0 50%;">Merge &amp; Center</div>
<div class="u" style="left:322.2px;top:66.2px;line-height:10px;font-size:6.82px;color:#444;transform:scaleX(0.88);transform-origin:0 50%;">General</div>
<div class="u" style="left:350.2px;width:120px;text-align:center;top:79.4px;line-height:10px;font-size:6.82px;color:#363636;transform:scaleX(0.88);transform-origin:50% 50%;">Conditional</div>
<div class="u" style="left:347.6px;width:120px;text-align:center;top:87.5px;line-height:10px;font-size:6.82px;color:#363636;transform:scaleX(0.88);transform-origin:50% 50%;">Formatting</div>
<div class="u" style="left:382.4px;width:120px;text-align:center;top:79.4px;line-height:10px;font-size:6.82px;color:#363636;transform:scaleX(0.88);transform-origin:50% 50%;">Format as</div>
<div class="u" style="left:380.2px;width:120px;text-align:center;top:87.5px;line-height:10px;font-size:6.82px;color:#363636;transform:scaleX(0.88);transform-origin:50% 50%;">Table</div>
<div class="u" style="left:691.8px;width:120px;text-align:center;top:79.6px;line-height:10px;font-size:6.82px;color:#363636;transform:scaleX(0.88);transform-origin:50% 50%;">Insert</div>
<div class="u" style="left:713.6px;width:120px;text-align:center;top:79.6px;line-height:10px;font-size:6.82px;color:#363636;transform:scaleX(0.88);transform-origin:50% 50%;">Delete</div>
<div class="u" style="left:734.8px;width:120px;text-align:center;top:79.6px;line-height:10px;font-size:6.82px;color:#363636;transform:scaleX(0.88);transform-origin:50% 50%;">Format</div>
<div class="u" style="left:821.8px;top:62.2px;line-height:10px;font-size:6.82px;color:#363636;transform:scaleX(0.88);transform-origin:0 50%;">AutoSum</div>
<div class="u" style="left:821.8px;top:73.6px;line-height:10px;font-size:6.82px;color:#363636;transform:scaleX(0.88);transform-origin:0 50%;">Fill</div>
<div class="u" style="left:821.8px;top:85.3px;line-height:10px;font-size:6.82px;color:#363636;transform:scaleX(0.88);transform-origin:0 50%;">Clear</div>
<div class="u" style="left:807.8px;width:120px;text-align:center;top:79.6px;line-height:10px;font-size:6.82px;color:#363636;transform:scaleX(0.88);transform-origin:50% 50%;">Sort &amp;</div>
<div class="u" style="left:806.4px;width:120px;text-align:center;top:87.6px;line-height:10px;font-size:6.82px;color:#363636;transform:scaleX(0.88);transform-origin:50% 50%;">Filter</div>
<div class="u" style="left:829.8px;width:120px;text-align:center;top:79.6px;line-height:10px;font-size:6.82px;color:#363636;transform:scaleX(0.88);transform-origin:50% 50%;">Find &amp;</div>
<div class="u" style="left:828.2px;width:120px;text-align:center;top:87.6px;line-height:10px;font-size:6.82px;color:#363636;transform:scaleX(0.88);transform-origin:50% 50%;">Select</div>
<div class="u" style="left:5.5px;top:113.4px;line-height:10px;font-size:7.04px;color:#444;transform:scaleX(0.88);transform-origin:0 50%;">BP7</div>
<div class="u" style="left:57px;top:531.2px;line-height:10px;font-size:6.82px;color:#666;transform:scaleX(0.88);transform-origin:0 50%;transform:none;font-size:6.3px">Full</div>
<div class="u" style="left:80px;top:531.2px;line-height:10px;font-size:6.82px;color:#217346;transform:scaleX(0.88);transform-origin:0 50%;font-weight:bold;transform:scaleX(0.95);font-size:6.8px">Out of Sample</div>
<div class="u" style="left:137.8px;top:531.2px;line-height:10px;font-size:6.82px;color:#666;transform:scaleX(0.88);transform-origin:0 50%;transform:none;font-size:6.4px">Sample</div>
</body></html>
